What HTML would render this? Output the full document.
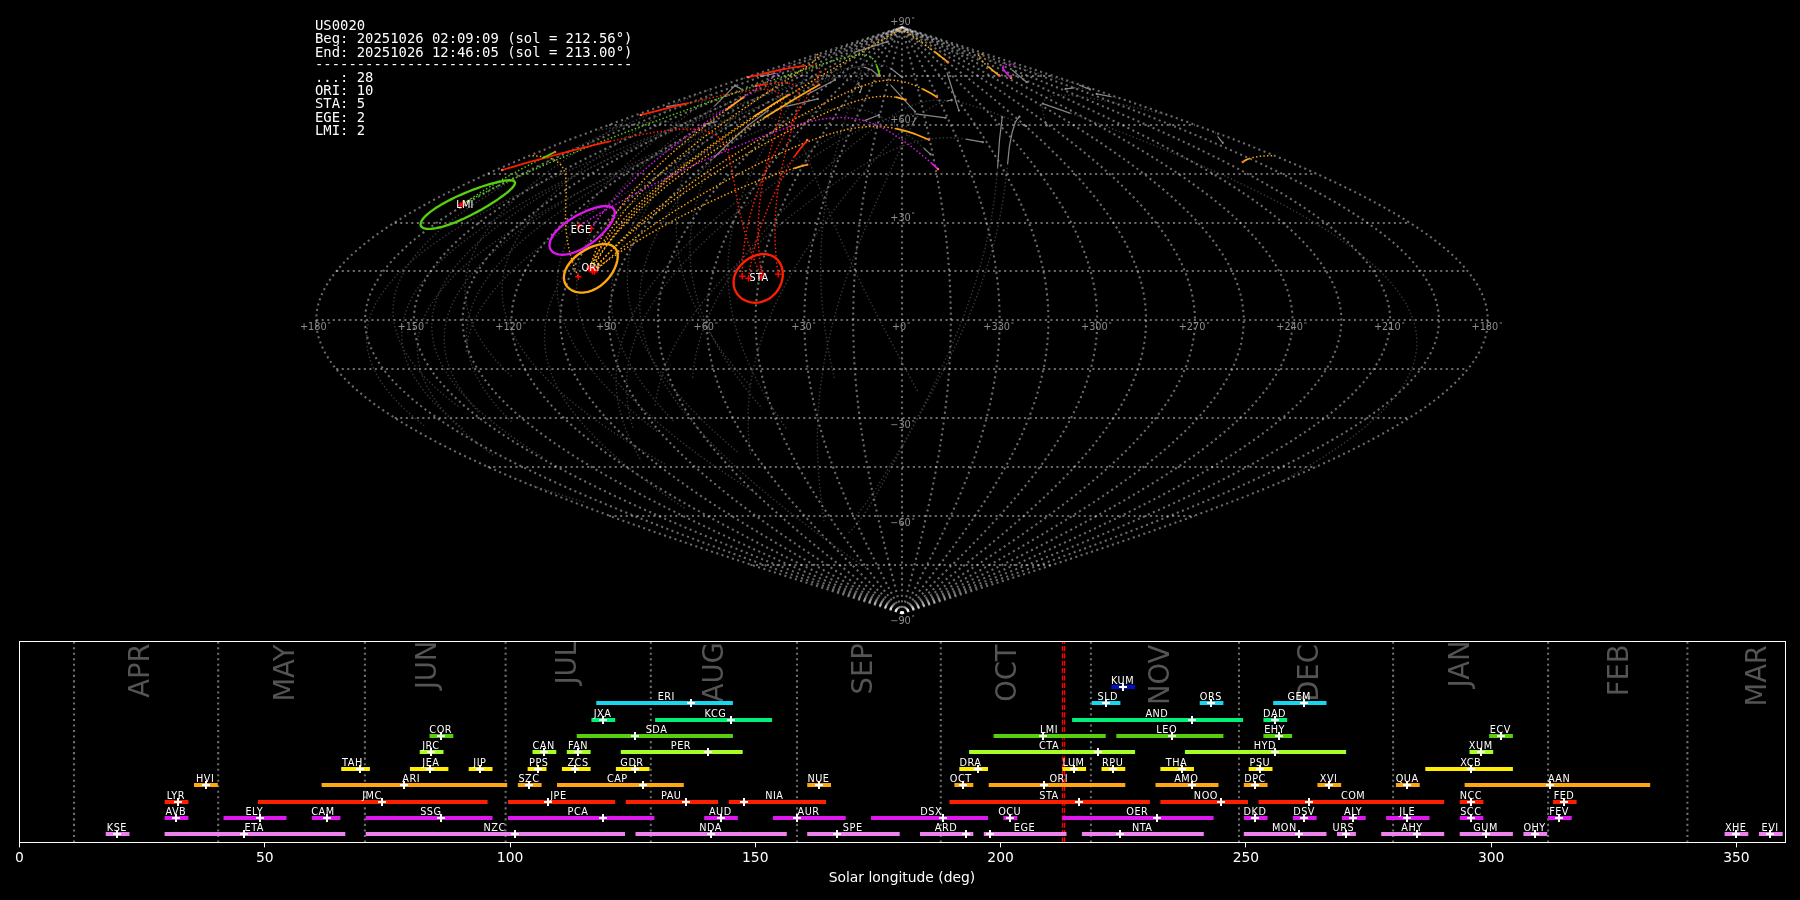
<!DOCTYPE html>
<html lang="en"><head><meta charset="utf-8"><title>US0020 meteor radiants</title>
<style>html,body{margin:0;padding:0;background:#000;overflow:hidden}svg{display:block;will-change:transform;opacity:0.999}</style>
</head><body>
<svg width="1800" height="900" viewBox="0 0 1800 900">
<g fill="none" stroke="#fff" stroke-opacity="0.42" stroke-width="2.08" stroke-dasharray="2.08 3.44">
<path d="M750.4 565 L1053.6 565"/>
<path d="M609.1 516 L1194.9 516"/>
<path d="M487.8 467 L1316.2 467"/>
<path d="M394.7 418 L1409.3 418"/>
<path d="M336.2 369 L1467.8 369"/>
<path d="M316.2 320 L1487.8 320"/>
<path d="M336.2 271 L1467.8 271"/>
<path d="M394.7 223 L1409.3 223"/>
<path d="M487.8 174 L1316.2 174"/>
<path d="M609.1 125 L1194.9 125"/>
<path d="M750.4 76 L1053.6 76"/>
<path d="M902 613.3 L912.2 610 L922.4 606.8 L932.7 603.5 L942.9 600.3 L953.1 597 L963.2 593.8 L973.4 590.5 L983.5 587.2 L993.6 584 L1003.7 580.7 L1013.8 577.5 L1023.8 574.2 L1033.8 571 L1043.7 567.7 L1053.6 564.5 L1063.5 561.2 L1073.3 557.9 L1083 554.7 L1092.7 551.4 L1102.4 548.2 L1111.9 544.9 L1121.4 541.7 L1130.9 538.4 L1140.3 535.1 L1149.6 531.9 L1158.8 528.6 L1167.9 525.4 L1177 522.1 L1186 518.9 L1194.9 515.6 L1203.7 512.3 L1212.4 509.1 L1221 505.8 L1229.6 502.6 L1238 499.3 L1246.3 496.1 L1254.5 492.8 L1262.6 489.5 L1270.7 486.3 L1278.5 483 L1286.3 479.8 L1294 476.5 L1301.5 473.3 L1308.9 470 L1316.2 466.8 L1323.4 463.5 L1330.4 460.2 L1337.3 457 L1344.1 453.7 L1350.7 450.5 L1357.2 447.2 L1363.6 444 L1369.8 440.7 L1375.9 437.4 L1381.9 434.2 L1387.6 430.9 L1393.3 427.7 L1398.8 424.4 L1404.1 421.2 L1409.3 417.9 L1414.3 414.6 L1419.2 411.4 L1423.9 408.1 L1428.5 404.9 L1432.9 401.6 L1437.1 398.4 L1441.2 395.1 L1445.1 391.8 L1448.9 388.6 L1452.5 385.3 L1455.9 382.1 L1459.1 378.8 L1462.2 375.6 L1465.1 372.3 L1467.8 369.1 L1470.4 365.8 L1472.8 362.5 L1475 359.3 L1477 356 L1478.9 352.8 L1480.6 349.5 L1482.1 346.3 L1483.4 343 L1484.6 339.7 L1485.6 336.5 L1486.4 333.2 L1487 330 L1487.4 326.7 L1487.7 323.5 L1487.8 320.2 L1487.7 316.9 L1487.4 313.7 L1487 310.4 L1486.4 307.2 L1485.6 303.9 L1484.6 300.7 L1483.4 297.4 L1482.1 294.1 L1480.6 290.9 L1478.9 287.6 L1477 284.4 L1475 281.1 L1472.8 277.9 L1470.4 274.6 L1467.8 271.3 L1465.1 268.1 L1462.2 264.8 L1459.1 261.6 L1455.9 258.3 L1452.5 255.1 L1448.9 251.8 L1445.1 248.6 L1441.2 245.3 L1437.1 242 L1432.9 238.8 L1428.5 235.5 L1423.9 232.3 L1419.2 229 L1414.3 225.8 L1409.3 222.5 L1404.1 219.2 L1398.8 216 L1393.3 212.7 L1387.6 209.5 L1381.9 206.2 L1375.9 203 L1369.8 199.7 L1363.6 196.4 L1357.2 193.2 L1350.7 189.9 L1344.1 186.7 L1337.3 183.4 L1330.4 180.2 L1323.4 176.9 L1316.2 173.6 L1308.9 170.4 L1301.5 167.1 L1294 163.9 L1286.3 160.6 L1278.5 157.4 L1270.7 154.1 L1262.6 150.9 L1254.5 147.6 L1246.3 144.3 L1238 141.1 L1229.6 137.8 L1221 134.6 L1212.4 131.3 L1203.7 128.1 L1194.9 124.8 L1186 121.5 L1177 118.3 L1167.9 115 L1158.8 111.8 L1149.6 108.5 L1140.3 105.3 L1130.9 102 L1121.4 98.7 L1111.9 95.5 L1102.4 92.2 L1092.7 89 L1083 85.7 L1073.3 82.5 L1063.5 79.2 L1053.6 75.9 L1043.7 72.7 L1033.8 69.4 L1023.8 66.2 L1013.8 62.9 L1003.7 59.7 L993.6 56.4 L983.5 53.2 L973.4 49.9 L963.2 46.6 L953.1 43.4 L942.9 40.1 L932.7 36.9 L922.4 33.6 L912.2 30.4 L902 27.1"/>
<path d="M902 613.3 L911.4 610 L920.7 606.8 L930.1 603.5 L939.5 600.3 L948.8 597 L958.1 593.8 L967.4 590.5 L976.7 587.2 L986 584 L995.2 580.7 L1004.5 577.5 L1013.6 574.2 L1022.8 571 L1031.9 567.7 L1041 564.5 L1050 561.2 L1059 557.9 L1067.9 554.7 L1076.8 551.4 L1085.7 548.2 L1094.4 544.9 L1103.2 541.7 L1111.8 538.4 L1120.4 535.1 L1128.9 531.9 L1137.4 528.6 L1145.8 525.4 L1154.1 522.1 L1162.3 518.9 L1170.5 515.6 L1178.6 512.3 L1186.6 509.1 L1194.5 505.8 L1202.3 502.6 L1210 499.3 L1217.6 496.1 L1225.2 492.8 L1232.6 489.5 L1239.9 486.3 L1247.2 483 L1254.3 479.8 L1261.3 476.5 L1268.2 473.3 L1275 470 L1281.7 466.8 L1288.3 463.5 L1294.7 460.2 L1301.1 457 L1307.3 453.7 L1313.3 450.5 L1319.3 447.2 L1325.1 444 L1330.8 440.7 L1336.4 437.4 L1341.9 434.2 L1347.2 430.9 L1352.3 427.7 L1357.4 424.4 L1362.3 421.2 L1367 417.9 L1371.6 414.6 L1376.1 411.4 L1380.4 408.1 L1384.6 404.9 L1388.7 401.6 L1392.6 398.4 L1396.3 395.1 L1399.9 391.8 L1403.3 388.6 L1406.6 385.3 L1409.7 382.1 L1412.7 378.8 L1415.5 375.6 L1418.2 372.3 L1420.7 369.1 L1423 365.8 L1425.2 362.5 L1427.2 359.3 L1429.1 356 L1430.8 352.8 L1432.4 349.5 L1433.8 346.3 L1435 343 L1436 339.7 L1436.9 336.5 L1437.7 333.2 L1438.2 330 L1438.6 326.7 L1438.9 323.5 L1439 320.2 L1438.9 316.9 L1438.6 313.7 L1438.2 310.4 L1437.7 307.2 L1436.9 303.9 L1436 300.7 L1435 297.4 L1433.8 294.1 L1432.4 290.9 L1430.8 287.6 L1429.1 284.4 L1427.2 281.1 L1425.2 277.9 L1423 274.6 L1420.7 271.3 L1418.2 268.1 L1415.5 264.8 L1412.7 261.6 L1409.7 258.3 L1406.6 255.1 L1403.3 251.8 L1399.9 248.6 L1396.3 245.3 L1392.6 242 L1388.7 238.8 L1384.6 235.5 L1380.4 232.3 L1376.1 229 L1371.6 225.8 L1367 222.5 L1362.3 219.2 L1357.4 216 L1352.3 212.7 L1347.2 209.5 L1341.9 206.2 L1336.4 203 L1330.8 199.7 L1325.1 196.4 L1319.3 193.2 L1313.3 189.9 L1307.3 186.7 L1301.1 183.4 L1294.7 180.2 L1288.3 176.9 L1281.7 173.6 L1275 170.4 L1268.2 167.1 L1261.3 163.9 L1254.3 160.6 L1247.2 157.4 L1239.9 154.1 L1232.6 150.9 L1225.2 147.6 L1217.6 144.3 L1210 141.1 L1202.3 137.8 L1194.5 134.6 L1186.6 131.3 L1178.6 128.1 L1170.5 124.8 L1162.3 121.5 L1154.1 118.3 L1145.8 115 L1137.4 111.8 L1128.9 108.5 L1120.4 105.3 L1111.8 102 L1103.2 98.7 L1094.4 95.5 L1085.7 92.2 L1076.8 89 L1067.9 85.7 L1059 82.5 L1050 79.2 L1041 75.9 L1031.9 72.7 L1022.8 69.4 L1013.6 66.2 L1004.5 62.9 L995.2 59.7 L986 56.4 L976.7 53.2 L967.4 49.9 L958.1 46.6 L948.8 43.4 L939.5 40.1 L930.1 36.9 L920.7 33.6 L911.4 30.4 L902 27.1"/>
<path d="M902 613.3 L910.5 610 L919 606.8 L927.5 603.5 L936.1 600.3 L944.5 597 L953 593.8 L961.5 590.5 L969.9 587.2 L978.4 584 L986.8 580.7 L995.1 577.5 L1003.5 574.2 L1011.8 571 L1020.1 567.7 L1028.3 564.5 L1036.6 561.2 L1044.7 557.9 L1052.8 554.7 L1060.9 551.4 L1069 548.2 L1076.9 544.9 L1084.9 541.7 L1092.7 538.4 L1100.6 535.1 L1108.3 531.9 L1116 528.6 L1123.6 525.4 L1131.2 522.1 L1138.7 518.9 L1146.1 515.6 L1153.4 512.3 L1160.7 509.1 L1167.9 505.8 L1175 502.6 L1182 499.3 L1188.9 496.1 L1195.8 492.8 L1202.5 489.5 L1209.2 486.3 L1215.8 483 L1222.3 479.8 L1228.6 476.5 L1234.9 473.3 L1241.1 470 L1247.2 466.8 L1253.2 463.5 L1259 460.2 L1264.8 457 L1270.4 453.7 L1276 450.5 L1281.4 447.2 L1286.7 444 L1291.9 440.7 L1296.9 437.4 L1301.9 434.2 L1306.7 430.9 L1311.4 427.7 L1316 424.4 L1320.4 421.2 L1324.8 417.9 L1329 414.6 L1333 411.4 L1337 408.1 L1340.8 404.9 L1344.4 401.6 L1348 398.4 L1351.4 395.1 L1354.6 391.8 L1357.7 388.6 L1360.7 385.3 L1363.6 382.1 L1366.3 378.8 L1368.8 375.6 L1371.2 372.3 L1373.5 369.1 L1375.7 365.8 L1377.6 362.5 L1379.5 359.3 L1381.2 356 L1382.7 352.8 L1384.1 349.5 L1385.4 346.3 L1386.5 343 L1387.5 339.7 L1388.3 336.5 L1389 333.2 L1389.5 330 L1389.9 326.7 L1390.1 323.5 L1390.2 320.2 L1390.1 316.9 L1389.9 313.7 L1389.5 310.4 L1389 307.2 L1388.3 303.9 L1387.5 300.7 L1386.5 297.4 L1385.4 294.1 L1384.1 290.9 L1382.7 287.6 L1381.2 284.4 L1379.5 281.1 L1377.6 277.9 L1375.7 274.6 L1373.5 271.3 L1371.2 268.1 L1368.8 264.8 L1366.3 261.6 L1363.6 258.3 L1360.7 255.1 L1357.7 251.8 L1354.6 248.6 L1351.4 245.3 L1348 242 L1344.4 238.8 L1340.8 235.5 L1337 232.3 L1333 229 L1329 225.8 L1324.8 222.5 L1320.4 219.2 L1316 216 L1311.4 212.7 L1306.7 209.5 L1301.9 206.2 L1296.9 203 L1291.9 199.7 L1286.7 196.4 L1281.4 193.2 L1276 189.9 L1270.4 186.7 L1264.8 183.4 L1259 180.2 L1253.2 176.9 L1247.2 173.6 L1241.1 170.4 L1234.9 167.1 L1228.6 163.9 L1222.3 160.6 L1215.8 157.4 L1209.2 154.1 L1202.5 150.9 L1195.8 147.6 L1188.9 144.3 L1182 141.1 L1175 137.8 L1167.9 134.6 L1160.7 131.3 L1153.4 128.1 L1146.1 124.8 L1138.7 121.5 L1131.2 118.3 L1123.6 115 L1116 111.8 L1108.3 108.5 L1100.6 105.3 L1092.7 102 L1084.9 98.7 L1076.9 95.5 L1069 92.2 L1060.9 89 L1052.8 85.7 L1044.7 82.5 L1036.6 79.2 L1028.3 75.9 L1020.1 72.7 L1011.8 69.4 L1003.5 66.2 L995.1 62.9 L986.8 59.7 L978.4 56.4 L969.9 53.2 L961.5 49.9 L953 46.6 L944.5 43.4 L936.1 40.1 L927.5 36.9 L919 33.6 L910.5 30.4 L902 27.1"/>
<path d="M902 613.3 L909.7 610 L917.3 606.8 L925 603.5 L932.6 600.3 L940.3 597 L947.9 593.8 L955.5 590.5 L963.1 587.2 L970.7 584 L978.3 580.7 L985.8 577.5 L993.3 574.2 L1000.8 571 L1008.3 567.7 L1015.7 564.5 L1023.1 561.2 L1030.5 557.9 L1037.8 554.7 L1045 551.4 L1052.3 548.2 L1059.4 544.9 L1066.6 541.7 L1073.7 538.4 L1080.7 535.1 L1087.7 531.9 L1094.6 528.6 L1101.5 525.4 L1108.3 522.1 L1115 518.9 L1121.7 515.6 L1128.3 512.3 L1134.8 509.1 L1141.3 505.8 L1147.7 502.6 L1154 499.3 L1160.2 496.1 L1166.4 492.8 L1172.5 489.5 L1178.5 486.3 L1184.4 483 L1190.2 479.8 L1196 476.5 L1201.6 473.3 L1207.2 470 L1212.7 466.8 L1218 463.5 L1223.3 460.2 L1228.5 457 L1233.6 453.7 L1238.6 450.5 L1243.4 447.2 L1248.2 444 L1252.9 440.7 L1257.4 437.4 L1261.9 434.2 L1266.2 430.9 L1270.5 427.7 L1274.6 424.4 L1278.6 421.2 L1282.5 417.9 L1286.3 414.6 L1289.9 411.4 L1293.5 408.1 L1296.9 404.9 L1300.2 401.6 L1303.4 398.4 L1306.4 395.1 L1309.4 391.8 L1312.2 388.6 L1314.8 385.3 L1317.4 382.1 L1319.8 378.8 L1322.1 375.6 L1324.3 372.3 L1326.4 369.1 L1328.3 365.8 L1330.1 362.5 L1331.7 359.3 L1333.3 356 L1334.7 352.8 L1335.9 349.5 L1337.1 346.3 L1338.1 343 L1338.9 339.7 L1339.7 336.5 L1340.3 333.2 L1340.7 330 L1341.1 326.7 L1341.3 323.5 L1341.3 320.2 L1341.3 316.9 L1341.1 313.7 L1340.7 310.4 L1340.3 307.2 L1339.7 303.9 L1338.9 300.7 L1338.1 297.4 L1337.1 294.1 L1335.9 290.9 L1334.7 287.6 L1333.3 284.4 L1331.7 281.1 L1330.1 277.9 L1328.3 274.6 L1326.4 271.3 L1324.3 268.1 L1322.1 264.8 L1319.8 261.6 L1317.4 258.3 L1314.8 255.1 L1312.2 251.8 L1309.4 248.6 L1306.4 245.3 L1303.4 242 L1300.2 238.8 L1296.9 235.5 L1293.5 232.3 L1289.9 229 L1286.3 225.8 L1282.5 222.5 L1278.6 219.2 L1274.6 216 L1270.5 212.7 L1266.2 209.5 L1261.9 206.2 L1257.4 203 L1252.9 199.7 L1248.2 196.4 L1243.4 193.2 L1238.6 189.9 L1233.6 186.7 L1228.5 183.4 L1223.3 180.2 L1218 176.9 L1212.7 173.6 L1207.2 170.4 L1201.6 167.1 L1196 163.9 L1190.2 160.6 L1184.4 157.4 L1178.5 154.1 L1172.5 150.9 L1166.4 147.6 L1160.2 144.3 L1154 141.1 L1147.7 137.8 L1141.3 134.6 L1134.8 131.3 L1128.3 128.1 L1121.7 124.8 L1115 121.5 L1108.3 118.3 L1101.5 115 L1094.6 111.8 L1087.7 108.5 L1080.7 105.3 L1073.7 102 L1066.6 98.7 L1059.4 95.5 L1052.3 92.2 L1045 89 L1037.8 85.7 L1030.5 82.5 L1023.1 79.2 L1015.7 75.9 L1008.3 72.7 L1000.8 69.4 L993.3 66.2 L985.8 62.9 L978.3 59.7 L970.7 56.4 L963.1 53.2 L955.5 49.9 L947.9 46.6 L940.3 43.4 L932.6 40.1 L925 36.9 L917.3 33.6 L909.7 30.4 L902 27.1"/>
<path d="M902 613.3 L908.8 610 L915.6 606.8 L922.4 603.5 L929.2 600.3 L936 597 L942.8 593.8 L949.6 590.5 L956.4 587.2 L963.1 584 L969.8 580.7 L976.5 577.5 L983.2 574.2 L989.8 571 L996.5 567.7 L1003.1 564.5 L1009.6 561.2 L1016.2 557.9 L1022.7 554.7 L1029.1 551.4 L1035.6 548.2 L1042 544.9 L1048.3 541.7 L1054.6 538.4 L1060.8 535.1 L1067 531.9 L1073.2 528.6 L1079.3 525.4 L1085.3 522.1 L1091.3 518.9 L1097.3 515.6 L1103.1 512.3 L1108.9 509.1 L1114.7 505.8 L1120.4 502.6 L1126 499.3 L1131.5 496.1 L1137 492.8 L1142.4 489.5 L1147.8 486.3 L1153 483 L1158.2 479.8 L1163.3 476.5 L1168.3 473.3 L1173.3 470 L1178.1 466.8 L1182.9 463.5 L1187.6 460.2 L1192.2 457 L1196.7 453.7 L1201.2 450.5 L1205.5 447.2 L1209.7 444 L1213.9 440.7 L1217.9 437.4 L1221.9 434.2 L1225.8 430.9 L1229.5 427.7 L1233.2 424.4 L1236.7 421.2 L1240.2 417.9 L1243.6 414.6 L1246.8 411.4 L1250 408.1 L1253 404.9 L1255.9 401.6 L1258.8 398.4 L1261.5 395.1 L1264.1 391.8 L1266.6 388.6 L1269 385.3 L1271.3 382.1 L1273.4 378.8 L1275.5 375.6 L1277.4 372.3 L1279.2 369.1 L1280.9 365.8 L1282.5 362.5 L1284 359.3 L1285.4 356 L1286.6 352.8 L1287.7 349.5 L1288.7 346.3 L1289.6 343 L1290.4 339.7 L1291 336.5 L1291.6 333.2 L1292 330 L1292.3 326.7 L1292.5 323.5 L1292.5 320.2 L1292.5 316.9 L1292.3 313.7 L1292 310.4 L1291.6 307.2 L1291 303.9 L1290.4 300.7 L1289.6 297.4 L1288.7 294.1 L1287.7 290.9 L1286.6 287.6 L1285.4 284.4 L1284 281.1 L1282.5 277.9 L1280.9 274.6 L1279.2 271.3 L1277.4 268.1 L1275.5 264.8 L1273.4 261.6 L1271.3 258.3 L1269 255.1 L1266.6 251.8 L1264.1 248.6 L1261.5 245.3 L1258.8 242 L1255.9 238.8 L1253 235.5 L1250 232.3 L1246.8 229 L1243.6 225.8 L1240.2 222.5 L1236.7 219.2 L1233.2 216 L1229.5 212.7 L1225.8 209.5 L1221.9 206.2 L1217.9 203 L1213.9 199.7 L1209.7 196.4 L1205.5 193.2 L1201.2 189.9 L1196.7 186.7 L1192.2 183.4 L1187.6 180.2 L1182.9 176.9 L1178.1 173.6 L1173.3 170.4 L1168.3 167.1 L1163.3 163.9 L1158.2 160.6 L1153 157.4 L1147.8 154.1 L1142.4 150.9 L1137 147.6 L1131.5 144.3 L1126 141.1 L1120.4 137.8 L1114.7 134.6 L1108.9 131.3 L1103.1 128.1 L1097.3 124.8 L1091.3 121.5 L1085.3 118.3 L1079.3 115 L1073.2 111.8 L1067 108.5 L1060.8 105.3 L1054.6 102 L1048.3 98.7 L1042 95.5 L1035.6 92.2 L1029.1 89 L1022.7 85.7 L1016.2 82.5 L1009.6 79.2 L1003.1 75.9 L996.5 72.7 L989.8 69.4 L983.2 66.2 L976.5 62.9 L969.8 59.7 L963.1 56.4 L956.4 53.2 L949.6 49.9 L942.8 46.6 L936 43.4 L929.2 40.1 L922.4 36.9 L915.6 33.6 L908.8 30.4 L902 27.1"/>
<path d="M902 613.3 L908 610 L913.9 606.8 L919.9 603.5 L925.8 600.3 L931.8 597 L937.7 593.8 L943.6 590.5 L949.6 587.2 L955.5 584 L961.3 580.7 L967.2 577.5 L973 574.2 L978.9 571 L984.7 567.7 L990.4 564.5 L996.2 561.2 L1001.9 557.9 L1007.6 554.7 L1013.3 551.4 L1018.9 548.2 L1024.5 544.9 L1030 541.7 L1035.5 538.4 L1041 535.1 L1046.4 531.9 L1051.8 528.6 L1057.1 525.4 L1062.4 522.1 L1067.7 518.9 L1072.9 515.6 L1078 512.3 L1083.1 509.1 L1088.1 505.8 L1093.1 502.6 L1098 499.3 L1102.9 496.1 L1107.6 492.8 L1112.4 489.5 L1117 486.3 L1121.6 483 L1126.2 479.8 L1130.6 476.5 L1135 473.3 L1139.4 470 L1143.6 466.8 L1147.8 463.5 L1151.9 460.2 L1155.9 457 L1159.9 453.7 L1163.8 450.5 L1167.6 447.2 L1171.3 444 L1174.9 440.7 L1178.5 437.4 L1181.9 434.2 L1185.3 430.9 L1188.6 427.7 L1191.8 424.4 L1194.9 421.2 L1197.9 417.9 L1200.9 414.6 L1203.7 411.4 L1206.5 408.1 L1209.1 404.9 L1211.7 401.6 L1214.2 398.4 L1216.5 395.1 L1218.8 391.8 L1221 388.6 L1223.1 385.3 L1225.1 382.1 L1227 378.8 L1228.8 375.6 L1230.5 372.3 L1232.1 369.1 L1233.6 365.8 L1235 362.5 L1236.2 359.3 L1237.4 356 L1238.5 352.8 L1239.5 349.5 L1240.4 346.3 L1241.2 343 L1241.8 339.7 L1242.4 336.5 L1242.9 333.2 L1243.2 330 L1243.5 326.7 L1243.7 323.5 L1243.7 320.2 L1243.7 316.9 L1243.5 313.7 L1243.2 310.4 L1242.9 307.2 L1242.4 303.9 L1241.8 300.7 L1241.2 297.4 L1240.4 294.1 L1239.5 290.9 L1238.5 287.6 L1237.4 284.4 L1236.2 281.1 L1235 277.9 L1233.6 274.6 L1232.1 271.3 L1230.5 268.1 L1228.8 264.8 L1227 261.6 L1225.1 258.3 L1223.1 255.1 L1221 251.8 L1218.8 248.6 L1216.5 245.3 L1214.2 242 L1211.7 238.8 L1209.1 235.5 L1206.5 232.3 L1203.7 229 L1200.9 225.8 L1197.9 222.5 L1194.9 219.2 L1191.8 216 L1188.6 212.7 L1185.3 209.5 L1181.9 206.2 L1178.5 203 L1174.9 199.7 L1171.3 196.4 L1167.6 193.2 L1163.8 189.9 L1159.9 186.7 L1155.9 183.4 L1151.9 180.2 L1147.8 176.9 L1143.6 173.6 L1139.4 170.4 L1135 167.1 L1130.6 163.9 L1126.2 160.6 L1121.6 157.4 L1117 154.1 L1112.4 150.9 L1107.6 147.6 L1102.9 144.3 L1098 141.1 L1093.1 137.8 L1088.1 134.6 L1083.1 131.3 L1078 128.1 L1072.9 124.8 L1067.7 121.5 L1062.4 118.3 L1057.1 115 L1051.8 111.8 L1046.4 108.5 L1041 105.3 L1035.5 102 L1030 98.7 L1024.5 95.5 L1018.9 92.2 L1013.3 89 L1007.6 85.7 L1001.9 82.5 L996.2 79.2 L990.4 75.9 L984.7 72.7 L978.9 69.4 L973 66.2 L967.2 62.9 L961.3 59.7 L955.5 56.4 L949.6 53.2 L943.6 49.9 L937.7 46.6 L931.8 43.4 L925.8 40.1 L919.9 36.9 L913.9 33.6 L908 30.4 L902 27.1"/>
<path d="M902 613.3 L907.1 610 L912.2 606.8 L917.3 603.5 L922.4 600.3 L927.5 597 L932.6 593.8 L937.7 590.5 L942.8 587.2 L947.8 584 L952.9 580.7 L957.9 577.5 L962.9 574.2 L967.9 571 L972.9 567.7 L977.8 564.5 L982.7 561.2 L987.6 557.9 L992.5 554.7 L997.4 551.4 L1002.2 548.2 L1007 544.9 L1011.7 541.7 L1016.4 538.4 L1021.1 535.1 L1025.8 531.9 L1030.4 528.6 L1035 525.4 L1039.5 522.1 L1044 518.9 L1048.4 515.6 L1052.9 512.3 L1057.2 509.1 L1061.5 505.8 L1065.8 502.6 L1070 499.3 L1074.2 496.1 L1078.3 492.8 L1082.3 489.5 L1086.3 486.3 L1090.3 483 L1094.2 479.8 L1098 476.5 L1101.8 473.3 L1105.5 470 L1109.1 466.8 L1112.7 463.5 L1116.2 460.2 L1119.7 457 L1123.1 453.7 L1126.4 450.5 L1129.6 447.2 L1132.8 444 L1135.9 440.7 L1139 437.4 L1141.9 434.2 L1144.8 430.9 L1147.6 427.7 L1150.4 424.4 L1153.1 421.2 L1155.7 417.9 L1158.2 414.6 L1160.6 411.4 L1163 408.1 L1165.3 404.9 L1167.5 401.6 L1169.6 398.4 L1171.6 395.1 L1173.6 391.8 L1175.4 388.6 L1177.2 385.3 L1178.9 382.1 L1180.6 378.8 L1182.1 375.6 L1183.5 372.3 L1184.9 369.1 L1186.2 365.8 L1187.4 362.5 L1188.5 359.3 L1189.5 356 L1190.4 352.8 L1191.3 349.5 L1192 346.3 L1192.7 343 L1193.3 339.7 L1193.8 336.5 L1194.2 333.2 L1194.5 330 L1194.7 326.7 L1194.9 323.5 L1194.9 320.2 L1194.9 316.9 L1194.7 313.7 L1194.5 310.4 L1194.2 307.2 L1193.8 303.9 L1193.3 300.7 L1192.7 297.4 L1192 294.1 L1191.3 290.9 L1190.4 287.6 L1189.5 284.4 L1188.5 281.1 L1187.4 277.9 L1186.2 274.6 L1184.9 271.3 L1183.5 268.1 L1182.1 264.8 L1180.6 261.6 L1178.9 258.3 L1177.2 255.1 L1175.4 251.8 L1173.6 248.6 L1171.6 245.3 L1169.6 242 L1167.5 238.8 L1165.3 235.5 L1163 232.3 L1160.6 229 L1158.2 225.8 L1155.7 222.5 L1153.1 219.2 L1150.4 216 L1147.6 212.7 L1144.8 209.5 L1141.9 206.2 L1139 203 L1135.9 199.7 L1132.8 196.4 L1129.6 193.2 L1126.4 189.9 L1123.1 186.7 L1119.7 183.4 L1116.2 180.2 L1112.7 176.9 L1109.1 173.6 L1105.5 170.4 L1101.8 167.1 L1098 163.9 L1094.2 160.6 L1090.3 157.4 L1086.3 154.1 L1082.3 150.9 L1078.3 147.6 L1074.2 144.3 L1070 141.1 L1065.8 137.8 L1061.5 134.6 L1057.2 131.3 L1052.9 128.1 L1048.4 124.8 L1044 121.5 L1039.5 118.3 L1035 115 L1030.4 111.8 L1025.8 108.5 L1021.1 105.3 L1016.4 102 L1011.7 98.7 L1007 95.5 L1002.2 92.2 L997.4 89 L992.5 85.7 L987.6 82.5 L982.7 79.2 L977.8 75.9 L972.9 72.7 L967.9 69.4 L962.9 66.2 L957.9 62.9 L952.9 59.7 L947.8 56.4 L942.8 53.2 L937.7 49.9 L932.6 46.6 L927.5 43.4 L922.4 40.1 L917.3 36.9 L912.2 33.6 L907.1 30.4 L902 27.1"/>
<path d="M902 613.3 L906.3 610 L910.5 606.8 L914.8 603.5 L919 600.3 L923.3 597 L927.5 593.8 L931.7 590.5 L936 587.2 L940.2 584 L944.4 580.7 L948.6 577.5 L952.7 574.2 L956.9 571 L961 567.7 L965.2 564.5 L969.3 561.2 L973.4 557.9 L977.4 554.7 L981.5 551.4 L985.5 548.2 L989.5 544.9 L993.4 541.7 L997.4 538.4 L1001.3 535.1 L1005.2 531.9 L1009 528.6 L1012.8 525.4 L1016.6 522.1 L1020.3 518.9 L1024 515.6 L1027.7 512.3 L1031.3 509.1 L1034.9 505.8 L1038.5 502.6 L1042 499.3 L1045.5 496.1 L1048.9 492.8 L1052.3 489.5 L1055.6 486.3 L1058.9 483 L1062.1 479.8 L1065.3 476.5 L1068.5 473.3 L1071.6 470 L1074.6 466.8 L1077.6 463.5 L1080.5 460.2 L1083.4 457 L1086.2 453.7 L1089 450.5 L1091.7 447.2 L1094.3 444 L1096.9 440.7 L1099.5 437.4 L1101.9 434.2 L1104.4 430.9 L1106.7 427.7 L1109 424.4 L1111.2 421.2 L1113.4 417.9 L1115.5 414.6 L1117.5 411.4 L1119.5 408.1 L1121.4 404.9 L1123.2 401.6 L1125 398.4 L1126.7 395.1 L1128.3 391.8 L1129.9 388.6 L1131.4 385.3 L1132.8 382.1 L1134.1 378.8 L1135.4 375.6 L1136.6 372.3 L1137.8 369.1 L1138.8 365.8 L1139.8 362.5 L1140.7 359.3 L1141.6 356 L1142.4 352.8 L1143.1 349.5 L1143.7 346.3 L1144.3 343 L1144.7 339.7 L1145.2 336.5 L1145.5 333.2 L1145.7 330 L1145.9 326.7 L1146 323.5 L1146.1 320.2 L1146 316.9 L1145.9 313.7 L1145.7 310.4 L1145.5 307.2 L1145.2 303.9 L1144.7 300.7 L1144.3 297.4 L1143.7 294.1 L1143.1 290.9 L1142.4 287.6 L1141.6 284.4 L1140.7 281.1 L1139.8 277.9 L1138.8 274.6 L1137.8 271.3 L1136.6 268.1 L1135.4 264.8 L1134.1 261.6 L1132.8 258.3 L1131.4 255.1 L1129.9 251.8 L1128.3 248.6 L1126.7 245.3 L1125 242 L1123.2 238.8 L1121.4 235.5 L1119.5 232.3 L1117.5 229 L1115.5 225.8 L1113.4 222.5 L1111.2 219.2 L1109 216 L1106.7 212.7 L1104.4 209.5 L1101.9 206.2 L1099.5 203 L1096.9 199.7 L1094.3 196.4 L1091.7 193.2 L1089 189.9 L1086.2 186.7 L1083.4 183.4 L1080.5 180.2 L1077.6 176.9 L1074.6 173.6 L1071.6 170.4 L1068.5 167.1 L1065.3 163.9 L1062.1 160.6 L1058.9 157.4 L1055.6 154.1 L1052.3 150.9 L1048.9 147.6 L1045.5 144.3 L1042 141.1 L1038.5 137.8 L1034.9 134.6 L1031.3 131.3 L1027.7 128.1 L1024 124.8 L1020.3 121.5 L1016.6 118.3 L1012.8 115 L1009 111.8 L1005.2 108.5 L1001.3 105.3 L997.4 102 L993.4 98.7 L989.5 95.5 L985.5 92.2 L981.5 89 L977.4 85.7 L973.4 82.5 L969.3 79.2 L965.2 75.9 L961 72.7 L956.9 69.4 L952.7 66.2 L948.6 62.9 L944.4 59.7 L940.2 56.4 L936 53.2 L931.7 49.9 L927.5 46.6 L923.3 43.4 L919 40.1 L914.8 36.9 L910.5 33.6 L906.3 30.4 L902 27.1"/>
<path d="M902 613.3 L905.4 610 L908.8 606.8 L912.2 603.5 L915.6 600.3 L919 597 L922.4 593.8 L925.8 590.5 L929.2 587.2 L932.5 584 L935.9 580.7 L939.3 577.5 L942.6 574.2 L945.9 571 L949.2 567.7 L952.5 564.5 L955.8 561.2 L959.1 557.9 L962.3 554.7 L965.6 551.4 L968.8 548.2 L972 544.9 L975.1 541.7 L978.3 538.4 L981.4 535.1 L984.5 531.9 L987.6 528.6 L990.6 525.4 L993.7 522.1 L996.7 518.9 L999.6 515.6 L1002.6 512.3 L1005.5 509.1 L1008.3 505.8 L1011.2 502.6 L1014 499.3 L1016.8 496.1 L1019.5 492.8 L1022.2 489.5 L1024.9 486.3 L1027.5 483 L1030.1 479.8 L1032.7 476.5 L1035.2 473.3 L1037.6 470 L1040.1 466.8 L1042.5 463.5 L1044.8 460.2 L1047.1 457 L1049.4 453.7 L1051.6 450.5 L1053.7 447.2 L1055.9 444 L1057.9 440.7 L1060 437.4 L1062 434.2 L1063.9 430.9 L1065.8 427.7 L1067.6 424.4 L1069.4 421.2 L1071.1 417.9 L1072.8 414.6 L1074.4 411.4 L1076 408.1 L1077.5 404.9 L1079 401.6 L1080.4 398.4 L1081.7 395.1 L1083 391.8 L1084.3 388.6 L1085.5 385.3 L1086.6 382.1 L1087.7 378.8 L1088.7 375.6 L1089.7 372.3 L1090.6 369.1 L1091.5 365.8 L1092.3 362.5 L1093 359.3 L1093.7 356 L1094.3 352.8 L1094.9 349.5 L1095.4 346.3 L1095.8 343 L1096.2 339.7 L1096.5 336.5 L1096.8 333.2 L1097 330 L1097.1 326.7 L1097.2 323.5 L1097.3 320.2 L1097.2 316.9 L1097.1 313.7 L1097 310.4 L1096.8 307.2 L1096.5 303.9 L1096.2 300.7 L1095.8 297.4 L1095.4 294.1 L1094.9 290.9 L1094.3 287.6 L1093.7 284.4 L1093 281.1 L1092.3 277.9 L1091.5 274.6 L1090.6 271.3 L1089.7 268.1 L1088.7 264.8 L1087.7 261.6 L1086.6 258.3 L1085.5 255.1 L1084.3 251.8 L1083 248.6 L1081.7 245.3 L1080.4 242 L1079 238.8 L1077.5 235.5 L1076 232.3 L1074.4 229 L1072.8 225.8 L1071.1 222.5 L1069.4 219.2 L1067.6 216 L1065.8 212.7 L1063.9 209.5 L1062 206.2 L1060 203 L1057.9 199.7 L1055.9 196.4 L1053.7 193.2 L1051.6 189.9 L1049.4 186.7 L1047.1 183.4 L1044.8 180.2 L1042.5 176.9 L1040.1 173.6 L1037.6 170.4 L1035.2 167.1 L1032.7 163.9 L1030.1 160.6 L1027.5 157.4 L1024.9 154.1 L1022.2 150.9 L1019.5 147.6 L1016.8 144.3 L1014 141.1 L1011.2 137.8 L1008.3 134.6 L1005.5 131.3 L1002.6 128.1 L999.6 124.8 L996.7 121.5 L993.7 118.3 L990.6 115 L987.6 111.8 L984.5 108.5 L981.4 105.3 L978.3 102 L975.1 98.7 L972 95.5 L968.8 92.2 L965.6 89 L962.3 85.7 L959.1 82.5 L955.8 79.2 L952.5 75.9 L949.2 72.7 L945.9 69.4 L942.6 66.2 L939.3 62.9 L935.9 59.7 L932.5 56.4 L929.2 53.2 L925.8 49.9 L922.4 46.6 L919 43.4 L915.6 40.1 L912.2 36.9 L908.8 33.6 L905.4 30.4 L902 27.1"/>
<path d="M902 613.3 L904.6 610 L907.1 606.8 L909.7 603.5 L912.2 600.3 L914.8 597 L917.3 593.8 L919.8 590.5 L922.4 587.2 L924.9 584 L927.4 580.7 L929.9 577.5 L932.4 574.2 L934.9 571 L937.4 567.7 L939.9 564.5 L942.4 561.2 L944.8 557.9 L947.3 554.7 L949.7 551.4 L952.1 548.2 L954.5 544.9 L956.9 541.7 L959.2 538.4 L961.6 535.1 L963.9 531.9 L966.2 528.6 L968.5 525.4 L970.8 522.1 L973 518.9 L975.2 515.6 L977.4 512.3 L979.6 509.1 L981.8 505.8 L983.9 502.6 L986 499.3 L988.1 496.1 L990.1 492.8 L992.2 489.5 L994.2 486.3 L996.1 483 L998.1 479.8 L1000 476.5 L1001.9 473.3 L1003.7 470 L1005.6 466.8 L1007.3 463.5 L1009.1 460.2 L1010.8 457 L1012.5 453.7 L1014.2 450.5 L1015.8 447.2 L1017.4 444 L1019 440.7 L1020.5 437.4 L1022 434.2 L1023.4 430.9 L1024.8 427.7 L1026.2 424.4 L1027.5 421.2 L1028.8 417.9 L1030.1 414.6 L1031.3 411.4 L1032.5 408.1 L1033.6 404.9 L1034.7 401.6 L1035.8 398.4 L1036.8 395.1 L1037.8 391.8 L1038.7 388.6 L1039.6 385.3 L1040.5 382.1 L1041.3 378.8 L1042 375.6 L1042.8 372.3 L1043.5 369.1 L1044.1 365.8 L1044.7 362.5 L1045.2 359.3 L1045.8 356 L1046.2 352.8 L1046.6 349.5 L1047 346.3 L1047.4 343 L1047.6 339.7 L1047.9 336.5 L1048.1 333.2 L1048.2 330 L1048.4 326.7 L1048.4 323.5 L1048.4 320.2 L1048.4 316.9 L1048.4 313.7 L1048.2 310.4 L1048.1 307.2 L1047.9 303.9 L1047.6 300.7 L1047.4 297.4 L1047 294.1 L1046.6 290.9 L1046.2 287.6 L1045.8 284.4 L1045.2 281.1 L1044.7 277.9 L1044.1 274.6 L1043.5 271.3 L1042.8 268.1 L1042 264.8 L1041.3 261.6 L1040.5 258.3 L1039.6 255.1 L1038.7 251.8 L1037.8 248.6 L1036.8 245.3 L1035.8 242 L1034.7 238.8 L1033.6 235.5 L1032.5 232.3 L1031.3 229 L1030.1 225.8 L1028.8 222.5 L1027.5 219.2 L1026.2 216 L1024.8 212.7 L1023.4 209.5 L1022 206.2 L1020.5 203 L1019 199.7 L1017.4 196.4 L1015.8 193.2 L1014.2 189.9 L1012.5 186.7 L1010.8 183.4 L1009.1 180.2 L1007.3 176.9 L1005.6 173.6 L1003.7 170.4 L1001.9 167.1 L1000 163.9 L998.1 160.6 L996.1 157.4 L994.2 154.1 L992.2 150.9 L990.1 147.6 L988.1 144.3 L986 141.1 L983.9 137.8 L981.8 134.6 L979.6 131.3 L977.4 128.1 L975.2 124.8 L973 121.5 L970.8 118.3 L968.5 115 L966.2 111.8 L963.9 108.5 L961.6 105.3 L959.2 102 L956.9 98.7 L954.5 95.5 L952.1 92.2 L949.7 89 L947.3 85.7 L944.8 82.5 L942.4 79.2 L939.9 75.9 L937.4 72.7 L934.9 69.4 L932.4 66.2 L929.9 62.9 L927.4 59.7 L924.9 56.4 L922.4 53.2 L919.8 49.9 L917.3 46.6 L914.8 43.4 L912.2 40.1 L909.7 36.9 L907.1 33.6 L904.6 30.4 L902 27.1"/>
<path d="M902 613.3 L903.7 610 L905.4 606.8 L907.1 603.5 L908.8 600.3 L910.5 597 L912.2 593.8 L913.9 590.5 L915.6 587.2 L917.3 584 L919 580.7 L920.6 577.5 L922.3 574.2 L924 571 L925.6 567.7 L927.3 564.5 L928.9 561.2 L930.5 557.9 L932.2 554.7 L933.8 551.4 L935.4 548.2 L937 544.9 L938.6 541.7 L940.1 538.4 L941.7 535.1 L943.3 531.9 L944.8 528.6 L946.3 525.4 L947.8 522.1 L949.3 518.9 L950.8 515.6 L952.3 512.3 L953.7 509.1 L955.2 505.8 L956.6 502.6 L958 499.3 L959.4 496.1 L960.8 492.8 L962.1 489.5 L963.4 486.3 L964.8 483 L966.1 479.8 L967.3 476.5 L968.6 473.3 L969.8 470 L971 466.8 L972.2 463.5 L973.4 460.2 L974.6 457 L975.7 453.7 L976.8 450.5 L977.9 447.2 L978.9 444 L980 440.7 L981 437.4 L982 434.2 L982.9 430.9 L983.9 427.7 L984.8 424.4 L985.7 421.2 L986.6 417.9 L987.4 414.6 L988.2 411.4 L989 408.1 L989.8 404.9 L990.5 401.6 L991.2 398.4 L991.9 395.1 L992.5 391.8 L993.1 388.6 L993.7 385.3 L994.3 382.1 L994.9 378.8 L995.4 375.6 L995.8 372.3 L996.3 369.1 L996.7 365.8 L997.1 362.5 L997.5 359.3 L997.8 356 L998.1 352.8 L998.4 349.5 L998.7 346.3 L998.9 343 L999.1 339.7 L999.3 336.5 L999.4 333.2 L999.5 330 L999.6 326.7 L999.6 323.5 L999.6 320.2 L999.6 316.9 L999.6 313.7 L999.5 310.4 L999.4 307.2 L999.3 303.9 L999.1 300.7 L998.9 297.4 L998.7 294.1 L998.4 290.9 L998.1 287.6 L997.8 284.4 L997.5 281.1 L997.1 277.9 L996.7 274.6 L996.3 271.3 L995.8 268.1 L995.4 264.8 L994.9 261.6 L994.3 258.3 L993.7 255.1 L993.1 251.8 L992.5 248.6 L991.9 245.3 L991.2 242 L990.5 238.8 L989.8 235.5 L989 232.3 L988.2 229 L987.4 225.8 L986.6 222.5 L985.7 219.2 L984.8 216 L983.9 212.7 L982.9 209.5 L982 206.2 L981 203 L980 199.7 L978.9 196.4 L977.9 193.2 L976.8 189.9 L975.7 186.7 L974.6 183.4 L973.4 180.2 L972.2 176.9 L971 173.6 L969.8 170.4 L968.6 167.1 L967.3 163.9 L966.1 160.6 L964.8 157.4 L963.4 154.1 L962.1 150.9 L960.8 147.6 L959.4 144.3 L958 141.1 L956.6 137.8 L955.2 134.6 L953.7 131.3 L952.3 128.1 L950.8 124.8 L949.3 121.5 L947.8 118.3 L946.3 115 L944.8 111.8 L943.3 108.5 L941.7 105.3 L940.1 102 L938.6 98.7 L937 95.5 L935.4 92.2 L933.8 89 L932.2 85.7 L930.5 82.5 L928.9 79.2 L927.3 75.9 L925.6 72.7 L924 69.4 L922.3 66.2 L920.6 62.9 L919 59.7 L917.3 56.4 L915.6 53.2 L913.9 49.9 L912.2 46.6 L910.5 43.4 L908.8 40.1 L907.1 36.9 L905.4 33.6 L903.7 30.4 L902 27.1"/>
<path d="M902 613.3 L902.9 610 L903.7 606.8 L904.6 603.5 L905.4 600.3 L906.3 597 L907.1 593.8 L907.9 590.5 L908.8 587.2 L909.6 584 L910.5 580.7 L911.3 577.5 L912.1 574.2 L913 571 L913.8 567.7 L914.6 564.5 L915.5 561.2 L916.3 557.9 L917.1 554.7 L917.9 551.4 L918.7 548.2 L919.5 544.9 L920.3 541.7 L921.1 538.4 L921.9 535.1 L922.6 531.9 L923.4 528.6 L924.2 525.4 L924.9 522.1 L925.7 518.9 L926.4 515.6 L927.1 512.3 L927.9 509.1 L928.6 505.8 L929.3 502.6 L930 499.3 L930.7 496.1 L931.4 492.8 L932.1 489.5 L932.7 486.3 L933.4 483 L934 479.8 L934.7 476.5 L935.3 473.3 L935.9 470 L936.5 466.8 L937.1 463.5 L937.7 460.2 L938.3 457 L938.8 453.7 L939.4 450.5 L939.9 447.2 L940.5 444 L941 440.7 L941.5 437.4 L942 434.2 L942.5 430.9 L942.9 427.7 L943.4 424.4 L943.8 421.2 L944.3 417.9 L944.7 414.6 L945.1 411.4 L945.5 408.1 L945.9 404.9 L946.2 401.6 L946.6 398.4 L946.9 395.1 L947.3 391.8 L947.6 388.6 L947.9 385.3 L948.2 382.1 L948.4 378.8 L948.7 375.6 L948.9 372.3 L949.2 369.1 L949.4 365.8 L949.6 362.5 L949.7 359.3 L949.9 356 L950.1 352.8 L950.2 349.5 L950.3 346.3 L950.5 343 L950.5 339.7 L950.6 336.5 L950.7 333.2 L950.7 330 L950.8 326.7 L950.8 323.5 L950.8 320.2 L950.8 316.9 L950.8 313.7 L950.7 310.4 L950.7 307.2 L950.6 303.9 L950.5 300.7 L950.5 297.4 L950.3 294.1 L950.2 290.9 L950.1 287.6 L949.9 284.4 L949.7 281.1 L949.6 277.9 L949.4 274.6 L949.2 271.3 L948.9 268.1 L948.7 264.8 L948.4 261.6 L948.2 258.3 L947.9 255.1 L947.6 251.8 L947.3 248.6 L946.9 245.3 L946.6 242 L946.2 238.8 L945.9 235.5 L945.5 232.3 L945.1 229 L944.7 225.8 L944.3 222.5 L943.8 219.2 L943.4 216 L942.9 212.7 L942.5 209.5 L942 206.2 L941.5 203 L941 199.7 L940.5 196.4 L939.9 193.2 L939.4 189.9 L938.8 186.7 L938.3 183.4 L937.7 180.2 L937.1 176.9 L936.5 173.6 L935.9 170.4 L935.3 167.1 L934.7 163.9 L934 160.6 L933.4 157.4 L932.7 154.1 L932.1 150.9 L931.4 147.6 L930.7 144.3 L930 141.1 L929.3 137.8 L928.6 134.6 L927.9 131.3 L927.1 128.1 L926.4 124.8 L925.7 121.5 L924.9 118.3 L924.2 115 L923.4 111.8 L922.6 108.5 L921.9 105.3 L921.1 102 L920.3 98.7 L919.5 95.5 L918.7 92.2 L917.9 89 L917.1 85.7 L916.3 82.5 L915.5 79.2 L914.6 75.9 L913.8 72.7 L913 69.4 L912.1 66.2 L911.3 62.9 L910.5 59.7 L909.6 56.4 L908.8 53.2 L907.9 49.9 L907.1 46.6 L906.3 43.4 L905.4 40.1 L904.6 36.9 L903.7 33.6 L902.9 30.4 L902 27.1"/>
<path d="M902 613.3 L902 610 L902 606.8 L902 603.5 L902 600.3 L902 597 L902 593.8 L902 590.5 L902 587.2 L902 584 L902 580.7 L902 577.5 L902 574.2 L902 571 L902 567.7 L902 564.5 L902 561.2 L902 557.9 L902 554.7 L902 551.4 L902 548.2 L902 544.9 L902 541.7 L902 538.4 L902 535.1 L902 531.9 L902 528.6 L902 525.4 L902 522.1 L902 518.9 L902 515.6 L902 512.3 L902 509.1 L902 505.8 L902 502.6 L902 499.3 L902 496.1 L902 492.8 L902 489.5 L902 486.3 L902 483 L902 479.8 L902 476.5 L902 473.3 L902 470 L902 466.8 L902 463.5 L902 460.2 L902 457 L902 453.7 L902 450.5 L902 447.2 L902 444 L902 440.7 L902 437.4 L902 434.2 L902 430.9 L902 427.7 L902 424.4 L902 421.2 L902 417.9 L902 414.6 L902 411.4 L902 408.1 L902 404.9 L902 401.6 L902 398.4 L902 395.1 L902 391.8 L902 388.6 L902 385.3 L902 382.1 L902 378.8 L902 375.6 L902 372.3 L902 369.1 L902 365.8 L902 362.5 L902 359.3 L902 356 L902 352.8 L902 349.5 L902 346.3 L902 343 L902 339.7 L902 336.5 L902 333.2 L902 330 L902 326.7 L902 323.5 L902 320.2 L902 316.9 L902 313.7 L902 310.4 L902 307.2 L902 303.9 L902 300.7 L902 297.4 L902 294.1 L902 290.9 L902 287.6 L902 284.4 L902 281.1 L902 277.9 L902 274.6 L902 271.3 L902 268.1 L902 264.8 L902 261.6 L902 258.3 L902 255.1 L902 251.8 L902 248.6 L902 245.3 L902 242 L902 238.8 L902 235.5 L902 232.3 L902 229 L902 225.8 L902 222.5 L902 219.2 L902 216 L902 212.7 L902 209.5 L902 206.2 L902 203 L902 199.7 L902 196.4 L902 193.2 L902 189.9 L902 186.7 L902 183.4 L902 180.2 L902 176.9 L902 173.6 L902 170.4 L902 167.1 L902 163.9 L902 160.6 L902 157.4 L902 154.1 L902 150.9 L902 147.6 L902 144.3 L902 141.1 L902 137.8 L902 134.6 L902 131.3 L902 128.1 L902 124.8 L902 121.5 L902 118.3 L902 115 L902 111.8 L902 108.5 L902 105.3 L902 102 L902 98.7 L902 95.5 L902 92.2 L902 89 L902 85.7 L902 82.5 L902 79.2 L902 75.9 L902 72.7 L902 69.4 L902 66.2 L902 62.9 L902 59.7 L902 56.4 L902 53.2 L902 49.9 L902 46.6 L902 43.4 L902 40.1 L902 36.9 L902 33.6 L902 30.4 L902 27.1"/>
<path d="M902 613.3 L901.1 610 L900.3 606.8 L899.4 603.5 L898.6 600.3 L897.7 597 L896.9 593.8 L896.1 590.5 L895.2 587.2 L894.4 584 L893.5 580.7 L892.7 577.5 L891.9 574.2 L891 571 L890.2 567.7 L889.4 564.5 L888.5 561.2 L887.7 557.9 L886.9 554.7 L886.1 551.4 L885.3 548.2 L884.5 544.9 L883.7 541.7 L882.9 538.4 L882.1 535.1 L881.4 531.9 L880.6 528.6 L879.8 525.4 L879.1 522.1 L878.3 518.9 L877.6 515.6 L876.9 512.3 L876.1 509.1 L875.4 505.8 L874.7 502.6 L874 499.3 L873.3 496.1 L872.6 492.8 L871.9 489.5 L871.3 486.3 L870.6 483 L870 479.8 L869.3 476.5 L868.7 473.3 L868.1 470 L867.5 466.8 L866.9 463.5 L866.3 460.2 L865.7 457 L865.2 453.7 L864.6 450.5 L864.1 447.2 L863.5 444 L863 440.7 L862.5 437.4 L862 434.2 L861.5 430.9 L861.1 427.7 L860.6 424.4 L860.2 421.2 L859.7 417.9 L859.3 414.6 L858.9 411.4 L858.5 408.1 L858.1 404.9 L857.8 401.6 L857.4 398.4 L857.1 395.1 L856.7 391.8 L856.4 388.6 L856.1 385.3 L855.8 382.1 L855.6 378.8 L855.3 375.6 L855.1 372.3 L854.8 369.1 L854.6 365.8 L854.4 362.5 L854.3 359.3 L854.1 356 L853.9 352.8 L853.8 349.5 L853.7 346.3 L853.5 343 L853.5 339.7 L853.4 336.5 L853.3 333.2 L853.3 330 L853.2 326.7 L853.2 323.5 L853.2 320.2 L853.2 316.9 L853.2 313.7 L853.3 310.4 L853.3 307.2 L853.4 303.9 L853.5 300.7 L853.5 297.4 L853.7 294.1 L853.8 290.9 L853.9 287.6 L854.1 284.4 L854.3 281.1 L854.4 277.9 L854.6 274.6 L854.8 271.3 L855.1 268.1 L855.3 264.8 L855.6 261.6 L855.8 258.3 L856.1 255.1 L856.4 251.8 L856.7 248.6 L857.1 245.3 L857.4 242 L857.8 238.8 L858.1 235.5 L858.5 232.3 L858.9 229 L859.3 225.8 L859.7 222.5 L860.2 219.2 L860.6 216 L861.1 212.7 L861.5 209.5 L862 206.2 L862.5 203 L863 199.7 L863.5 196.4 L864.1 193.2 L864.6 189.9 L865.2 186.7 L865.7 183.4 L866.3 180.2 L866.9 176.9 L867.5 173.6 L868.1 170.4 L868.7 167.1 L869.3 163.9 L870 160.6 L870.6 157.4 L871.3 154.1 L871.9 150.9 L872.6 147.6 L873.3 144.3 L874 141.1 L874.7 137.8 L875.4 134.6 L876.1 131.3 L876.9 128.1 L877.6 124.8 L878.3 121.5 L879.1 118.3 L879.8 115 L880.6 111.8 L881.4 108.5 L882.1 105.3 L882.9 102 L883.7 98.7 L884.5 95.5 L885.3 92.2 L886.1 89 L886.9 85.7 L887.7 82.5 L888.5 79.2 L889.4 75.9 L890.2 72.7 L891 69.4 L891.9 66.2 L892.7 62.9 L893.5 59.7 L894.4 56.4 L895.2 53.2 L896.1 49.9 L896.9 46.6 L897.7 43.4 L898.6 40.1 L899.4 36.9 L900.3 33.6 L901.1 30.4 L902 27.1"/>
<path d="M902 613.3 L900.3 610 L898.6 606.8 L896.9 603.5 L895.2 600.3 L893.5 597 L891.8 593.8 L890.1 590.5 L888.4 587.2 L886.7 584 L885 580.7 L883.4 577.5 L881.7 574.2 L880 571 L878.4 567.7 L876.7 564.5 L875.1 561.2 L873.5 557.9 L871.8 554.7 L870.2 551.4 L868.6 548.2 L867 544.9 L865.4 541.7 L863.9 538.4 L862.3 535.1 L860.7 531.9 L859.2 528.6 L857.7 525.4 L856.2 522.1 L854.7 518.9 L853.2 515.6 L851.7 512.3 L850.3 509.1 L848.8 505.8 L847.4 502.6 L846 499.3 L844.6 496.1 L843.2 492.8 L841.9 489.5 L840.6 486.3 L839.2 483 L837.9 479.8 L836.7 476.5 L835.4 473.3 L834.2 470 L833 466.8 L831.8 463.5 L830.6 460.2 L829.4 457 L828.3 453.7 L827.2 450.5 L826.1 447.2 L825.1 444 L824 440.7 L823 437.4 L822 434.2 L821.1 430.9 L820.1 427.7 L819.2 424.4 L818.3 421.2 L817.4 417.9 L816.6 414.6 L815.8 411.4 L815 408.1 L814.2 404.9 L813.5 401.6 L812.8 398.4 L812.1 395.1 L811.5 391.8 L810.9 388.6 L810.3 385.3 L809.7 382.1 L809.1 378.8 L808.6 375.6 L808.2 372.3 L807.7 369.1 L807.3 365.8 L806.9 362.5 L806.5 359.3 L806.2 356 L805.9 352.8 L805.6 349.5 L805.3 346.3 L805.1 343 L804.9 339.7 L804.7 336.5 L804.6 333.2 L804.5 330 L804.4 326.7 L804.4 323.5 L804.4 320.2 L804.4 316.9 L804.4 313.7 L804.5 310.4 L804.6 307.2 L804.7 303.9 L804.9 300.7 L805.1 297.4 L805.3 294.1 L805.6 290.9 L805.9 287.6 L806.2 284.4 L806.5 281.1 L806.9 277.9 L807.3 274.6 L807.7 271.3 L808.2 268.1 L808.6 264.8 L809.1 261.6 L809.7 258.3 L810.3 255.1 L810.9 251.8 L811.5 248.6 L812.1 245.3 L812.8 242 L813.5 238.8 L814.2 235.5 L815 232.3 L815.8 229 L816.6 225.8 L817.4 222.5 L818.3 219.2 L819.2 216 L820.1 212.7 L821.1 209.5 L822 206.2 L823 203 L824 199.7 L825.1 196.4 L826.1 193.2 L827.2 189.9 L828.3 186.7 L829.4 183.4 L830.6 180.2 L831.8 176.9 L833 173.6 L834.2 170.4 L835.4 167.1 L836.7 163.9 L837.9 160.6 L839.2 157.4 L840.6 154.1 L841.9 150.9 L843.2 147.6 L844.6 144.3 L846 141.1 L847.4 137.8 L848.8 134.6 L850.3 131.3 L851.7 128.1 L853.2 124.8 L854.7 121.5 L856.2 118.3 L857.7 115 L859.2 111.8 L860.7 108.5 L862.3 105.3 L863.9 102 L865.4 98.7 L867 95.5 L868.6 92.2 L870.2 89 L871.8 85.7 L873.5 82.5 L875.1 79.2 L876.7 75.9 L878.4 72.7 L880 69.4 L881.7 66.2 L883.4 62.9 L885 59.7 L886.7 56.4 L888.4 53.2 L890.1 49.9 L891.8 46.6 L893.5 43.4 L895.2 40.1 L896.9 36.9 L898.6 33.6 L900.3 30.4 L902 27.1"/>
<path d="M902 613.3 L899.4 610 L896.9 606.8 L894.3 603.5 L891.8 600.3 L889.2 597 L886.7 593.8 L884.2 590.5 L881.6 587.2 L879.1 584 L876.6 580.7 L874.1 577.5 L871.6 574.2 L869.1 571 L866.6 567.7 L864.1 564.5 L861.6 561.2 L859.2 557.9 L856.7 554.7 L854.3 551.4 L851.9 548.2 L849.5 544.9 L847.1 541.7 L844.8 538.4 L842.4 535.1 L840.1 531.9 L837.8 528.6 L835.5 525.4 L833.2 522.1 L831 518.9 L828.8 515.6 L826.6 512.3 L824.4 509.1 L822.2 505.8 L820.1 502.6 L818 499.3 L815.9 496.1 L813.9 492.8 L811.8 489.5 L809.8 486.3 L807.9 483 L805.9 479.8 L804 476.5 L802.1 473.3 L800.3 470 L798.4 466.8 L796.7 463.5 L794.9 460.2 L793.2 457 L791.5 453.7 L789.8 450.5 L788.2 447.2 L786.6 444 L785 440.7 L783.5 437.4 L782 434.2 L780.6 430.9 L779.2 427.7 L777.8 424.4 L776.5 421.2 L775.2 417.9 L773.9 414.6 L772.7 411.4 L771.5 408.1 L770.4 404.9 L769.3 401.6 L768.2 398.4 L767.2 395.1 L766.2 391.8 L765.3 388.6 L764.4 385.3 L763.5 382.1 L762.7 378.8 L762 375.6 L761.2 372.3 L760.5 369.1 L759.9 365.8 L759.3 362.5 L758.8 359.3 L758.2 356 L757.8 352.8 L757.4 349.5 L757 346.3 L756.6 343 L756.4 339.7 L756.1 336.5 L755.9 333.2 L755.8 330 L755.6 326.7 L755.6 323.5 L755.6 320.2 L755.6 316.9 L755.6 313.7 L755.8 310.4 L755.9 307.2 L756.1 303.9 L756.4 300.7 L756.6 297.4 L757 294.1 L757.4 290.9 L757.8 287.6 L758.2 284.4 L758.8 281.1 L759.3 277.9 L759.9 274.6 L760.5 271.3 L761.2 268.1 L762 264.8 L762.7 261.6 L763.5 258.3 L764.4 255.1 L765.3 251.8 L766.2 248.6 L767.2 245.3 L768.2 242 L769.3 238.8 L770.4 235.5 L771.5 232.3 L772.7 229 L773.9 225.8 L775.2 222.5 L776.5 219.2 L777.8 216 L779.2 212.7 L780.6 209.5 L782 206.2 L783.5 203 L785 199.7 L786.6 196.4 L788.2 193.2 L789.8 189.9 L791.5 186.7 L793.2 183.4 L794.9 180.2 L796.7 176.9 L798.4 173.6 L800.3 170.4 L802.1 167.1 L804 163.9 L805.9 160.6 L807.9 157.4 L809.8 154.1 L811.8 150.9 L813.9 147.6 L815.9 144.3 L818 141.1 L820.1 137.8 L822.2 134.6 L824.4 131.3 L826.6 128.1 L828.8 124.8 L831 121.5 L833.2 118.3 L835.5 115 L837.8 111.8 L840.1 108.5 L842.4 105.3 L844.8 102 L847.1 98.7 L849.5 95.5 L851.9 92.2 L854.3 89 L856.7 85.7 L859.2 82.5 L861.6 79.2 L864.1 75.9 L866.6 72.7 L869.1 69.4 L871.6 66.2 L874.1 62.9 L876.6 59.7 L879.1 56.4 L881.6 53.2 L884.2 49.9 L886.7 46.6 L889.2 43.4 L891.8 40.1 L894.3 36.9 L896.9 33.6 L899.4 30.4 L902 27.1"/>
<path d="M902 613.3 L898.6 610 L895.2 606.8 L891.8 603.5 L888.4 600.3 L885 597 L881.6 593.8 L878.2 590.5 L874.8 587.2 L871.5 584 L868.1 580.7 L864.7 577.5 L861.4 574.2 L858.1 571 L854.8 567.7 L851.5 564.5 L848.2 561.2 L844.9 557.9 L841.7 554.7 L838.4 551.4 L835.2 548.2 L832 544.9 L828.9 541.7 L825.7 538.4 L822.6 535.1 L819.5 531.9 L816.4 528.6 L813.4 525.4 L810.3 522.1 L807.3 518.9 L804.4 515.6 L801.4 512.3 L798.5 509.1 L795.7 505.8 L792.8 502.6 L790 499.3 L787.2 496.1 L784.5 492.8 L781.8 489.5 L779.1 486.3 L776.5 483 L773.9 479.8 L771.3 476.5 L768.8 473.3 L766.4 470 L763.9 466.8 L761.5 463.5 L759.2 460.2 L756.9 457 L754.6 453.7 L752.4 450.5 L750.3 447.2 L748.1 444 L746.1 440.7 L744 437.4 L742 434.2 L740.1 430.9 L738.2 427.7 L736.4 424.4 L734.6 421.2 L732.9 417.9 L731.2 414.6 L729.6 411.4 L728 408.1 L726.5 404.9 L725 401.6 L723.6 398.4 L722.3 395.1 L721 391.8 L719.7 388.6 L718.5 385.3 L717.4 382.1 L716.3 378.8 L715.3 375.6 L714.3 372.3 L713.4 369.1 L712.5 365.8 L711.7 362.5 L711 359.3 L710.3 356 L709.7 352.8 L709.1 349.5 L708.6 346.3 L708.2 343 L707.8 339.7 L707.5 336.5 L707.2 333.2 L707 330 L706.9 326.7 L706.8 323.5 L706.7 320.2 L706.8 316.9 L706.9 313.7 L707 310.4 L707.2 307.2 L707.5 303.9 L707.8 300.7 L708.2 297.4 L708.6 294.1 L709.1 290.9 L709.7 287.6 L710.3 284.4 L711 281.1 L711.7 277.9 L712.5 274.6 L713.4 271.3 L714.3 268.1 L715.3 264.8 L716.3 261.6 L717.4 258.3 L718.5 255.1 L719.7 251.8 L721 248.6 L722.3 245.3 L723.6 242 L725 238.8 L726.5 235.5 L728 232.3 L729.6 229 L731.2 225.8 L732.9 222.5 L734.6 219.2 L736.4 216 L738.2 212.7 L740.1 209.5 L742 206.2 L744 203 L746.1 199.7 L748.1 196.4 L750.3 193.2 L752.4 189.9 L754.6 186.7 L756.9 183.4 L759.2 180.2 L761.5 176.9 L763.9 173.6 L766.4 170.4 L768.8 167.1 L771.3 163.9 L773.9 160.6 L776.5 157.4 L779.1 154.1 L781.8 150.9 L784.5 147.6 L787.2 144.3 L790 141.1 L792.8 137.8 L795.7 134.6 L798.5 131.3 L801.4 128.1 L804.4 124.8 L807.3 121.5 L810.3 118.3 L813.4 115 L816.4 111.8 L819.5 108.5 L822.6 105.3 L825.7 102 L828.9 98.7 L832 95.5 L835.2 92.2 L838.4 89 L841.7 85.7 L844.9 82.5 L848.2 79.2 L851.5 75.9 L854.8 72.7 L858.1 69.4 L861.4 66.2 L864.7 62.9 L868.1 59.7 L871.5 56.4 L874.8 53.2 L878.2 49.9 L881.6 46.6 L885 43.4 L888.4 40.1 L891.8 36.9 L895.2 33.6 L898.6 30.4 L902 27.1"/>
<path d="M902 613.3 L897.7 610 L893.5 606.8 L889.2 603.5 L885 600.3 L880.7 597 L876.5 593.8 L872.3 590.5 L868 587.2 L863.8 584 L859.6 580.7 L855.4 577.5 L851.3 574.2 L847.1 571 L843 567.7 L838.8 564.5 L834.7 561.2 L830.6 557.9 L826.6 554.7 L822.5 551.4 L818.5 548.2 L814.5 544.9 L810.6 541.7 L806.6 538.4 L802.7 535.1 L798.8 531.9 L795 528.6 L791.2 525.4 L787.4 522.1 L783.7 518.9 L780 515.6 L776.3 512.3 L772.7 509.1 L769.1 505.8 L765.5 502.6 L762 499.3 L758.5 496.1 L755.1 492.8 L751.7 489.5 L748.4 486.3 L745.1 483 L741.9 479.8 L738.7 476.5 L735.5 473.3 L732.4 470 L729.4 466.8 L726.4 463.5 L723.5 460.2 L720.6 457 L717.8 453.7 L715 450.5 L712.3 447.2 L709.7 444 L707.1 440.7 L704.5 437.4 L702.1 434.2 L699.6 430.9 L697.3 427.7 L695 424.4 L692.8 421.2 L690.6 417.9 L688.5 414.6 L686.5 411.4 L684.5 408.1 L682.6 404.9 L680.8 401.6 L679 398.4 L677.3 395.1 L675.7 391.8 L674.1 388.6 L672.6 385.3 L671.2 382.1 L669.9 378.8 L668.6 375.6 L667.4 372.3 L666.2 369.1 L665.2 365.8 L664.2 362.5 L663.3 359.3 L662.4 356 L661.6 352.8 L660.9 349.5 L660.3 346.3 L659.7 343 L659.3 339.7 L658.8 336.5 L658.5 333.2 L658.3 330 L658.1 326.7 L658 323.5 L657.9 320.2 L658 316.9 L658.1 313.7 L658.3 310.4 L658.5 307.2 L658.8 303.9 L659.3 300.7 L659.7 297.4 L660.3 294.1 L660.9 290.9 L661.6 287.6 L662.4 284.4 L663.3 281.1 L664.2 277.9 L665.2 274.6 L666.2 271.3 L667.4 268.1 L668.6 264.8 L669.9 261.6 L671.2 258.3 L672.6 255.1 L674.1 251.8 L675.7 248.6 L677.3 245.3 L679 242 L680.8 238.8 L682.6 235.5 L684.5 232.3 L686.5 229 L688.5 225.8 L690.6 222.5 L692.8 219.2 L695 216 L697.3 212.7 L699.6 209.5 L702.1 206.2 L704.5 203 L707.1 199.7 L709.7 196.4 L712.3 193.2 L715 189.9 L717.8 186.7 L720.6 183.4 L723.5 180.2 L726.4 176.9 L729.4 173.6 L732.4 170.4 L735.5 167.1 L738.7 163.9 L741.9 160.6 L745.1 157.4 L748.4 154.1 L751.7 150.9 L755.1 147.6 L758.5 144.3 L762 141.1 L765.5 137.8 L769.1 134.6 L772.7 131.3 L776.3 128.1 L780 124.8 L783.7 121.5 L787.4 118.3 L791.2 115 L795 111.8 L798.8 108.5 L802.7 105.3 L806.6 102 L810.6 98.7 L814.5 95.5 L818.5 92.2 L822.5 89 L826.6 85.7 L830.6 82.5 L834.7 79.2 L838.8 75.9 L843 72.7 L847.1 69.4 L851.3 66.2 L855.4 62.9 L859.6 59.7 L863.8 56.4 L868 53.2 L872.3 49.9 L876.5 46.6 L880.7 43.4 L885 40.1 L889.2 36.9 L893.5 33.6 L897.7 30.4 L902 27.1"/>
<path d="M902 613.3 L896.9 610 L891.8 606.8 L886.7 603.5 L881.6 600.3 L876.5 597 L871.4 593.8 L866.3 590.5 L861.2 587.2 L856.2 584 L851.1 580.7 L846.1 577.5 L841.1 574.2 L836.1 571 L831.1 567.7 L826.2 564.5 L821.3 561.2 L816.4 557.9 L811.5 554.7 L806.6 551.4 L801.8 548.2 L797 544.9 L792.3 541.7 L787.6 538.4 L782.9 535.1 L778.2 531.9 L773.6 528.6 L769 525.4 L764.5 522.1 L760 518.9 L755.6 515.6 L751.1 512.3 L746.8 509.1 L742.5 505.8 L738.2 502.6 L734 499.3 L729.8 496.1 L725.7 492.8 L721.7 489.5 L717.7 486.3 L713.7 483 L709.8 479.8 L706 476.5 L702.2 473.3 L698.5 470 L694.9 466.8 L691.3 463.5 L687.8 460.2 L684.3 457 L680.9 453.7 L677.6 450.5 L674.4 447.2 L671.2 444 L668.1 440.7 L665 437.4 L662.1 434.2 L659.2 430.9 L656.4 427.7 L653.6 424.4 L650.9 421.2 L648.3 417.9 L645.8 414.6 L643.4 411.4 L641 408.1 L638.7 404.9 L636.5 401.6 L634.4 398.4 L632.4 395.1 L630.4 391.8 L628.6 388.6 L626.8 385.3 L625.1 382.1 L623.4 378.8 L621.9 375.6 L620.5 372.3 L619.1 369.1 L617.8 365.8 L616.6 362.5 L615.5 359.3 L614.5 356 L613.6 352.8 L612.7 349.5 L612 346.3 L611.3 343 L610.7 339.7 L610.2 336.5 L609.8 333.2 L609.5 330 L609.3 326.7 L609.1 323.5 L609.1 320.2 L609.1 316.9 L609.3 313.7 L609.5 310.4 L609.8 307.2 L610.2 303.9 L610.7 300.7 L611.3 297.4 L612 294.1 L612.7 290.9 L613.6 287.6 L614.5 284.4 L615.5 281.1 L616.6 277.9 L617.8 274.6 L619.1 271.3 L620.5 268.1 L621.9 264.8 L623.4 261.6 L625.1 258.3 L626.8 255.1 L628.6 251.8 L630.4 248.6 L632.4 245.3 L634.4 242 L636.5 238.8 L638.7 235.5 L641 232.3 L643.4 229 L645.8 225.8 L648.3 222.5 L650.9 219.2 L653.6 216 L656.4 212.7 L659.2 209.5 L662.1 206.2 L665 203 L668.1 199.7 L671.2 196.4 L674.4 193.2 L677.6 189.9 L680.9 186.7 L684.3 183.4 L687.8 180.2 L691.3 176.9 L694.9 173.6 L698.5 170.4 L702.2 167.1 L706 163.9 L709.8 160.6 L713.7 157.4 L717.7 154.1 L721.7 150.9 L725.7 147.6 L729.8 144.3 L734 141.1 L738.2 137.8 L742.5 134.6 L746.8 131.3 L751.1 128.1 L755.6 124.8 L760 121.5 L764.5 118.3 L769 115 L773.6 111.8 L778.2 108.5 L782.9 105.3 L787.6 102 L792.3 98.7 L797 95.5 L801.8 92.2 L806.6 89 L811.5 85.7 L816.4 82.5 L821.3 79.2 L826.2 75.9 L831.1 72.7 L836.1 69.4 L841.1 66.2 L846.1 62.9 L851.1 59.7 L856.2 56.4 L861.2 53.2 L866.3 49.9 L871.4 46.6 L876.5 43.4 L881.6 40.1 L886.7 36.9 L891.8 33.6 L896.9 30.4 L902 27.1"/>
<path d="M902 613.3 L896 610 L890.1 606.8 L884.1 603.5 L878.2 600.3 L872.2 597 L866.3 593.8 L860.4 590.5 L854.4 587.2 L848.5 584 L842.7 580.7 L836.8 577.5 L831 574.2 L825.1 571 L819.3 567.7 L813.6 564.5 L807.8 561.2 L802.1 557.9 L796.4 554.7 L790.7 551.4 L785.1 548.2 L779.5 544.9 L774 541.7 L768.5 538.4 L763 535.1 L757.6 531.9 L752.2 528.6 L746.9 525.4 L741.6 522.1 L736.3 518.9 L731.1 515.6 L726 512.3 L720.9 509.1 L715.9 505.8 L710.9 502.6 L706 499.3 L701.1 496.1 L696.4 492.8 L691.6 489.5 L687 486.3 L682.4 483 L677.8 479.8 L673.4 476.5 L669 473.3 L664.6 470 L660.4 466.8 L656.2 463.5 L652.1 460.2 L648.1 457 L644.1 453.7 L640.2 450.5 L636.4 447.2 L632.7 444 L629.1 440.7 L625.5 437.4 L622.1 434.2 L618.7 430.9 L615.4 427.7 L612.2 424.4 L609.1 421.2 L606.1 417.9 L603.1 414.6 L600.3 411.4 L597.5 408.1 L594.9 404.9 L592.3 401.6 L589.8 398.4 L587.5 395.1 L585.2 391.8 L583 388.6 L580.9 385.3 L578.9 382.1 L577 378.8 L575.2 375.6 L573.5 372.3 L571.9 369.1 L570.4 365.8 L569 362.5 L567.8 359.3 L566.6 356 L565.5 352.8 L564.5 349.5 L563.6 346.3 L562.8 343 L562.2 339.7 L561.6 336.5 L561.1 333.2 L560.8 330 L560.5 326.7 L560.3 323.5 L560.3 320.2 L560.3 316.9 L560.5 313.7 L560.8 310.4 L561.1 307.2 L561.6 303.9 L562.2 300.7 L562.8 297.4 L563.6 294.1 L564.5 290.9 L565.5 287.6 L566.6 284.4 L567.8 281.1 L569 277.9 L570.4 274.6 L571.9 271.3 L573.5 268.1 L575.2 264.8 L577 261.6 L578.9 258.3 L580.9 255.1 L583 251.8 L585.2 248.6 L587.5 245.3 L589.8 242 L592.3 238.8 L594.9 235.5 L597.5 232.3 L600.3 229 L603.1 225.8 L606.1 222.5 L609.1 219.2 L612.2 216 L615.4 212.7 L618.7 209.5 L622.1 206.2 L625.5 203 L629.1 199.7 L632.7 196.4 L636.4 193.2 L640.2 189.9 L644.1 186.7 L648.1 183.4 L652.1 180.2 L656.2 176.9 L660.4 173.6 L664.6 170.4 L669 167.1 L673.4 163.9 L677.8 160.6 L682.4 157.4 L687 154.1 L691.6 150.9 L696.4 147.6 L701.1 144.3 L706 141.1 L710.9 137.8 L715.9 134.6 L720.9 131.3 L726 128.1 L731.1 124.8 L736.3 121.5 L741.6 118.3 L746.9 115 L752.2 111.8 L757.6 108.5 L763 105.3 L768.5 102 L774 98.7 L779.5 95.5 L785.1 92.2 L790.7 89 L796.4 85.7 L802.1 82.5 L807.8 79.2 L813.6 75.9 L819.3 72.7 L825.1 69.4 L831 66.2 L836.8 62.9 L842.7 59.7 L848.5 56.4 L854.4 53.2 L860.4 49.9 L866.3 46.6 L872.2 43.4 L878.2 40.1 L884.1 36.9 L890.1 33.6 L896 30.4 L902 27.1"/>
<path d="M902 613.3 L895.2 610 L888.4 606.8 L881.6 603.5 L874.8 600.3 L868 597 L861.2 593.8 L854.4 590.5 L847.6 587.2 L840.9 584 L834.2 580.7 L827.5 577.5 L820.8 574.2 L814.2 571 L807.5 567.7 L800.9 564.5 L794.4 561.2 L787.8 557.9 L781.3 554.7 L774.9 551.4 L768.4 548.2 L762 544.9 L755.7 541.7 L749.4 538.4 L743.2 535.1 L737 531.9 L730.8 528.6 L724.7 525.4 L718.7 522.1 L712.7 518.9 L706.7 515.6 L700.9 512.3 L695.1 509.1 L689.3 505.8 L683.6 502.6 L678 499.3 L672.5 496.1 L667 492.8 L661.6 489.5 L656.2 486.3 L651 483 L645.8 479.8 L640.7 476.5 L635.7 473.3 L630.7 470 L625.9 466.8 L621.1 463.5 L616.4 460.2 L611.8 457 L607.3 453.7 L602.8 450.5 L598.5 447.2 L594.3 444 L590.1 440.7 L586.1 437.4 L582.1 434.2 L578.2 430.9 L574.5 427.7 L570.8 424.4 L567.3 421.2 L563.8 417.9 L560.4 414.6 L557.2 411.4 L554 408.1 L551 404.9 L548.1 401.6 L545.2 398.4 L542.5 395.1 L539.9 391.8 L537.4 388.6 L535 385.3 L532.7 382.1 L530.6 378.8 L528.5 375.6 L526.6 372.3 L524.8 369.1 L523.1 365.8 L521.5 362.5 L520 359.3 L518.6 356 L517.4 352.8 L516.3 349.5 L515.3 346.3 L514.4 343 L513.6 339.7 L513 336.5 L512.4 333.2 L512 330 L511.7 326.7 L511.5 323.5 L511.5 320.2 L511.5 316.9 L511.7 313.7 L512 310.4 L512.4 307.2 L513 303.9 L513.6 300.7 L514.4 297.4 L515.3 294.1 L516.3 290.9 L517.4 287.6 L518.6 284.4 L520 281.1 L521.5 277.9 L523.1 274.6 L524.8 271.3 L526.6 268.1 L528.5 264.8 L530.6 261.6 L532.7 258.3 L535 255.1 L537.4 251.8 L539.9 248.6 L542.5 245.3 L545.2 242 L548.1 238.8 L551 235.5 L554 232.3 L557.2 229 L560.4 225.8 L563.8 222.5 L567.3 219.2 L570.8 216 L574.5 212.7 L578.2 209.5 L582.1 206.2 L586.1 203 L590.1 199.7 L594.3 196.4 L598.5 193.2 L602.8 189.9 L607.3 186.7 L611.8 183.4 L616.4 180.2 L621.1 176.9 L625.9 173.6 L630.7 170.4 L635.7 167.1 L640.7 163.9 L645.8 160.6 L651 157.4 L656.2 154.1 L661.6 150.9 L667 147.6 L672.5 144.3 L678 141.1 L683.6 137.8 L689.3 134.6 L695.1 131.3 L700.9 128.1 L706.7 124.8 L712.7 121.5 L718.7 118.3 L724.7 115 L730.8 111.8 L737 108.5 L743.2 105.3 L749.4 102 L755.7 98.7 L762 95.5 L768.4 92.2 L774.9 89 L781.3 85.7 L787.8 82.5 L794.4 79.2 L800.9 75.9 L807.5 72.7 L814.2 69.4 L820.8 66.2 L827.5 62.9 L834.2 59.7 L840.9 56.4 L847.6 53.2 L854.4 49.9 L861.2 46.6 L868 43.4 L874.8 40.1 L881.6 36.9 L888.4 33.6 L895.2 30.4 L902 27.1"/>
<path d="M902 613.3 L894.3 610 L886.7 606.8 L879 603.5 L871.4 600.3 L863.7 597 L856.1 593.8 L848.5 590.5 L840.9 587.2 L833.3 584 L825.7 580.7 L818.2 577.5 L810.7 574.2 L803.2 571 L795.7 567.7 L788.3 564.5 L780.9 561.2 L773.5 557.9 L766.2 554.7 L759 551.4 L751.7 548.2 L744.6 544.9 L737.4 541.7 L730.3 538.4 L723.3 535.1 L716.3 531.9 L709.4 528.6 L702.5 525.4 L695.7 522.1 L689 518.9 L682.3 515.6 L675.7 512.3 L669.2 509.1 L662.7 505.8 L656.3 502.6 L650 499.3 L643.8 496.1 L637.6 492.8 L631.5 489.5 L625.5 486.3 L619.6 483 L613.8 479.8 L608 476.5 L602.4 473.3 L596.8 470 L591.3 466.8 L586 463.5 L580.7 460.2 L575.5 457 L570.4 453.7 L565.4 450.5 L560.6 447.2 L555.8 444 L551.1 440.7 L546.6 437.4 L542.1 434.2 L537.8 430.9 L533.5 427.7 L529.4 424.4 L525.4 421.2 L521.5 417.9 L517.7 414.6 L514.1 411.4 L510.5 408.1 L507.1 404.9 L503.8 401.6 L500.6 398.4 L497.6 395.1 L494.6 391.8 L491.8 388.6 L489.2 385.3 L486.6 382.1 L484.2 378.8 L481.9 375.6 L479.7 372.3 L477.6 369.1 L475.7 365.8 L473.9 362.5 L472.3 359.3 L470.7 356 L469.3 352.8 L468.1 349.5 L466.9 346.3 L465.9 343 L465.1 339.7 L464.3 336.5 L463.7 333.2 L463.3 330 L462.9 326.7 L462.7 323.5 L462.7 320.2 L462.7 316.9 L462.9 313.7 L463.3 310.4 L463.7 307.2 L464.3 303.9 L465.1 300.7 L465.9 297.4 L466.9 294.1 L468.1 290.9 L469.3 287.6 L470.7 284.4 L472.3 281.1 L473.9 277.9 L475.7 274.6 L477.6 271.3 L479.7 268.1 L481.9 264.8 L484.2 261.6 L486.6 258.3 L489.2 255.1 L491.8 251.8 L494.6 248.6 L497.6 245.3 L500.6 242 L503.8 238.8 L507.1 235.5 L510.5 232.3 L514.1 229 L517.7 225.8 L521.5 222.5 L525.4 219.2 L529.4 216 L533.5 212.7 L537.8 209.5 L542.1 206.2 L546.6 203 L551.1 199.7 L555.8 196.4 L560.6 193.2 L565.4 189.9 L570.4 186.7 L575.5 183.4 L580.7 180.2 L586 176.9 L591.3 173.6 L596.8 170.4 L602.4 167.1 L608 163.9 L613.8 160.6 L619.6 157.4 L625.5 154.1 L631.5 150.9 L637.6 147.6 L643.8 144.3 L650 141.1 L656.3 137.8 L662.7 134.6 L669.2 131.3 L675.7 128.1 L682.3 124.8 L689 121.5 L695.7 118.3 L702.5 115 L709.4 111.8 L716.3 108.5 L723.3 105.3 L730.3 102 L737.4 98.7 L744.6 95.5 L751.7 92.2 L759 89 L766.2 85.7 L773.5 82.5 L780.9 79.2 L788.3 75.9 L795.7 72.7 L803.2 69.4 L810.7 66.2 L818.2 62.9 L825.7 59.7 L833.3 56.4 L840.9 53.2 L848.5 49.9 L856.1 46.6 L863.7 43.4 L871.4 40.1 L879 36.9 L886.7 33.6 L894.3 30.4 L902 27.1"/>
<path d="M902 613.3 L893.5 610 L885 606.8 L876.5 603.5 L867.9 600.3 L859.5 597 L851 593.8 L842.5 590.5 L834.1 587.2 L825.6 584 L817.2 580.7 L808.9 577.5 L800.5 574.2 L792.2 571 L783.9 567.7 L775.7 564.5 L767.4 561.2 L759.3 557.9 L751.2 554.7 L743.1 551.4 L735 548.2 L727.1 544.9 L719.1 541.7 L711.3 538.4 L703.4 535.1 L695.7 531.9 L688 528.6 L680.4 525.4 L672.8 522.1 L665.3 518.9 L657.9 515.6 L650.6 512.3 L643.3 509.1 L636.1 505.8 L629 502.6 L622 499.3 L615.1 496.1 L608.2 492.8 L601.5 489.5 L594.8 486.3 L588.2 483 L581.7 479.8 L575.4 476.5 L569.1 473.3 L562.9 470 L556.8 466.8 L550.8 463.5 L545 460.2 L539.2 457 L533.6 453.7 L528 450.5 L522.6 447.2 L517.3 444 L512.1 440.7 L507.1 437.4 L502.1 434.2 L497.3 430.9 L492.6 427.7 L488 424.4 L483.6 421.2 L479.2 417.9 L475 414.6 L471 411.4 L467 408.1 L463.2 404.9 L459.6 401.6 L456 398.4 L452.6 395.1 L449.4 391.8 L446.3 388.6 L443.3 385.3 L440.4 382.1 L437.7 378.8 L435.2 375.6 L432.8 372.3 L430.5 369.1 L428.3 365.8 L426.4 362.5 L424.5 359.3 L422.8 356 L421.3 352.8 L419.9 349.5 L418.6 346.3 L417.5 343 L416.5 339.7 L415.7 336.5 L415 333.2 L414.5 330 L414.1 326.7 L413.9 323.5 L413.8 320.2 L413.9 316.9 L414.1 313.7 L414.5 310.4 L415 307.2 L415.7 303.9 L416.5 300.7 L417.5 297.4 L418.6 294.1 L419.9 290.9 L421.3 287.6 L422.8 284.4 L424.5 281.1 L426.4 277.9 L428.3 274.6 L430.5 271.3 L432.8 268.1 L435.2 264.8 L437.7 261.6 L440.4 258.3 L443.3 255.1 L446.3 251.8 L449.4 248.6 L452.6 245.3 L456 242 L459.6 238.8 L463.2 235.5 L467 232.3 L471 229 L475 225.8 L479.2 222.5 L483.6 219.2 L488 216 L492.6 212.7 L497.3 209.5 L502.1 206.2 L507.1 203 L512.1 199.7 L517.3 196.4 L522.6 193.2 L528 189.9 L533.6 186.7 L539.2 183.4 L545 180.2 L550.8 176.9 L556.8 173.6 L562.9 170.4 L569.1 167.1 L575.4 163.9 L581.7 160.6 L588.2 157.4 L594.8 154.1 L601.5 150.9 L608.2 147.6 L615.1 144.3 L622 141.1 L629 137.8 L636.1 134.6 L643.3 131.3 L650.6 128.1 L657.9 124.8 L665.3 121.5 L672.8 118.3 L680.4 115 L688 111.8 L695.7 108.5 L703.4 105.3 L711.3 102 L719.1 98.7 L727.1 95.5 L735 92.2 L743.1 89 L751.2 85.7 L759.3 82.5 L767.4 79.2 L775.7 75.9 L783.9 72.7 L792.2 69.4 L800.5 66.2 L808.9 62.9 L817.2 59.7 L825.6 56.4 L834.1 53.2 L842.5 49.9 L851 46.6 L859.5 43.4 L867.9 40.1 L876.5 36.9 L885 33.6 L893.5 30.4 L902 27.1"/>
<path d="M902 613.3 L892.6 610 L883.3 606.8 L873.9 603.5 L864.5 600.3 L855.2 597 L845.9 593.8 L836.6 590.5 L827.3 587.2 L818 584 L808.8 580.7 L799.5 577.5 L790.4 574.2 L781.2 571 L772.1 567.7 L763 564.5 L754 561.2 L745 557.9 L736.1 554.7 L727.2 551.4 L718.3 548.2 L709.6 544.9 L700.8 541.7 L692.2 538.4 L683.6 535.1 L675.1 531.9 L666.6 528.6 L658.2 525.4 L649.9 522.1 L641.7 518.9 L633.5 515.6 L625.4 512.3 L617.4 509.1 L609.5 505.8 L601.7 502.6 L594 499.3 L586.4 496.1 L578.8 492.8 L571.4 489.5 L564.1 486.3 L556.8 483 L549.7 479.8 L542.7 476.5 L535.8 473.3 L529 470 L522.3 466.8 L515.7 463.5 L509.3 460.2 L502.9 457 L496.7 453.7 L490.7 450.5 L484.7 447.2 L478.9 444 L473.2 440.7 L467.6 437.4 L462.1 434.2 L456.8 430.9 L451.7 427.7 L446.6 424.4 L441.7 421.2 L437 417.9 L432.4 414.6 L427.9 411.4 L423.6 408.1 L419.4 404.9 L415.3 401.6 L411.4 398.4 L407.7 395.1 L404.1 391.8 L400.7 388.6 L397.4 385.3 L394.3 382.1 L391.3 378.8 L388.5 375.6 L385.8 372.3 L383.3 369.1 L381 365.8 L378.8 362.5 L376.8 359.3 L374.9 356 L373.2 352.8 L371.6 349.5 L370.2 346.3 L369 343 L368 339.7 L367.1 336.5 L366.3 333.2 L365.8 330 L365.4 326.7 L365.1 323.5 L365 320.2 L365.1 316.9 L365.4 313.7 L365.8 310.4 L366.3 307.2 L367.1 303.9 L368 300.7 L369 297.4 L370.2 294.1 L371.6 290.9 L373.2 287.6 L374.9 284.4 L376.8 281.1 L378.8 277.9 L381 274.6 L383.3 271.3 L385.8 268.1 L388.5 264.8 L391.3 261.6 L394.3 258.3 L397.4 255.1 L400.7 251.8 L404.1 248.6 L407.7 245.3 L411.4 242 L415.3 238.8 L419.4 235.5 L423.6 232.3 L427.9 229 L432.4 225.8 L437 222.5 L441.7 219.2 L446.6 216 L451.7 212.7 L456.8 209.5 L462.1 206.2 L467.6 203 L473.2 199.7 L478.9 196.4 L484.7 193.2 L490.7 189.9 L496.7 186.7 L502.9 183.4 L509.3 180.2 L515.7 176.9 L522.3 173.6 L529 170.4 L535.8 167.1 L542.7 163.9 L549.7 160.6 L556.8 157.4 L564.1 154.1 L571.4 150.9 L578.8 147.6 L586.4 144.3 L594 141.1 L601.7 137.8 L609.5 134.6 L617.4 131.3 L625.4 128.1 L633.5 124.8 L641.7 121.5 L649.9 118.3 L658.2 115 L666.6 111.8 L675.1 108.5 L683.6 105.3 L692.2 102 L700.8 98.7 L709.6 95.5 L718.3 92.2 L727.2 89 L736.1 85.7 L745 82.5 L754 79.2 L763 75.9 L772.1 72.7 L781.2 69.4 L790.4 66.2 L799.5 62.9 L808.8 59.7 L818 56.4 L827.3 53.2 L836.6 49.9 L845.9 46.6 L855.2 43.4 L864.5 40.1 L873.9 36.9 L883.3 33.6 L892.6 30.4 L902 27.1"/>
<path d="M902 613.3 L891.8 610 L881.6 606.8 L871.3 603.5 L861.1 600.3 L850.9 597 L840.8 593.8 L830.6 590.5 L820.5 587.2 L810.4 584 L800.3 580.7 L790.2 577.5 L780.2 574.2 L770.2 571 L760.3 567.7 L750.4 564.5 L740.5 561.2 L730.7 557.9 L721 554.7 L711.3 551.4 L701.6 548.2 L692.1 544.9 L682.6 541.7 L673.1 538.4 L663.7 535.1 L654.4 531.9 L645.2 528.6 L636.1 525.4 L627 522.1 L618 518.9 L609.1 515.6 L600.3 512.3 L591.6 509.1 L583 505.8 L574.4 502.6 L566 499.3 L557.7 496.1 L549.5 492.8 L541.4 489.5 L533.3 486.3 L525.5 483 L517.7 479.8 L510 476.5 L502.5 473.3 L495.1 470 L487.8 466.8 L480.6 463.5 L473.6 460.2 L466.7 457 L459.9 453.7 L453.3 450.5 L446.8 447.2 L440.4 444 L434.2 440.7 L428.1 437.4 L422.1 434.2 L416.4 430.9 L410.7 427.7 L405.2 424.4 L399.9 421.2 L394.7 417.9 L389.7 414.6 L384.8 411.4 L380.1 408.1 L375.5 404.9 L371.1 401.6 L366.9 398.4 L362.8 395.1 L358.9 391.8 L355.1 388.6 L351.5 385.3 L348.1 382.1 L344.9 378.8 L341.8 375.6 L338.9 372.3 L336.2 369.1 L333.6 365.8 L331.2 362.5 L329 359.3 L327 356 L325.1 352.8 L323.4 349.5 L321.9 346.3 L320.6 343 L319.4 339.7 L318.4 336.5 L317.6 333.2 L317 330 L316.6 326.7 L316.3 323.5 L316.2 320.2 L316.3 316.9 L316.6 313.7 L317 310.4 L317.6 307.2 L318.4 303.9 L319.4 300.7 L320.6 297.4 L321.9 294.1 L323.4 290.9 L325.1 287.6 L327 284.4 L329 281.1 L331.2 277.9 L333.6 274.6 L336.2 271.3 L338.9 268.1 L341.8 264.8 L344.9 261.6 L348.1 258.3 L351.5 255.1 L355.1 251.8 L358.9 248.6 L362.8 245.3 L366.9 242 L371.1 238.8 L375.5 235.5 L380.1 232.3 L384.8 229 L389.7 225.8 L394.7 222.5 L399.9 219.2 L405.2 216 L410.7 212.7 L416.4 209.5 L422.1 206.2 L428.1 203 L434.2 199.7 L440.4 196.4 L446.8 193.2 L453.3 189.9 L459.9 186.7 L466.7 183.4 L473.6 180.2 L480.6 176.9 L487.8 173.6 L495.1 170.4 L502.5 167.1 L510 163.9 L517.7 160.6 L525.5 157.4 L533.3 154.1 L541.4 150.9 L549.5 147.6 L557.7 144.3 L566 141.1 L574.4 137.8 L583 134.6 L591.6 131.3 L600.3 128.1 L609.1 124.8 L618 121.5 L627 118.3 L636.1 115 L645.2 111.8 L654.4 108.5 L663.7 105.3 L673.1 102 L682.6 98.7 L692.1 95.5 L701.6 92.2 L711.3 89 L721 85.7 L730.7 82.5 L740.5 79.2 L750.4 75.9 L760.3 72.7 L770.2 69.4 L780.2 66.2 L790.2 62.9 L800.3 59.7 L810.4 56.4 L820.5 53.2 L830.6 49.9 L840.8 46.6 L850.9 43.4 L861.1 40.1 L871.3 36.9 L881.6 33.6 L891.8 30.4 L902 27.1"/>
</g>
<g fill="#8e8e8e" font-size="9.72" font-family="DejaVu Sans, Liberation Sans, sans-serif">
<text x="1487" y="330" text-anchor="middle">+180<tspan dy="-3.2" dx="0.8" font-size="6.8">°</tspan></text>
<text x="1389.4" y="330" text-anchor="middle">+210<tspan dy="-3.2" dx="0.8" font-size="6.8">°</tspan></text>
<text x="1291.7" y="330" text-anchor="middle">+240<tspan dy="-3.2" dx="0.8" font-size="6.8">°</tspan></text>
<text x="1194.1" y="330" text-anchor="middle">+270<tspan dy="-3.2" dx="0.8" font-size="6.8">°</tspan></text>
<text x="1096.5" y="330" text-anchor="middle">+300<tspan dy="-3.2" dx="0.8" font-size="6.8">°</tspan></text>
<text x="998.8" y="330" text-anchor="middle">+330<tspan dy="-3.2" dx="0.8" font-size="6.8">°</tspan></text>
<text x="901.2" y="330" text-anchor="middle">+0<tspan dy="-3.2" dx="0.8" font-size="6.8">°</tspan></text>
<text x="803.6" y="330" text-anchor="middle">+30<tspan dy="-3.2" dx="0.8" font-size="6.8">°</tspan></text>
<text x="705.9" y="330" text-anchor="middle">+60<tspan dy="-3.2" dx="0.8" font-size="6.8">°</tspan></text>
<text x="608.3" y="330" text-anchor="middle">+90<tspan dy="-3.2" dx="0.8" font-size="6.8">°</tspan></text>
<text x="510.7" y="330" text-anchor="middle">+120<tspan dy="-3.2" dx="0.8" font-size="6.8">°</tspan></text>
<text x="413" y="330" text-anchor="middle">+150<tspan dy="-3.2" dx="0.8" font-size="6.8">°</tspan></text>
<text x="315.4" y="330" text-anchor="middle">+180<tspan dy="-3.2" dx="0.8" font-size="6.8">°</tspan></text>
<text x="902.6" y="25.1" text-anchor="middle">+90<tspan dy="-3.2" dx="0.8" font-size="6.8">°</tspan></text>
<text x="902.6" y="122.8" text-anchor="middle">+60<tspan dy="-3.2" dx="0.8" font-size="6.8">°</tspan></text>
<text x="902.6" y="220.5" text-anchor="middle">+30<tspan dy="-3.2" dx="0.8" font-size="6.8">°</tspan></text>
<text x="902.6" y="428.1" text-anchor="middle">−30<tspan dy="-3.2" dx="0.8" font-size="6.8">°</tspan></text>
<text x="902.6" y="525.8" text-anchor="middle">−60<tspan dy="-3.2" dx="0.8" font-size="6.8">°</tspan></text>
<text x="902.6" y="623.5" text-anchor="middle">−90<tspan dy="-3.2" dx="0.8" font-size="6.8">°</tspan></text>
</g>
<g fill="#fff" font-size="13.89" font-family="DejaVu Sans Mono, Liberation Mono, monospace">
<text x="315" y="29.8">US0020</text>
<text x="315" y="43.4">Beg: 20251026 02:09:09 (sol = 212.56°)</text>
<text x="315" y="57">End: 20251026 12:46:05 (sol = 213.00°)</text>
<text x="315" y="69.1">--------------------------------------</text>
<text x="315" y="82.2">...: 28</text>
<text x="315" y="95.3">ORI: 10</text>
<text x="315" y="108.4">STA: 5</text>
<text x="315" y="121.5">EGE: 2</text>
<text x="315" y="134.6">LMI: 2</text>
</g>
<path d="M686.7 103.3 L694.4 102.2 L701.3 101.4 L707.4 100.9 L712.8 100.7 L717.5 100.8 L721.4 101.2 L724.6 101.9 L727.2 102.8 L729.2 104.1 L730.6 105.7 L731.5 107.4 L732 109.5 L732.1 111.7 L731.8 114.2 L731.2 116.8 L730.4 119.6 L729.3 122.6 L728.1 125.7 L726.6 128.9 L725.1 132.2 L723.5 135.7 L721.8 139.2 L720 142.8 L718.2 146.5 L716.4 150.3 L714.6 154.1 L712.8 158 L711 162 L709.2 166 L707.5 170 L705.8 174.1 L704.2 178.2 L702.6 182.4 L701.2 186.6 L699.7 190.8 L698.4 195 L697.2 199.3 L696 203.6 L694.9 207.9 L694 212.2 L693.1 216.6 L692.3 220.9 L691.7 225.3 L691.1 229.7 L690.7 234.1 L690.3 238.5 L690.1 242.9 L690 247.4 L690 251.8 L690.1 256.3 L690.4 260.7 L690.7 265.2 L691.2 269.7 L691.8 274.1 L692.5 278.6 L693.4 283.1 L694.3 287.6 L695.4 292.1 L696.6 296.6 L697.9 301.1 L699.4 305.6 L700.9 310.1 L702.6 314.6 L704.4 319.1 L706.3 323.6 L708.3 328.1 L710.4 332.6 L712.7 337.2 L715 341.7 L717.5 346.2 L720 350.7 L722.7 355.1 L725.5 359.6 L728.4 364.1 L731.4 368.6 L734.4 373.1 L737.6 377.6 L740.9 382 L744.2 386.5 L747.6 390.9 L751.2 395.4 L754.8 399.8 L758.5 404.2 L762.2 408.6 M714.4 106.1 L709.9 109.6 L705.3 113.3 L700.5 117.1 L695.6 120.9 L690.6 124.9 L685.6 128.9 L680.6 132.9 L675.5 137.1 L670.5 141.3 L665.5 145.5 L660.6 149.8 L655.7 154.1 L650.9 158.4 L646.2 162.8 L641.6 167.2 L637.1 171.6 L632.8 176 L628.5 180.5 L624.4 185 L620.4 189.5 L616.6 194 L612.9 198.5 L609.4 203 L606 207.6 L602.8 212.1 L599.8 216.7 L596.9 221.3 L594.3 225.9 L591.8 230.5 L589.4 235.1 L587.3 239.7 L585.4 244.3 L583.6 248.9 L582 253.5 L580.7 258.2 L579.5 262.8 L578.5 267.4 L577.7 272.1 L577.1 276.7 L576.8 281.4 L576.6 286 L576.6 290.6 L576.8 295.3 L577.2 299.9 L577.9 304.6 L578.7 309.3 L579.7 313.9 L580.9 318.6 L582.4 323.2 L584 327.9 L585.8 332.5 L587.8 337.2 L590 341.8 L592.5 346.5 L595.1 351.1 L597.8 355.8 L600.8 360.4 L604 365.1 L607.3 369.7 L610.9 374.4 L614.6 379 L618.5 383.6 L622.5 388.2 L626.7 392.9 L631.1 397.5 L635.7 402.1 L640.4 406.7 L645.3 411.3 L650.3 415.9 L655.4 420.5 L660.7 425.1 L666.2 429.6 L671.7 434.2 L677.4 438.7 L683.3 443.3 L689.2 447.8 L695.3 452.3 L701.4 456.8 L707.7 461.2 L714 465.7 L720.5 470.1 L727 474.6 L733.6 478.9 L740.2 483.3 L746.9 487.6 L753.7 491.9 M741.1 88.9 L741.3 90.7 L740.7 92.7 L739.5 95.1 L737.8 97.7 L735.7 100.5 L733.1 103.5 L730.3 106.7 L727.1 110 L723.8 113.5 L720.3 117.1 L716.7 120.8 L713 124.6 L709.2 128.4 L705.3 132.4 L701.5 136.4 L697.6 140.5 L693.8 144.6 L690 148.8 L686.2 153 L682.5 157.3 L678.9 161.5 L675.3 165.9 L671.8 170.2 L668.4 174.6 L665.2 179 L662 183.4 L658.9 187.8 L656 192.3 L653.1 196.8 L650.4 201.3 L647.9 205.8 L645.4 210.3 L643.2 214.8 L641 219.3 L639 223.9 L637.2 228.4 L635.5 233 L633.9 237.6 L632.5 242.2 L631.3 246.7 L630.2 251.3 L629.3 255.9 L628.6 260.5 L628 265.1 L627.6 269.7 L627.3 274.4 L627.3 279 L627.4 283.6 L627.6 288.2 L628 292.8 L628.6 297.5 L629.4 302.1 L630.3 306.7 L631.4 311.4 L632.6 316 L634.1 320.6 L635.7 325.2 L637.4 329.9 L639.3 334.5 L641.4 339.1 L643.6 343.8 L646 348.4 L648.6 353 L651.3 357.6 L654.2 362.2 L657.2 366.9 L660.3 371.5 L663.6 376.1 L667.1 380.7 L670.7 385.3 L674.4 389.9 L678.3 394.5 L682.3 399 L686.4 403.6 L690.6 408.2 L695 412.8 L699.5 417.3 L704.1 421.9 L708.8 426.4 L713.6 430.9 L718.6 435.4 L723.6 439.9 L728.7 444.4 L733.9 448.9 L739.2 453.3 M775.6 73.3 L783.3 72.2 L789.8 71.5 L794.9 71.4 L798.8 71.8 L801.6 72.8 L803.3 74.2 L804.1 76 L804.2 78.2 L803.6 80.8 L802.6 83.7 L801.1 86.8 L799.3 90.2 L797.3 93.7 L795 97.4 L792.6 101.2 L790.1 105.1 L787.6 109.1 L784.9 113.2 L782.3 117.4 L779.6 121.6 L776.9 125.9 L774.2 130.3 L771.6 134.7 L769 139.1 L766.4 143.5 L763.9 148 L761.4 152.5 L759 157 L756.7 161.6 L754.4 166.2 L752.2 170.7 L750.1 175.3 L748.1 180 L746.1 184.6 L744.3 189.2 L742.5 193.9 L740.8 198.5 L739.2 203.2 L737.8 207.9 L736.4 212.5 L735.1 217.2 L733.9 221.9 L732.8 226.6 L731.8 231.3 L731 236 L730.2 240.7 L729.6 245.4 L729 250.2 L728.6 254.9 L728.2 259.6 L728 264.3 L727.9 269.1 L727.9 273.8 L728 278.5 L728.3 283.3 L728.6 288 L729.1 292.7 L729.6 297.5 L730.3 302.2 L731.1 307 L732 311.7 L733 316.4 L734.1 321.2 L735.3 325.9 L736.7 330.7 L738.1 335.4 L739.6 340.2 L741.3 344.9 L743 349.6 L744.9 354.4 L746.9 359.1 L748.9 363.8 L751.1 368.6 L753.3 373.3 L755.7 378 L758.1 382.8 L760.6 387.5 L763.2 392.2 L766 396.9 L768.7 401.6 L771.6 406.3 L774.6 411 L777.6 415.7 L780.7 420.4 L783.9 425.1 L787.2 429.8 M713.9 157.8 L709.3 162.5 L704.9 167.2 L700.6 172 L696.4 176.7 L692.3 181.5 L688.4 186.2 L684.6 191 L680.9 195.7 L677.4 200.5 L674 205.2 L670.8 210 L667.7 214.8 L664.7 219.5 L662 224.3 L659.3 229.1 L656.9 233.8 L654.6 238.6 L652.4 243.4 L650.4 248.2 L648.6 252.9 L647 257.7 L645.5 262.5 L644.1 267.3 L643 272 L642 276.8 L641.2 281.6 L640.6 286.4 L640.1 291.2 L639.8 296 L639.7 300.7 L639.7 305.5 L639.9 310.3 L640.3 315.1 L640.9 319.9 L641.6 324.7 L642.5 329.4 L643.6 334.2 L644.9 339 L646.3 343.8 L647.9 348.6 L649.6 353.3 L651.5 358.1 L653.6 362.9 L655.8 367.7 L658.3 372.5 L660.8 377.3 L663.5 382 L666.4 386.8 L669.4 391.6 L672.6 396.4 L676 401.1 L679.4 405.9 L683.1 410.7 L686.8 415.4 L690.7 420.2 L694.8 425 L699 429.7 L703.3 434.5 L707.7 439.3 L712.3 444 L717 448.8 L721.7 453.5 L726.7 458.3 L731.7 463 L736.8 467.8 L742 472.5 L747.4 477.2 L752.8 481.9 L758.3 486.7 L763.9 491.4 L769.6 496.1 L775.3 500.8 L781.1 505.4 L787 510.1 L793 514.8 L799 519.4 L805 524 L811.1 528.6 L817.2 533.2 L823.3 537.7 L829.4 542.2 L835.6 546.7 L841.7 551.1 L847.8 555.5 L853.9 559.7 L859.9 563.9 L865.8 568 M716.7 121.7 L723.8 120.3 L730.5 119.1 L736.8 118.2 L742.8 117.4 L748.4 117 L753.6 116.7 L758.5 116.7 L763 116.9 L767.1 117.4 L771 118.1 L774.5 119 L777.8 120.1 L780.8 121.5 L783.5 123 L786.1 124.8 L788.5 126.7 L790.7 128.9 L792.7 131.1 L794.7 133.6 L796.5 136.1 L798.2 138.9 L799.9 141.7 L801.5 144.6 L803 147.7 L804.5 150.8 L806 154.1 L807.4 157.4 L808.9 160.8 L810.3 164.2 L811.7 167.8 L813.1 171.4 L814.6 175 L816 178.7 L817.4 182.5 L818.9 186.3 L820.4 190.1 L821.9 194 L823.4 197.9 L825 201.8 L826.6 205.8 L828.2 209.8 L829.8 213.8 L831.4 217.9 L833.1 221.9 L834.9 226 L836.6 230.1 L838.4 234.3 L840.2 238.4 L842 242.6 L843.9 246.7 L845.7 250.9 L847.7 255.1 L849.6 259.3 L851.6 263.6 L853.5 267.8 L855.6 272 L857.6 276.3 L859.7 280.5 L861.7 284.8 L863.8 289 L866 293.3 L868.1 297.6 L870.3 301.9 L872.4 306.1 L874.6 310.4 L876.8 314.7 L879 319 L881.3 323.3 L883.5 327.5 L885.8 331.8 L888 336.1 L890.3 340.4 L892.6 344.6 L894.8 348.9 L897.1 353.2 L899.4 357.4 L901.7 361.7 L904 366 L906.3 370.2 L908.5 374.4 L910.8 378.7 L913.1 382.9 L915.4 387.1 L917.6 391.3 M785.6 106.7 L778.1 109 L770.3 111.5 L762.3 114.3 L754 117.1 L745.6 120.2 L737 123.3 L728.3 126.6 L719.4 130 L710.4 133.6 L701.4 137.2 L692.2 140.8 L683.1 144.6 L673.9 148.4 L664.8 152.3 L655.6 156.3 L646.5 160.3 L637.4 164.3 L628.4 168.4 L619.4 172.5 L610.6 176.7 L601.8 180.9 L593.2 185.1 L584.6 189.4 L576.2 193.7 L568 198 L559.8 202.3 L551.9 206.6 L544.1 211 L536.5 215.4 L529.1 219.8 L521.8 224.2 L514.8 228.6 L507.9 233 L501.3 237.4 L494.9 241.9 L488.7 246.4 L482.7 250.8 L477 255.3 L471.5 259.8 L466.3 264.3 L461.3 268.8 L456.5 273.3 L452.1 277.8 L447.8 282.3 L443.9 286.8 L440.2 291.3 L436.8 295.8 L433.6 300.4 L430.7 304.9 L428.1 309.4 L425.8 313.9 L423.8 318.5 L422 323 L420.5 327.5 L419.3 332 L418.4 336.6 L417.8 341.1 L417.4 345.6 L417.4 350.1 L417.6 354.6 L418.1 359.1 L418.9 363.7 L419.9 368.2 L421.3 372.7 L422.9 377.2 L424.8 381.6 L427 386.1 L429.4 390.6 L432.1 395.1 L435 399.5 L438.2 404 L441.7 408.4 L445.4 412.8 L449.3 417.3 L453.5 421.7 L457.9 426 L462.5 430.4 L467.3 434.8 L472.4 439.1 L477.6 443.4 L483.1 447.7 L488.7 452 L494.4 456.2 M807.2 94.4 L799.1 98.7 L791.1 103 L783 107.4 L774.9 111.9 L766.8 116.4 L758.8 120.9 L750.8 125.4 L742.8 130 L735 134.6 L727.2 139.2 L719.5 143.8 L711.9 148.5 L704.4 153.1 L697 157.8 L689.7 162.5 L682.5 167.2 L675.5 171.8 L668.6 176.5 L661.8 181.3 L655.2 186 L648.7 190.7 L642.4 195.4 L636.3 200.1 L630.3 204.9 L624.5 209.6 L618.8 214.3 L613.4 219.1 L608.1 223.8 L603 228.6 L598.1 233.3 L593.4 238.1 L588.9 242.8 L584.6 247.6 L580.5 252.3 L576.6 257.1 L573 261.9 L569.5 266.6 L566.3 271.4 L563.2 276.1 L560.4 280.9 L557.8 285.7 L555.5 290.4 L553.4 295.2 L551.4 300 L549.8 304.7 L548.3 309.5 L547.1 314.3 L546.1 319 L545.4 323.8 L544.8 328.6 L544.6 333.3 L544.5 338.1 L544.7 342.9 L545.1 347.6 L545.7 352.4 L546.6 357.2 L547.7 361.9 L549.1 366.7 L550.6 371.5 L552.4 376.2 L554.5 381 L556.7 385.8 L559.2 390.5 L561.9 395.3 L564.8 400 L567.9 404.8 L571.3 409.5 L574.8 414.3 L578.6 419 L582.6 423.8 L586.8 428.5 L591.1 433.2 L595.7 438 L600.5 442.7 L605.4 447.4 L610.6 452.1 L615.9 456.9 L621.4 461.6 L627 466.3 L632.9 471 L638.8 475.7 L645 480.3 L651.3 485 L657.7 489.7 L664.2 494.3 L670.9 498.9 L677.7 503.6 L684.6 508.2 M854.4 52.2 L843.9 56.3 L833.1 60.5 L822 64.9 L810.8 69.4 L799.5 74 L788.2 78.6 L776.8 83.2 L765.5 87.9 L754.2 92.6 L743 97.3 L731.8 102 L720.7 106.8 L709.7 111.5 L698.8 116.3 L688.1 121 L677.4 125.8 L666.9 130.6 L656.6 135.4 L646.3 140.1 L636.3 144.9 L626.4 149.7 L616.7 154.5 L607.2 159.3 L597.9 164.1 L588.8 168.9 L579.8 173.7 L571.1 178.5 L562.6 183.3 L554.4 188.1 L546.3 192.9 L538.5 197.7 L531 202.5 L523.6 207.3 L516.6 212.1 L509.7 217 L503.2 221.8 L496.9 226.6 L490.9 231.4 L485.1 236.2 L479.6 241 L474.4 245.8 L469.5 250.6 L464.9 255.5 L460.6 260.3 L456.5 265.1 L452.8 269.9 L449.3 274.7 L446.2 279.5 L443.4 284.3 L440.8 289.2 L438.6 294 L436.7 298.8 L435.1 303.6 L433.8 308.4 L432.8 313.2 L432.1 318.1 L431.8 322.9 L431.7 327.7 L432 332.5 L432.6 337.3 L433.4 342.1 L434.6 346.9 L436.2 351.8 L438 356.6 L440.1 361.4 L442.6 366.2 L445.3 371 L448.4 375.8 L451.7 380.6 L455.4 385.5 L459.3 390.3 L463.6 395.1 L468.1 399.9 L472.9 404.7 L478 409.5 L483.4 414.3 L489.1 419.1 L495 424 L501.2 428.8 L507.7 433.6 L514.4 438.4 L521.4 443.2 L528.7 448 L536.2 452.8 L543.9 457.6 M863.9 67.2 L859.4 66.8 L854.3 67 L848.6 67.8 L842.1 69.1 L834.9 70.9 L827.1 73.2 L818.7 75.8 L809.8 78.7 L800.4 82 L790.7 85.4 L780.6 89.1 L770.3 92.8 L759.9 96.8 L749.2 100.8 L738.5 104.9 L727.7 109.1 L716.8 113.4 L706 117.7 L695.1 122.1 L684.3 126.5 L673.5 131 L662.8 135.5 L652.2 140 L641.6 144.5 L631.2 149.1 L620.9 153.7 L610.7 158.3 L600.7 162.9 L590.9 167.5 L581.2 172.2 L571.7 176.8 L562.4 181.5 L553.2 186.2 L544.3 190.9 L535.6 195.6 L527.2 200.3 L518.9 205 L510.9 209.7 L503.1 214.4 L495.6 219.2 L488.3 223.9 L481.3 228.6 L474.6 233.4 L468.1 238.1 L461.9 242.9 L456 247.6 L450.4 252.4 L445 257.1 L440 261.9 L435.3 266.6 L430.8 271.4 L426.7 276.2 L422.9 280.9 L419.4 285.7 L416.2 290.5 L413.3 295.2 L410.7 300 L408.5 304.8 L406.6 309.5 L405 314.3 L403.7 319.1 L402.8 323.8 L402.1 328.6 L401.8 333.4 L401.9 338.1 L402.2 342.9 L402.9 347.7 L403.9 352.5 L405.3 357.2 L406.9 362 L408.9 366.7 L411.2 371.5 L413.9 376.3 L416.8 381 L420 385.8 L423.6 390.5 L427.5 395.3 L431.6 400 L436.1 404.8 L440.9 409.5 L446 414.3 L451.3 419 L456.9 423.7 L462.9 428.5 M857.8 83.9 L855 81.8 L852 80.1 L848.5 78.8 L844.7 77.9 L840.3 77.4 L835.4 77.4 L830 77.9 L823.8 78.8 L817.1 80.2 L809.8 81.9 L801.9 84 L793.5 86.4 L784.5 89.1 L775.2 92.1 L765.5 95.2 L755.5 98.6 L745.2 102.1 L734.7 105.7 L724 109.5 L713.2 113.3 L702.3 117.3 L691.3 121.3 L680.3 125.4 L669.2 129.6 L658.2 133.8 L647.2 138.1 L636.2 142.4 L625.3 146.8 L614.5 151.2 L603.8 155.6 L593.2 160.1 L582.8 164.5 L572.4 169 L562.3 173.5 L552.3 178.1 L542.5 182.6 L532.8 187.2 L523.4 191.8 L514.2 196.4 L505.2 201 L496.4 205.6 L487.8 210.2 L479.5 214.8 L471.4 219.5 L463.6 224.1 L456.1 228.8 L448.8 233.4 L441.8 238.1 L435.1 242.8 L428.7 247.4 L422.5 252.1 L416.7 256.8 L411.2 261.5 L406 266.2 L401 270.9 L396.4 275.6 L392.2 280.3 L388.2 285 L384.6 289.7 L381.3 294.4 L378.3 299.1 L375.6 303.8 L373.3 308.5 L371.3 313.2 L369.7 317.9 L368.4 322.6 L367.5 327.3 L366.8 332 L366.6 336.7 L366.6 341.4 L367 346.1 L367.8 350.8 L368.9 355.5 L370.3 360.2 L372 364.9 L374.1 369.6 L376.5 374.3 L379.3 379 L382.4 383.7 L385.8 388.4 L389.5 393.1 L393.5 397.7 L397.9 402.4 L402.6 407.1 L407.5 411.7 L412.8 416.4 L418.3 421 L424.2 425.7 M890.6 68.3 L886.8 66.4 L882.8 64.9 L878.5 64.1 L873.9 63.8 L868.7 64.2 L863.1 65.2 L856.8 66.8 L850 68.8 L842.7 71.3 L834.9 74.1 L826.8 77.3 L818.3 80.7 L809.5 84.3 L800.5 88 L791.3 91.9 L782 95.9 L772.5 100.1 L763 104.2 L753.5 108.5 L743.9 112.8 L734.3 117.2 L724.8 121.6 L715.3 126 L705.8 130.5 L696.5 135 L687.1 139.6 L677.9 144.1 L668.8 148.7 L659.8 153.3 L650.9 157.9 L642.2 162.5 L633.5 167.1 L625.1 171.8 L616.8 176.4 L608.6 181.1 L600.7 185.7 L592.9 190.4 L585.3 195.1 L577.8 199.8 L570.6 204.5 L563.6 209.2 L556.8 213.9 L550.2 218.6 L543.8 223.3 L537.7 228 L531.8 232.7 L526.1 237.4 L520.6 242.2 L515.4 246.9 L510.5 251.6 L505.8 256.4 L501.3 261.1 L497.1 265.8 L493.2 270.6 L489.5 275.3 L486.1 280 L482.9 284.8 L480.1 289.5 L477.5 294.3 L475.1 299 L473.1 303.8 L471.3 308.5 L469.8 313.2 L468.6 318 L467.7 322.7 L467 327.5 L466.6 332.2 L466.5 337 L466.7 341.7 L467.2 346.5 L468 351.2 L469 355.9 L470.3 360.7 L471.9 365.4 L473.7 370.2 L475.9 374.9 L478.3 379.6 L481 384.4 L483.9 389.1 L487.2 393.8 L490.6 398.6 L494.4 403.3 L498.4 408 L502.7 412.7 L507.2 417.4 L511.9 422.1 M891.1 85.3 L887.8 82.5 L884.4 79.9 L880.9 77.7 L877.3 75.9 L873.4 74.4 L869.3 73.5 L864.9 73 L860.1 73 L854.8 73.4 L849 74.4 L842.8 75.9 L836 77.7 L828.8 79.9 L821.2 82.5 L813.2 85.3 L804.8 88.3 L796.2 91.6 L787.3 95.1 L778.2 98.7 L769 102.4 L759.6 106.3 L750.1 110.2 L740.5 114.3 L730.9 118.4 L721.3 122.6 L711.6 126.8 L702 131.1 L692.4 135.4 L682.8 139.7 L673.4 144.1 L664 148.5 L654.6 153 L645.4 157.4 L636.3 161.9 L627.4 166.4 L618.5 171 L609.8 175.5 L601.3 180.1 L592.9 184.6 L584.6 189.2 L576.6 193.8 L568.7 198.4 L561.1 203 L553.6 207.6 L546.3 212.2 L539.3 216.9 L532.4 221.5 L525.8 226.2 L519.4 230.8 L513.3 235.5 L507.3 240.1 L501.7 244.8 L496.2 249.4 L491 254.1 L486.1 258.8 L481.4 263.5 L477 268.1 L472.9 272.8 L469 277.5 L465.4 282.2 L462.1 286.9 L459 291.6 L456.3 296.3 L453.8 300.9 L451.6 305.6 L449.7 310.3 L448 315 L446.7 319.7 L445.6 324.4 L444.8 329.1 L444.4 333.8 L444.2 338.5 L444.3 343.2 L444.6 347.9 L445.3 352.5 L446.3 357.2 L447.5 361.9 L449.1 366.6 L450.9 371.3 L453 376 L455.4 380.6 L458 385.3 L460.9 390 L464.1 394.6 L467.6 399.3 L471.4 404 L475.4 408.6 L479.6 413.3 M915.6 113.9 L910.8 114.1 L906 114.6 L901.2 115.3 L896.5 116.2 L891.7 117.4 L886.9 118.8 L882 120.4 L877.1 122.2 L872.2 124.2 L867.2 126.4 L862.2 128.7 L857.2 131.2 L852.1 133.8 L846.9 136.6 L841.7 139.5 L836.5 142.5 L831.2 145.6 L825.9 148.9 L820.6 152.2 L815.2 155.6 L809.9 159 L804.5 162.6 L799.1 166.2 L793.8 169.8 L788.4 173.5 L783.1 177.3 L777.7 181.1 L772.4 185 L767.2 188.9 L762 192.8 L756.8 196.7 L751.6 200.7 L746.5 204.8 L741.5 208.8 L736.5 212.9 L731.6 217 L726.8 221.1 L722.1 225.3 L717.4 229.4 L712.8 233.6 L708.3 237.8 L703.9 242 L699.5 246.2 L695.3 250.5 L691.2 254.7 L687.2 259 L683.3 263.2 L679.5 267.5 L675.8 271.8 L672.2 276.1 L668.8 280.4 L665.5 284.7 L662.3 289 L659.2 293.3 L656.3 297.6 L653.5 302 L650.8 306.3 L648.2 310.6 L645.8 314.9 L643.6 319.3 L641.4 323.6 L639.4 327.9 L637.6 332.2 L635.9 336.5 L634.3 340.9 L632.9 345.2 L631.6 349.5 L630.5 353.8 L629.5 358.1 L628.6 362.4 L627.9 366.7 L627.4 371 L626.9 375.3 L626.7 379.5 L626.5 383.8 L626.5 388.1 L626.7 392.3 L626.9 396.5 L627.3 400.7 L627.8 404.9 L628.5 409.1 L629.3 413.3 L630.2 417.5 L631.2 421.6 L632.3 425.7 L633.6 429.8 M912.2 125 L910.1 129.2 L908 133.4 L906 137.7 L903.9 142 L901.8 146.3 L899.7 150.7 L897.6 155.1 L895.5 159.6 L893.5 164 L891.4 168.5 L889.3 173 L887.3 177.5 L885.2 182 L883.2 186.6 L881.1 191.1 L879.1 195.7 L877.1 200.2 L875.1 204.8 L873.1 209.4 L871.1 214 L869.2 218.6 L867.3 223.2 L865.4 227.9 L863.5 232.5 L861.6 237.1 L859.8 241.7 L857.9 246.4 L856.2 251 L854.4 255.7 L852.7 260.3 L851 265 L849.3 269.6 L847.7 274.3 L846.1 279 L844.5 283.6 L843 288.3 L841.5 293 L840 297.6 L838.6 302.3 L837.2 307 L835.9 311.6 L834.6 316.3 L833.4 321 L832.1 325.7 L831 330.3 L829.9 335 L828.8 339.7 L827.7 344.3 L826.8 349 L825.8 353.7 L824.9 358.3 L824.1 363 L823.3 367.7 L822.6 372.3 L821.9 377 L821.2 381.6 L820.6 386.3 L820.1 390.9 L819.6 395.6 L819.1 400.2 L818.7 404.8 L818.4 409.5 L818.1 414.1 L817.9 418.7 L817.7 423.3 L817.5 427.9 L817.4 432.5 L817.4 437.1 L817.4 441.7 L817.4 446.3 L817.5 450.8 L817.6 455.4 L817.8 459.9 L818.1 464.4 L818.3 468.9 L818.6 473.4 L819 477.9 L819.4 482.3 L819.8 486.8 L820.3 491.2 L820.7 495.5 L821.2 499.9 L821.8 504.2 L822.3 508.4 L822.9 512.6 L823.4 516.8 L824 520.9 M864.4 120.6 L859.2 122.9 L854 125.4 L848.7 128 L843.4 130.8 L838 133.7 L832.6 136.8 L827.1 139.9 L821.6 143.2 L816 146.6 L810.4 150 L804.8 153.5 L799.2 157.1 L793.6 160.8 L788 164.5 L782.4 168.3 L776.8 172.1 L771.2 176 L765.7 179.9 L760.2 183.8 L754.7 187.8 L749.3 191.9 L743.9 195.9 L738.6 200 L733.3 204.1 L728.1 208.3 L723 212.4 L718 216.6 L713 220.8 L708.1 225.1 L703.3 229.3 L698.7 233.6 L694.1 237.8 L689.6 242.1 L685.2 246.4 L680.9 250.7 L676.7 255 L672.7 259.4 L668.8 263.7 L665 268.1 L661.3 272.4 L657.8 276.8 L654.3 281.1 L651.1 285.5 L647.9 289.9 L644.9 294.3 L642 298.6 L639.3 303 L636.7 307.4 L634.3 311.8 L632 316.2 L629.9 320.6 L627.9 325 L626.1 329.4 L624.4 333.7 L622.9 338.1 L621.5 342.5 L620.3 346.9 L619.2 351.3 L618.3 355.6 L617.6 360 L617 364.4 L616.5 368.7 L616.2 373.1 L616.1 377.4 L616.1 381.8 L616.3 386.1 L616.6 390.4 L617 394.7 L617.6 399 L618.4 403.3 L619.2 407.6 L620.3 411.8 L621.4 416.1 L622.7 420.3 L624.1 424.5 L625.6 428.7 L627.2 432.8 L629 437 L630.9 441.1 L632.8 445.2 L634.9 449.2 L637 453.3 L639.2 457.2 L641.5 461.2 M947.2 73.3 L946.1 69.4 L945.2 65.6 L944.5 62.2 L944.3 59 L944.7 56.4 L945.9 54.3 L948.4 53 L952.3 52.5 L958.1 53 L965.6 54.3 L974.9 56.3 L985.7 59 L997.6 62.1 L1010.5 65.6 L1024.1 69.3 L1038.1 73.3 L1052.6 77.3 L1067.3 81.5 L1082.3 85.8 M708.5 90.2 L697.4 94.7 L686.4 99.1 L675.3 103.7 L664.3 108.2 L653.4 112.8 L642.5 117.4 L631.7 122.1 L621.1 126.7 L610.6 131.4 L600.3 136 L590.1 140.7 L580.1 145.4 L570.2 150.1 L560.6 154.9 L551.2 159.6 L541.9 164.3 L532.9 169 L524.1 173.8 L515.6 178.5 L507.3 183.3 L499.3 188 L491.5 192.8 L483.9 197.5 L476.6 202.3 L469.7 207.1 L462.9 211.8 L456.5 216.6 L450.4 221.4 L444.5 226.1 L438.9 230.9 L433.7 235.7 L428.7 240.5 L424.1 245.2 L419.8 250 L415.8 254.8 L412.1 259.6 L408.7 264.4 L405.6 269.2 L402.9 273.9 L400.5 278.7 L398.4 283.5 L396.7 288.3 L395.3 293.1 L394.2 297.9 L393.5 302.6 L393.1 307.4 L393 312.2 L393.3 317 L393.9 321.8 L394.8 326.6 L396.1 331.4 L397.7 336.2 L399.6 340.9 L401.9 345.7 L404.5 350.5 L407.4 355.3 L410.6 360.1 L414.2 364.9 L418.1 369.7 L422.3 374.4 L426.8 379.2 L431.6 384 L436.8 388.8 L442.2 393.6 L448 398.3 L454 403.1 L460.4 407.9 M947.2 100.9 L943.1 102 L939.2 103.5 L935.4 105.2 L931.6 107.1 L928 109.2 L924.4 111.6 L920.9 114.1 L917.4 116.9 L913.9 119.8 L910.4 122.8 L906.9 126 L903.5 129.2 L900 132.6 L896.5 136.1 L893.1 139.7 L889.6 143.4 L886.1 147.1 L882.6 150.9 L879.2 154.8 L875.7 158.7 L872.2 162.7 L868.8 166.7 L865.3 170.7 L861.9 174.8 L858.4 178.9 L855 183.1 L851.6 187.3 L848.2 191.5 L844.9 195.7 L841.6 200 L838.2 204.3 L835 208.6 L831.7 212.9 L828.5 217.3 L825.3 221.6 L822.2 226 L819.1 230.4 L816 234.7 L813 239.2 L810.1 243.6 L807.1 248 L804.3 252.4 L801.5 256.9 L798.7 261.3 L796 265.8 L793.4 270.2 L790.8 274.7 L788.3 279.1 L785.9 283.6 L783.5 288.1 L781.2 292.6 L778.9 297 L776.7 301.5 L774.6 306 L772.6 310.5 L770.7 315 L768.8 319.5 L767 324 L765.3 328.5 L763.6 332.9 L762.1 337.4 L760.6 341.9 L759.2 346.4 L757.9 350.9 L756.6 355.4 L755.5 359.8 L754.4 364.3 L753.4 368.8 L752.5 373.2 L751.7 377.7 L751 382.1 L750.3 386.6 L749.8 391 L749.3 395.4 L748.9 399.8 L748.6 404.2 L748.3 408.6 L748.2 413 L748.1 417.4 L748.1 421.8 L748.2 426.1 L748.3 430.4 L748.5 434.7 L748.8 439 L749.2 443.3 L749.6 447.5 L750.1 451.8 L750.7 456 M966.1 139.1 L961 138.5 L956 138.1 L951 137.8 L946.1 137.7 L941.3 137.9 L936.6 138.2 L931.9 138.7 L927.2 139.4 L922.6 140.2 L918 141.3 L913.5 142.5 L908.9 143.9 L904.3 145.4 L899.8 147.1 L895.2 148.9 L890.7 150.9 L886.1 153 L881.5 155.2 L877 157.5 L872.3 160 L867.7 162.6 L863.1 165.3 L858.5 168 L853.8 170.9 L849.1 173.8 L844.5 176.8 L839.8 179.9 L835.1 183.1 L830.4 186.3 L825.7 189.6 L821 192.9 L816.3 196.3 L811.7 199.8 L807 203.3 L802.4 206.8 L797.8 210.4 L793.2 214 L788.6 217.6 L784.1 221.3 L779.6 225 L775.2 228.8 L770.8 232.5 L766.4 236.3 L762.1 240.2 L757.8 244 L753.6 247.9 L749.4 251.7 L745.3 255.6 L741.3 259.5 L737.3 263.5 L733.4 267.4 L729.6 271.4 L725.9 275.3 L722.2 279.3 L718.6 283.3 L715.1 287.3 L711.7 291.3 L708.3 295.3 L705.1 299.3 L701.9 303.3 L698.9 307.3 L695.9 311.4 L693 315.4 L690.2 319.4 L687.6 323.4 L685 327.5 L682.5 331.5 L680.1 335.5 L677.8 339.5 L675.7 343.5 L673.6 347.5 L671.6 351.5 L669.8 355.5 L668 359.5 L666.4 363.5 L664.8 367.5 L663.4 371.4 L662 375.4 L660.8 379.3 L659.7 383.2 L658.6 387.1 L657.7 391 L656.8 394.9 L656.1 398.7 L655.4 402.6 L654.9 406.4 M923.9 148.3 L920 144.8 L916.1 141.5 L912.2 138.2 L908.3 135 L904.4 132 L900.5 129 L896.6 126.2 L892.7 123.6 L888.8 121.1 L884.9 118.8 L880.9 116.7 L876.9 114.7 L872.9 113 L868.7 111.6 L864.5 110.3 L860.2 109.3 L855.8 108.6 L851.2 108.1 L846.4 107.9 L841.5 108 L836.4 108.4 L831.1 109 L825.6 109.9 L819.9 111 L813.9 112.4 L807.7 114 L801.3 115.9 L794.7 117.9 L788 120.2 L781 122.6 L773.8 125.2 L766.5 127.9 L759.1 130.8 L751.6 133.8 L743.9 136.9 L736.1 140.2 L728.3 143.5 L720.4 146.9 L712.5 150.4 L704.5 154 L696.5 157.7 L688.5 161.4 L680.5 165.2 L672.6 169 L664.6 172.9 L656.8 176.8 L648.9 180.8 L641.2 184.8 L633.5 188.8 L625.9 192.9 L618.4 197 L611 201.2 L603.7 205.3 L596.6 209.5 L589.6 213.7 L582.7 217.9 L575.9 222.2 L569.3 226.4 L562.9 230.7 L556.7 235 L550.6 239.3 L544.6 243.6 L538.9 248 L533.4 252.3 L528 256.6 L522.8 261 L517.9 265.4 L513.1 269.7 L508.6 274.1 L504.3 278.5 L500.2 282.9 L496.3 287.3 L492.6 291.7 L489.2 296.1 L486 300.5 L483 304.9 L480.2 309.3 L477.7 313.8 L475.5 318.2 L473.4 322.6 L471.6 327 L470.1 331.4 L468.8 335.8 L467.7 340.2 L466.9 344.6 L466.3 349 L466 353.4 M997.6 167.8 L997.3 171.9 L996.9 176.1 L996.5 180.3 L996.1 184.5 L995.6 188.7 L995.1 193 L994.6 197.3 L994 201.6 L993.3 206 L992.7 210.3 L991.9 214.7 L991.2 219.1 L990.4 223.4 L989.5 227.9 L988.6 232.3 L987.7 236.7 L986.7 241.1 L985.6 245.6 L984.6 250 L983.4 254.5 L982.2 259 L981 263.5 L979.8 267.9 L978.5 272.4 L977.1 276.9 L975.7 281.4 L974.3 285.9 L972.8 290.4 L971.3 294.9 L969.7 299.4 L968.1 303.9 L966.4 308.4 L964.8 313 L963.1 317.5 L961.3 322 L959.5 326.5 L957.7 331 L955.8 335.5 L954 340 L952.1 344.5 L950.1 349 L948.1 353.6 L946.1 358.1 L944.1 362.5 L942.1 367 L940 371.5 L937.9 376 L935.8 380.5 L933.7 385 L931.5 389.4 L929.4 393.9 L927.2 398.3 L925 402.8 L922.8 407.2 L920.6 411.6 L918.3 416 L916.1 420.4 L913.8 424.8 L911.6 429.2 L909.3 433.5 L907.1 437.9 L904.8 442.2 L902.6 446.5 L900.3 450.8 L898 455 L895.8 459.2 L893.5 463.4 L891.3 467.6 L889 471.7 L886.8 475.8 L884.5 479.9 L882.3 483.9 L880.1 487.9 L877.8 491.8 L875.6 495.6 L873.3 499.4 L871.1 503.1 L868.9 506.8 L866.6 510.3 L864.3 513.8 L862 517.1 L859.7 520.3 L857.3 523.4 L854.9 526.3 L852.4 529.1 L849.8 531.7 L847.1 534.1 M1007.6 163.9 L1007.2 167.8 L1006.8 171.8 L1006.3 175.8 L1005.8 179.8 L1005.3 183.9 L1004.8 188 L1004.2 192.2 L1003.6 196.3 L1002.9 200.5 L1002.2 204.7 L1001.5 209 L1000.7 213.2 L999.9 217.5 L999 221.8 L998.1 226.1 L997.1 230.4 L996.1 234.7 L995 239.1 L993.9 243.4 L992.7 247.8 L991.5 252.1 L990.2 256.5 L988.9 260.9 L987.6 265.3 L986.2 269.7 L984.7 274.1 L983.2 278.5 L981.7 282.9 L980.1 287.4 L978.5 291.8 L976.8 296.2 L975.1 300.6 L973.4 305.1 L971.6 309.5 L969.7 313.9 L967.9 318.4 L966 322.8 L964 327.2 L962 331.7 L960 336.1 L958 340.5 L955.9 345 L953.8 349.4 L951.7 353.8 L949.5 358.2 L947.3 362.7 L945.1 367.1 L942.9 371.5 L940.6 375.9 L938.3 380.3 L936 384.7 L933.7 389 L931.4 393.4 L929 397.8 L926.6 402.1 L924.3 406.5 L921.9 410.8 L919.5 415.1 L917.1 419.4 L914.6 423.7 L912.2 427.9 L909.8 432.2 L907.4 436.4 L904.9 440.6 L902.5 444.8 L900.1 449 L897.6 453.1 L895.2 457.2 L892.8 461.3 L890.3 465.3 L887.9 469.3 L885.5 473.3 L883.1 477.2 L880.7 481.1 L878.3 484.9 L875.8 488.6 L873.4 492.3 L871 495.9 L868.6 499.5 L866.2 502.9 L863.7 506.3 L861.2 509.5 L858.7 512.7 L856.2 515.7 M1022.2 124.4 L1015 121.3 L1008 118.4 L1001.1 115.6 L994.3 113 L987.7 110.6 L981.3 108.4 L975.1 106.5 L969.1 104.7 L963.3 103.2 L957.7 102 L952.3 101.1 L947.1 100.5 L942.1 100.1 L937.2 100.1 L932.5 100.4 L927.8 101 L923.3 101.9 L918.9 103.1 L914.5 104.5 L910.1 106.2 L905.8 108.1 L901.5 110.3 L897.2 112.7 L892.9 115.3 L888.5 118 L884.2 120.9 L879.8 124 L875.4 127.1 L871 130.4 L866.5 133.8 L862.1 137.3 L857.6 140.9 L853.1 144.6 L848.6 148.3 L844.2 152.2 L839.7 156 L835.2 160 L830.7 163.9 L826.2 168 L821.8 172 L817.4 176.1 L813 180.3 L808.6 184.4 L804.3 188.6 L800 192.9 L795.7 197.1 L791.5 201.4 L787.4 205.7 L783.3 210 L779.2 214.3 L775.2 218.7 L771.3 223.1 L767.4 227.4 L763.6 231.8 L759.9 236.2 L756.3 240.7 L752.7 245.1 L749.2 249.5 L745.8 254 L742.5 258.4 L739.3 262.9 L736.2 267.3 L733.1 271.8 L730.2 276.3 L727.3 280.8 L724.6 285.3 L721.9 289.7 L719.4 294.2 L716.9 298.7 L714.6 303.2 L712.4 307.7 L710.3 312.2 L708.3 316.7 L706.4 321.2 L704.6 325.7 L703 330.2 L701.4 334.7 L700 339.2 L698.7 343.7 L697.5 348.2 L696.4 352.7 L695.5 357.2 L694.6 361.7 L693.9 366.2 L693.3 370.6 L692.8 375.1 L692.5 379.6 M1012.2 70 L1010.3 67.6 L1009.6 65.7 L1010.4 64.3 L1012.9 63.5 M790.9 63.4 L794.3 63.9 L795.9 65 L796 66.7 L794.7 68.8 L792.4 71.4 L789.3 74.4 L785.5 77.6 L781.2 81.1 L776.5 84.8 L771.5 88.6 L766.4 92.6 L761 96.7 L755.6 100.9 L750.1 105.1 L744.5 109.5 L738.9 113.8 L733.4 118.3 L727.8 122.7 L722.4 127.2 L716.9 131.7 L711.6 136.3 L706.3 140.9 L701.1 145.5 L696 150.1 L690.9 154.7 L686.1 159.4 L681.3 164 L676.6 168.7 L672.1 173.4 L667.7 178.1 L663.4 182.8 L659.3 187.5 L655.4 192.2 L651.6 196.9 L647.9 201.7 L644.4 206.4 L641 211.1 L637.9 215.9 L634.9 220.6 L632 225.4 L629.4 230.1 L626.9 234.9 L624.5 239.7 L622.4 244.4 L620.5 249.2 L618.7 254 L617.1 258.7 L615.7 263.5 L614.5 268.3 L613.4 273.1 L612.6 277.8 L612 282.6 L611.5 287.4 L611.2 292.2 L611.1 297 L611.3 301.7 L611.6 306.5 L612 311.3 L612.7 316.1 L613.6 320.9 L614.7 325.7 L615.9 330.4 L617.4 335.2 L619 340 L620.8 344.8 L622.8 349.6 L625 354.3 L627.3 359.1 L629.9 363.9 L632.6 368.7 L635.5 373.5 L638.5 378.2 L641.8 383 L645.2 387.8 L648.8 392.5 L652.5 397.3 L656.4 402.1 L660.5 406.8 L664.7 411.6 L669.1 416.3 L673.6 421.1 M1074.4 87.8 L1079.7 88 L1086.1 88.5 L1093.5 89.4 M710.3 90.7 L710.4 92.3 L709.7 94.1 L708.2 96.3 L706 98.7 L703.3 101.3 L700.2 104.2 L696.6 107.2 L692.7 110.4 L688.5 113.7 L684.1 117.1 L679.5 120.7 L674.8 124.4 L670 128.1 L665.1 132 L660.2 135.9 L655.3 139.9 L650.3 143.9 L645.4 148 L640.5 152.1 L635.7 156.3 L631 160.5 L626.3 164.7 L621.7 169 L617.2 173.3 L612.9 177.6 L608.6 182 L604.5 186.4 L600.5 190.8 L596.7 195.2 L593 199.6 L589.5 204.1 L586.1 208.5 L582.9 213 L579.9 217.5 L577 222 L574.4 226.5 L571.9 231 L569.6 235.5 L567.4 240 L565.5 244.6 L563.8 249.1 L562.2 253.7 L560.9 258.2 L559.8 262.8 L558.8 267.4 L558.1 271.9 L557.6 276.5 L557.3 281.1 L557.1 285.7 L557.2 290.2 L557.5 294.8 L558 299.4 L558.8 304 L559.7 308.6 L560.8 313.2 L562.1 317.8 L563.7 322.3 L565.4 326.9 L567.4 331.5 L569.5 336.1 L571.9 340.7 L574.4 345.3 L577.2 349.9 L580.1 354.5 L583.3 359 L586.6 363.6 L590.1 368.2 L593.8 372.7 L597.7 377.3 L601.7 381.9 L606 386.4 L610.4 391 L615 395.5 L619.7 400.1 L624.6 404.6 L629.7 409.1 L634.9 413.6 L640.3 418.1 L645.8 422.6 L651.5 427.1 L657.3 431.6 M736.6 80.5 L751.8 76.2 L766.9 71.9 L781.6 67.8 L795.9 63.8 L809.5 60.1 L822.3 56.7 L833.8 53.7 L843.8 51.4 L851.8 49.9 L857.7 49.4 L861.6 50 L863.7 51.5 L864.6 53.8 L864.6 56.8 L864 60.2 L863.1 63.9 L861.9 67.9 L860.6 72 L859.2 76.3 L857.7 80.7 L856.2 85.1 L854.6 89.7 L853.1 94.2 L851.6 98.8 L850 103.5 L848.5 108.1 L847 112.8 L845.5 117.5 L844.1 122.2 L842.7 127 L841.3 131.7 L840 136.5 L838.6 141.2 L837.4 146 L836.1 150.8 L834.9 155.6 L833.8 160.4 L832.7 165.2 L831.6 170 L830.6 174.8 L829.6 179.6 L828.7 184.4 L827.8 189.2 L827 194 L826.2 198.8 L825.4 203.7 L824.8 208.5 L824.1 213.3 L823.5 218.1 L823 223 L822.5 227.8 L822.1 232.6 L821.7 237.4 L821.4 242.3 L821.2 247.1 L821 252 L820.8 256.8 L820.7 261.6 L820.7 266.5 L820.7 271.3 L820.7 276.1 L820.8 281 L821 285.8 L821.2 290.7 L821.5 295.5 L821.9 300.3 L822.3 305.2 L822.7 310 L823.2 314.9 L823.7 319.7 L824.4 324.5 L825 329.4 L825.7 334.2 L826.5 339.1 L827.3 343.9 L828.1 348.7 L829 353.6 L830 358.4 L831 363.2 L832.1 368.1 L833.2 372.9 L834.3 377.8 M1070.6 113.3 L1080.4 116.8 L1090.3 120.5 L1100.3 124.2 L1110.3 128.1 L1120.5 132 L1130.6 136 L1140.8 140 L1150.9 144.1 L1161 148.2 L1171.1 152.4 L1181.1 156.6 L1191 160.9 L1200.8 165.2 L1210.6 169.5 L1220.2 173.8 L1229.6 178.2 L1238.9 182.6 L1248.1 187 L1257.1 191.4 L1265.9 195.9 L1274.6 200.3 L1283 204.8 L1291.3 209.3 L1299.3 213.8 L1307.2 218.3 L1314.8 222.8 L1322.1 227.3 L1329.3 231.9 L1336.2 236.4 L1342.8 241 L1349.2 245.5 L1355.3 250.1 L1361.2 254.7 L1366.7 259.3 L1372 263.8 L1377.1 268.4 L1381.8 273 L1386.3 277.6 L1390.4 282.2 L1394.3 286.8 L1397.9 291.4 L1401.1 296 L1404.1 300.6 L1406.8 305.2 L1409.1 309.8 L1411.2 314.4 L1412.9 319 L1414.3 323.6 L1415.4 328.2 L1416.2 332.8 L1416.7 337.4 L1416.9 342.1 L1416.8 346.7 L1416.3 351.3 L1415.5 355.9 L1414.5 360.4 L1413.1 365 L1411.4 369.6 L1409.4 374.2 L1407.1 378.8 L1404.5 383.4 L1401.6 388 L1398.4 392.5 L1394.9 397.1 L1391.2 401.6 L1387.1 406.2 L1382.8 410.7 L1378.2 415.3 L1373.3 419.8 L1368.2 424.3 L1362.8 428.8 L1357.1 433.3 L1351.2 437.8 L1345.1 442.3 L1338.8 446.7 L1332.2 451.1 L1325.5 455.6 L1318.5 460 L1311.3 464.3 L1304 468.7 L1296.5 473 L1288.9 477.3 L1281.1 481.6 M533.8 485.9 L546.4 490.1 L559.2 494.2 L571.9 498.3 L584.8 502.4 M1111.1 96.7 L1121.9 98.9 M678.9 101.4 L675.3 104.1 L671.3 107 L666.9 110 L662.1 113.2 L657.1 116.6 L651.8 120.1 L646.4 123.6 L640.8 127.3 L635.1 131.1 L629.4 134.9 L623.6 138.8 L617.8 142.8 L612 146.8 L606.2 150.9 L600.5 155 L594.9 159.1 L589.3 163.3 L583.9 167.6 L578.5 171.8 L573.3 176.1 L568.2 180.4 L563.2 184.8 L558.4 189.1 L553.7 193.5 L549.2 197.9 L544.9 202.3 L540.8 206.7 L536.8 211.2 L533.1 215.6 L529.5 220.1 L526.2 224.6 L523 229.1 L520 233.6 L517.3 238.1 L514.8 242.6 L512.5 247.1 L510.4 251.6 L508.6 256.2 L507 260.7 L505.6 265.3 L504.4 269.8 L503.5 274.4 L502.8 278.9 L502.4 283.5 L502.1 288 L502.2 292.6 L502.4 297.2 L502.9 301.7 L503.7 306.3 L504.7 310.9 L505.9 315.5 L507.3 320 L509 324.6 L511 329.2 L513.1 333.7 L515.5 338.3 L518.1 342.9 L521 347.4 L524.1 352 L527.4 356.6 L530.9 361.1 L534.7 365.7 L538.7 370.2 L542.8 374.8 L547.2 379.3 L551.8 383.9 L556.7 388.4 L561.7 392.9 L566.9 397.5 L572.3 402 L577.8 406.5 L583.6 411 L589.5 415.5 L595.6 419.9 L601.9 424.4 L608.3 428.9 L614.9 433.3 L621.7 437.7 L628.5 442.2 L635.5 446.6 L642.7 450.9 L649.9 455.3 L657.3 459.6 L664.8 464 M1045.6 122.2 L1044.6 118.9 L1043.8 115.8 L1043.2 112.8 L1042.7 110 L1042.6 107.4 L1042.7 104.9 L1043.2 102.7 L1044.1 100.8 L1045.4 99 L1047.3 97.6 L1049.7 96.5 L1052.8 95.6 L1056.6 95.1 L1061 95 L1066.2 95.1 L1072.2 95.6 L1078.9 96.4 L1086.4 97.5 L1094.6 98.9 L1103.5 100.6 L1113.1 102.6 L1123.2 104.8 L1134 107.2 L1145.2 109.8 L1156.9 112.6 L1169 115.6 M629.1 118.7 L623.9 122 L618.5 125.3 L612.8 128.8 L607.1 132.4 L601.2 136.1 L595.2 139.8 L589.2 143.6 L583.2 147.5 L577.2 151.5 L571.2 155.5 L565.3 159.5 L559.5 163.6 L553.7 167.7 L548 171.9 L542.4 176.1 L537 180.3 L531.7 184.6 L526.5 188.9 L521.6 193.2 L516.7 197.5 L512.1 201.9 L507.6 206.2 L503.4 210.6 L499.3 215 L495.4 219.4 L491.8 223.8 L488.3 228.3 L485.1 232.7 L482.1 237.2 L479.4 241.7 L476.8 246.1 L474.5 250.6 L472.5 255.1 L470.7 259.6 L469.1 264.1 L467.8 268.6 L466.8 273.1 L466 277.7 L465.4 282.2 L465.1 286.7 L465.1 291.2 L465.3 295.8 L465.8 300.3 L466.5 304.8 L467.5 309.4 L468.7 313.9 L470.2 318.5 L472 323 L474 327.5 L476.2 332.1 L478.8 336.6 L481.5 341.1 L484.5 345.7 L487.8 350.2 L491.3 354.7 L495 359.3 L499 363.8 L503.2 368.3 L507.7 372.8 L512.4 377.3 M1217.8 136.7 L1216.3 134.4 L1215.1 132.3 M598.4 130.4 L607.6 128.6 L616.3 127 L624.5 125.6 L632.3 124.4 L639.5 123.4 L646.2 122.7 L652.3 122.1 L657.9 121.8 L663 121.7 L667.6 121.8 L671.6 122.1 L675.2 122.7 L678.3 123.5 L680.9 124.5 L683.2 125.7 L685 127.1 L686.5 128.7 L687.6 130.5 L688.5 132.5 L689 134.6 L689.4 136.9 L689.5 139.3 L689.4 141.9 L689.2 144.5 L688.8 147.3 L688.3 150.3 L687.8 153.3 L687.1 156.4 L686.4 159.6 L685.6 162.8 L684.8 166.2 L684 169.6 L683.2 173.1 L682.4 176.7 L681.6 180.3 L680.9 183.9 L680.1 187.6 L679.4 191.4 L678.8 195.1 L678.2 199 L677.7 202.8 L677.3 206.7 L676.9 210.7 L676.6 214.6 L676.4 218.6 L676.2 222.6 L676.2 226.6 L676.3 230.7 L676.4 234.7 L676.6 238.8 L677 242.9 L677.4 247 L678 251.2 L678.6 255.3 L679.4 259.5 L680.2 263.7 L681.2 267.8 L682.3 272 L683.4 276.2 L684.7 280.4 L686.1 284.6 L687.6 288.9 L689.3 293.1 L691 297.3 L692.8 301.5 L694.8 305.8 L696.8 310 L699 314.2 L701.2 318.5 L703.6 322.7 L706.1 327 L708.6 331.2 L711.3 335.4 L714 339.7 L716.9 343.9 L719.9 348.1 L722.9 352.4 L726 356.6 L729.3 360.8 L732.6 365 L736 369.2 L739.5 373.4 L743 377.5 L746.6 381.7 L750.4 385.9" fill="none" stroke="#8a8a8a" stroke-opacity="0.42" stroke-width="1.39" stroke-dasharray="1.39 2.29"/>
<path d="M667.2 106.7 L686.7 103.3 M714.4 106.1 L735 85.6 M741.1 88.9 L735 85.6 M761 76 L775.6 73.3 M713.9 157.8 L730 142 L748 125.5 L767.8 110.6 M704.4 124.4 L716.7 121.7 M785.6 106.7 L817.8 98.9 M807.2 94.4 L835 80 M854.4 52.2 L887.8 41.7 M863.9 67.2 L871 69.5 L877.8 75 M857.8 83.9 L861.7 87.8 L860 92.2 M890.6 68.3 L902.2 77.2 M891.1 85.3 L915 111.7 M945.6 117.8 L915.6 113.9 M912.2 125 L915.6 118.3 M864.4 120.6 L878.9 115 M947.2 73.3 L958.9 110.6 M947.2 100.9 L951.7 100 M966.1 139.1 L982.8 142.2 M923.9 148.3 L930.6 154.4 M997.6 167.8 L999.5 140 L1002.2 117.2 M1007.6 163.9 L1009.3 147 L1012.2 132.2 L1015.3 122 L1019.4 116.7 M1022.2 124.4 L1026.1 126.1 M1012.2 70 L1026.7 82.2 M1065.6 88.9 L1074.4 87.8 M1078.9 85 L1090 89.4 M1042.8 103.6 L1070.6 113.3 M1096.7 93.9 L1111.1 96.7 M1045.6 122.2 L1046.7 125.6 M1217.8 136.7 L1222.8 142.8" fill="none" stroke="#888" stroke-width="1.25"/>
<circle cx="667.2" cy="106.7" r="1.15" fill="#8c8c8c"/>
<circle cx="735" cy="85.6" r="1.15" fill="#8c8c8c"/>
<circle cx="735" cy="85.6" r="1.15" fill="#8c8c8c"/>
<circle cx="761" cy="76" r="1.15" fill="#8c8c8c"/>
<circle cx="767.8" cy="110.6" r="1.15" fill="#8c8c8c"/>
<circle cx="704.4" cy="124.4" r="1.15" fill="#8c8c8c"/>
<circle cx="817.8" cy="98.9" r="1.15" fill="#8c8c8c"/>
<circle cx="835" cy="80" r="1.15" fill="#8c8c8c"/>
<circle cx="887.8" cy="41.7" r="1.15" fill="#8c8c8c"/>
<circle cx="877.8" cy="75" r="1.15" fill="#8c8c8c"/>
<circle cx="860" cy="92.2" r="1.15" fill="#8c8c8c"/>
<circle cx="902.2" cy="77.2" r="1.15" fill="#8c8c8c"/>
<circle cx="915" cy="111.7" r="1.15" fill="#8c8c8c"/>
<circle cx="945.6" cy="117.8" r="1.15" fill="#8c8c8c"/>
<circle cx="915.6" cy="118.3" r="1.15" fill="#8c8c8c"/>
<circle cx="878.9" cy="115" r="1.15" fill="#8c8c8c"/>
<circle cx="958.9" cy="110.6" r="1.15" fill="#8c8c8c"/>
<circle cx="951.7" cy="100" r="1.15" fill="#8c8c8c"/>
<circle cx="982.8" cy="142.2" r="1.15" fill="#8c8c8c"/>
<circle cx="930.6" cy="154.4" r="1.15" fill="#8c8c8c"/>
<circle cx="1002.2" cy="117.2" r="1.15" fill="#8c8c8c"/>
<circle cx="1019.4" cy="116.7" r="1.15" fill="#8c8c8c"/>
<circle cx="1026.1" cy="126.1" r="1.15" fill="#8c8c8c"/>
<circle cx="1026.7" cy="82.2" r="1.15" fill="#8c8c8c"/>
<circle cx="1065.6" cy="88.9" r="1.15" fill="#8c8c8c"/>
<circle cx="1090" cy="89.4" r="1.15" fill="#8c8c8c"/>
<circle cx="1042.8" cy="103.6" r="1.15" fill="#8c8c8c"/>
<circle cx="1096.7" cy="93.9" r="1.15" fill="#8c8c8c"/>
<circle cx="1046.7" cy="125.6" r="1.15" fill="#8c8c8c"/>
<circle cx="1222.8" cy="142.8" r="1.15" fill="#8c8c8c"/>
<path d="M726.3 109.7 L722.7 112.4 L719 115.2 L715.4 117.9 L711.7 120.7 L708 123.5 L704.4 126.4 L700.7 129.2 L697.1 132.1 L693.5 135 L689.9 137.9 L686.3 140.9 L682.8 143.8 L679.3 146.8 L675.8 149.7 L672.4 152.7 L669 155.7 L665.7 158.7 L662.4 161.7 L659.2 164.7 L656 167.7 L652.9 170.7 L649.8 173.7 L646.8 176.8 L643.8 179.8 L641 182.9 L638.1 185.9 L635.4 189 L632.7 192 L630.1 195.1 L627.5 198.2 L625 201.2 L622.6 204.3 L620.3 207.4 L618 210.5 L615.8 213.5 L613.7 216.6 L611.6 219.7 L609.7 222.8 L607.8 225.9 L606 229 L604.3 232.1 L602.6 235.2 L601.1 238.3 L599.6 241.4 L598.2 244.5 L596.9 247.6 L595.6 250.7 L594.5 253.8 L593.4 256.9 L592.4 260.1 L591.5 263.2 L590.7 266.3 L590 269.4 M754.2 116.3 L749.2 119.5 L744.2 122.8 L739.3 126 L734.4 129.2 L729.6 132.5 L724.8 135.7 L720.1 138.9 L715.4 142.2 L710.8 145.4 L706.3 148.6 L701.8 151.9 L697.4 155.1 L693 158.3 L688.7 161.6 L684.4 164.8 L680.3 168 L676.2 171.3 L672.1 174.5 L668.1 177.7 L664.2 181 L660.4 184.2 L656.6 187.4 L652.9 190.7 L649.3 193.9 L645.8 197.1 L642.3 200.4 L639 203.6 L635.7 206.8 L632.4 210.1 L629.3 213.3 L626.2 216.6 L623.3 219.8 L620.4 223 L617.6 226.3 L614.8 229.5 L612.2 232.7 L609.6 236 L607.2 239.2 L604.8 242.4 L602.5 245.7 L600.3 248.9 L598.2 252.1 L596.2 255.4 L594.3 258.6 L592.5 261.8 L590.7 265.1 L589.1 268.3 M764.2 117.8 L759.1 121 L754.1 124.1 L749.1 127.3 L744.2 130.5 L739.3 133.7 L734.5 136.9 L729.7 140.1 L724.9 143.2 L720.2 146.4 L715.5 149.6 L710.9 152.8 L706.4 156 L701.9 159.2 L697.4 162.4 L693 165.6 L688.7 168.8 L684.4 172 L680.3 175.2 L676.1 178.4 L672 181.6 L668 184.8 L664.1 188.1 L660.3 191.3 L656.5 194.5 L652.7 197.7 L649.1 200.9 L645.5 204.1 L642 207.3 L638.6 210.5 L635.3 213.7 L632 217 L628.8 220.2 L625.7 223.4 L622.7 226.6 L619.7 229.8 L616.9 233 L614.1 236.2 L611.4 239.5 L608.8 242.7 L606.3 245.9 L603.9 249.1 L601.5 252.3 L599.3 255.5 L597.1 258.7 L595.1 262 L593.1 265.2 L591.2 268.4 M794.2 168.3 L790.5 169.4 L786.8 170.6 L783 171.8 L779.2 173.1 L775.4 174.4 L771.6 175.8 L767.8 177.2 L763.9 178.7 L760 180.2 L756.1 181.7 L752.2 183.3 L748.2 184.9 L744.3 186.5 L740.3 188.2 L736.3 189.9 L732.3 191.7 L728.3 193.4 L724.3 195.3 L720.3 197.1 L716.3 199 L712.2 200.9 L708.2 202.8 L704.2 204.7 L700.2 206.7 L696.2 208.7 L692.2 210.7 L688.2 212.8 L684.2 214.8 L680.2 216.9 L676.2 219 L672.3 221.1 L668.4 223.3 L664.5 225.4 L660.6 227.6 L656.7 229.8 L652.9 232 L649 234.2 L645.2 236.4 L641.5 238.7 L637.7 241 L634 243.2 L630.4 245.5 L626.7 247.8 L623.1 250.1 L619.6 252.4 L616 254.8 L612.5 257.1 L609.1 259.4 L605.7 261.8 L602.3 264.2 L599 266.5 L595.7 268.9 L592.5 271.3 M935 52 L930.5 48.8 L926 45.6 L921.5 42.4 L916.9 39.2 L912.5 36 L908.1 33 L904 30.2 L900.6 29.5 L896.1 31.8 L890.8 34.9 L885.4 38 L879.9 41.2 L874.5 44.4 L869 47.6 L863.5 50.8 L858 54 L852.5 57.2 L847 60.4 L841.5 63.6 L836.1 66.9 L830.7 70.1 L825.3 73.3 L819.9 76.5 L814.5 79.7 L809.2 83 L803.9 86.2 L798.6 89.4 L793.4 92.6 L788.2 95.9 L783 99.1 L777.8 102.3 L772.7 105.5 L767.7 108.8 L762.6 112 L757.6 115.2 L752.7 118.4 L747.8 121.7 L742.9 124.9 L738.1 128.1 L733.4 131.3 L728.7 134.5 L724 137.8 L719.4 141 L714.9 144.2 L710.4 147.4 L705.9 150.7 L701.5 153.9 L697.2 157.1 L693 160.3 L688.8 163.6 L684.7 166.8 L680.6 170 L676.6 173.2 L672.7 176.5 L668.8 179.7 L665 182.9 L661.3 186.1 L657.6 189.4 L654 192.6 L650.5 195.8 L647.1 199 L643.8 202.3 L640.5 205.5 L637.3 208.7 L634.2 211.9 L631.1 215.2 L628.2 218.4 L625.3 221.6 L622.5 224.8 L619.8 228.1 L617.2 231.3 L614.6 234.5 L612.2 237.7 L609.8 241 L607.5 244.2 L605.3 247.4 L603.2 250.6 L601.2 253.9 L599.3 257.1 L597.5 260.3 L595.7 263.5 L594.1 266.8 L592.5 270 M988.3 66.7 L985.6 64.4 L983.2 62.3 L981.2 60.3 L979.7 58.6 L978.8 57 L978.5 55.8 L979.2 54.9 L980.8 54.3 L983.4 54.1 M816.8 54.3 L818.3 54.9 L818.7 55.8 L818.2 57 L816.9 58.5 L815 60.3 L812.6 62.3 L809.7 64.4 L806.5 66.7 L803 69.1 L799.3 71.6 L795.4 74.2 L791.3 76.9 L787.2 79.6 L783 82.4 L778.7 85.2 L774.3 88 L770 90.9 L765.5 93.9 L761.1 96.8 L756.7 99.8 L752.3 102.8 L747.8 105.8 L743.4 108.8 L739 111.8 L734.7 114.9 L730.3 118 L726 121 L721.7 124.1 L717.4 127.2 L713.2 130.3 L709.1 133.4 L704.9 136.5 L700.8 139.6 L696.8 142.8 L692.8 145.9 L688.9 149 L685 152.1 L681.2 155.3 L677.4 158.4 L673.7 161.6 L670 164.7 L666.5 167.9 L662.9 171 L659.5 174.2 L656.1 177.3 L652.8 180.5 L649.5 183.7 L646.3 186.8 L643.2 190 L640.2 193.2 L637.2 196.3 L634.3 199.5 L631.5 202.7 L628.8 205.8 L626.1 209 L623.5 212.2 L621 215.4 L618.6 218.6 L616.3 221.7 L614 224.9 L611.8 228.1 L609.7 231.3 L607.7 234.5 L605.8 237.6 L604 240.8 L602.2 244 L600.6 247.2 L599 250.4 L597.5 253.6 L596.1 256.7 L594.8 259.9 L593.6 263.1 L592.4 266.3 L591.4 269.5 M922.8 89.1 L919.5 87.5 L916.2 86 L913 84.7 L909.8 83.5 L906.6 82.5 L903.4 81.7 L900.2 81 L897 80.5 L893.8 80.2 L890.6 80.1 L887.3 80.2 L884 80.5 L880.6 81 L877.2 81.6 L873.6 82.5 L870 83.5 L866.3 84.7 L862.5 86 L858.6 87.4 L854.6 89 L850.6 90.7 L846.4 92.6 L842.2 94.5 L837.9 96.5 L833.6 98.6 L829.2 100.8 L824.7 103.1 L820.1 105.4 L815.6 107.8 L810.9 110.3 L806.3 112.8 L801.6 115.3 L796.9 117.9 L792.2 120.5 L787.4 123.2 L782.7 125.8 L777.9 128.6 L773.1 131.3 L768.4 134.1 L763.6 136.9 L758.9 139.7 L754.1 142.5 L749.4 145.4 L744.7 148.3 L740 151.1 L735.3 154.1 L730.6 157 L726 159.9 L721.4 162.8 L716.9 165.8 L712.4 168.8 L707.9 171.7 L703.4 174.7 L699 177.7 L694.7 180.7 L690.3 183.7 L686.1 186.7 L681.9 189.8 L677.7 192.8 L673.6 195.8 L669.5 198.9 L665.5 201.9 L661.6 205 L657.7 208 L653.9 211.1 L650.1 214.1 L646.4 217.2 L642.8 220.3 L639.3 223.4 L635.8 226.4 L632.3 229.5 L629 232.6 L625.7 235.7 L622.5 238.8 L619.4 241.9 L616.3 245 L613.4 248.1 L610.5 251.2 L607.7 254.3 L604.9 257.4 L602.3 260.5 L599.7 263.6 L597.2 266.7 L594.8 269.8 M895.6 97.2 L892.4 96.8 L889.2 96.5 L886 96.4 L882.7 96.4 L879.5 96.5 L876.1 96.8 L872.7 97.3 L869.3 97.9 L865.8 98.6 L862.2 99.4 L858.6 100.4 L854.9 101.5 L851.1 102.8 L847.3 104.1 L843.4 105.5 L839.4 107.1 L835.4 108.7 L831.3 110.4 L827.1 112.2 L822.9 114.1 L818.6 116.1 L814.3 118.1 L809.9 120.2 L805.5 122.4 L801.1 124.6 L796.6 126.8 L792.1 129.1 L787.6 131.5 L783 133.9 L778.4 136.3 L773.8 138.8 L769.2 141.3 L764.6 143.8 L760 146.4 L755.4 149 L750.7 151.6 L746.1 154.3 L741.5 156.9 L736.9 159.6 L732.3 162.4 L727.8 165.1 L723.2 167.8 L718.7 170.6 L714.2 173.4 L709.7 176.2 L705.3 179 L700.9 181.8 L696.5 184.7 L692.1 187.5 L687.8 190.4 L683.6 193.3 L679.3 196.1 L675.2 199 L671 201.9 L666.9 204.8 L662.9 207.8 L658.9 210.7 L655 213.6 L651.1 216.6 L647.3 219.5 L643.6 222.5 L639.9 225.4 L636.2 228.4 L632.7 231.4 L629.2 234.3 L625.7 237.3 L622.3 240.3 L619 243.3 L615.8 246.3 L612.6 249.3 L609.6 252.3 L606.5 255.3 L603.6 258.3 L600.7 261.3 L597.9 264.3 L595.2 267.3 L592.6 270.3 M896.1 128.7 L893 128.1 L889.8 127.6 L886.7 127.2 L883.5 126.9 L880.3 126.6 L877.1 126.5 L873.9 126.5 L870.6 126.5 L867.4 126.7 L864 126.9 L860.7 127.3 L857.3 127.7 L853.9 128.2 L850.5 128.9 L847 129.6 L843.5 130.4 L839.9 131.2 L836.3 132.2 L832.6 133.2 L828.9 134.3 L825.2 135.5 L821.4 136.8 L817.6 138.1 L813.7 139.5 L809.8 141 L805.9 142.6 L801.9 144.1 L797.9 145.8 L793.8 147.5 L789.8 149.3 L785.6 151.1 L781.5 152.9 L777.3 154.8 L773.2 156.8 L769 158.8 L764.7 160.8 L760.5 162.9 L756.2 165 L752 167.1 L747.7 169.3 L743.4 171.5 L739.1 173.8 L734.8 176 L730.6 178.3 L726.3 180.7 L722 183 L717.7 185.4 L713.5 187.8 L709.2 190.2 L705 192.6 L700.8 195.1 L696.6 197.5 L692.4 200 L688.3 202.5 L684.2 205.1 L680.1 207.6 L676 210.2 L672 212.7 L668 215.3 L664 217.9 L660.1 220.5 L656.2 223.1 L652.3 225.8 L648.5 228.4 L644.7 231 L641 233.7 L637.3 236.4 L633.7 239 L630.1 241.7 L626.6 244.4 L623.1 247.1 L619.7 249.8 L616.4 252.5 L613.1 255.3 L609.8 258 L606.6 260.7 L603.5 263.5 L600.4 266.2 L597.4 268.9 L594.5 271.7 M1248.9 158.7 L1250.8 158.1 L1252.8 157.6 L1255 157.1 L1257.3 156.7 L1259.7 156.3 L1262.3 156.1 L1265.1 155.9 L1268.1 155.7 L1271.2 155.7 L1274.4 155.7 M532.5 155.8 L535.4 155.9 L538.2 156.1 L540.8 156.4 L543.2 156.7 L545.5 157.2 L547.6 157.6 L549.6 158.2 L551.4 158.8 L553.1 159.5 L554.7 160.2 L556.1 161 L557.4 161.9 L558.6 162.8 L559.7 163.8 L560.7 164.8 L561.6 165.9 L562.4 167.1 L563.1 168.3 L563.7 169.5 L564.2 170.8 L564.7 172.2 L565 173.6 L565.4 175 L565.6 176.5 L565.8 178.1 L566 179.6 L566.1 181.2 L566.2 182.9 L566.3 184.6 L566.3 186.3 L566.3 188.1 L566.2 189.9 L566.2 191.7 L566.1 193.6 L566.1 195.5 L566 197.4 L565.9 199.3 L565.8 201.3 L565.7 203.3 L565.7 205.4 L565.6 207.4 L565.5 209.5 L565.5 211.6 L565.5 213.7 L565.5 215.9 L565.5 218 L565.5 220.2 L565.6 222.4 L565.7 224.6 L565.9 226.9 L566 229.1 L566.2 231.4 L566.5 233.7 L566.7 236 L567 238.3 L567.4 240.6 L567.8 242.9 L568.2 245.3 L568.7 247.7 L569.2 250 L569.8 252.4 L570.4 254.8 L571.1 257.2 L571.8 259.6 L572.6 262 L573.4 264.5 L574.3 266.9 L575.2 269.3 L576.2 271.8 L577.2 274.2 L578.3 276.7" fill="none" stroke="#ffa810" stroke-width="1.50" stroke-dasharray="1.45 2.23"/>
<path d="M610 141.3 L615.9 140 L621.7 138.7 L627.3 137.5 L632.8 136.3 L638.2 135.3 L643.4 134.3 L648.4 133.4 L653.3 132.5 L657.9 131.8 L662.5 131.1 L666.8 130.6 L671 130.1 L675 129.7 L678.8 129.4 L682.4 129.2 L685.9 129 L689.2 129 L692.3 129 L695.2 129.2 L698 129.4 L700.6 129.8 L703.1 130.2 L705.4 130.7 L707.6 131.3 L709.6 132 L711.5 132.7 L713.2 133.6 L714.9 134.5 L716.4 135.5 L717.8 136.6 L719.1 137.7 L720.4 139 L721.5 140.2 L722.5 141.6 L723.5 143 L724.4 144.5 L725.2 146.1 L726 147.7 L726.7 149.3 L727.3 151 L728 152.8 L728.5 154.6 L729.1 156.5 L729.6 158.4 L730.1 160.3 L730.5 162.3 L731 164.3 L731.4 166.4 L731.8 168.5 L732.2 170.6 L732.6 172.7 L732.9 174.9 L733.3 177.1 L733.7 179.4 L734.1 181.7 L734.5 184 L734.8 186.3 L735.2 188.6 L735.7 191 L736.1 193.4 L736.5 195.8 L737 198.2 L737.4 200.7 L737.9 203.1 L738.4 205.6 L738.9 208.1 L739.5 210.6 L740 213.1 L740.6 215.7 L741.2 218.2 L741.8 220.8 L742.5 223.4 L743.2 226 L743.9 228.6 L744.6 231.2 L745.3 233.8 L746.1 236.4 L746.9 239.1 L747.8 241.7 L748.6 244.4 L749.5 247 L750.5 249.7 L751.4 252.4 L752.4 255 L753.4 257.7 L754.4 260.4 L755.5 263.1 L756.6 265.8 L757.7 268.5 L758.9 271.3 L760.1 274 L761.3 276.7 M687.5 103.3 L694.9 101.5 L702.1 99.8 L709 98.3 L715.7 96.8 L722 95.4 L728.1 94.2 L733.8 93.1 L739.3 92.1 L744.3 91.3 L749.1 90.6 L753.5 90.1 L757.5 89.8 L761.2 89.6 L764.5 89.5 L767.5 89.6 L770.1 89.9 L772.5 90.3 L774.5 90.9 L776.2 91.7 L777.7 92.6 L778.9 93.6 L779.9 94.8 L780.7 96.1 L781.3 97.5 L781.7 99 L781.9 100.6 L782 102.3 L782 104.2 L781.9 106.1 L781.6 108.1 L781.3 110.1 L780.9 112.2 L780.4 114.4 L779.8 116.7 L779.3 119 L778.6 121.3 L778 123.7 L777.3 126.2 L776.5 128.7 L775.8 131.2 L775.1 133.7 L774.3 136.3 L773.5 139 L772.8 141.6 L772 144.3 L771.2 147 L770.5 149.7 L769.7 152.4 L769 155.2 L768.2 158 L767.5 160.8 L766.8 163.6 L766.2 166.4 L765.5 169.3 L764.9 172.1 L764.3 175 L763.7 177.9 L763.1 180.7 L762.6 183.6 L762.1 186.6 L761.6 189.5 L761.1 192.4 L760.7 195.3 L760.3 198.3 L760 201.2 L759.6 204.2 L759.3 207.2 L759.1 210.1 L758.8 213.1 L758.6 216.1 L758.5 219.1 L758.3 222.1 L758.3 225.1 L758.2 228.1 L758.2 231.1 L758.2 234.1 L758.2 237.1 L758.3 240.1 L758.4 243.1 L758.6 246.2 L758.8 249.2 L759 252.2 L759.3 255.3 L759.6 258.3 L760 261.3 L760.3 264.4 L760.8 267.4 L761.2 270.5 L761.7 273.5 M804.7 65.8 L808.6 65.5 L811.9 65.5 L814.6 65.7 L816.7 66.3 L818.2 67 L819.2 68.1 L819.8 69.3 L820 70.7 L819.9 72.3 L819.5 74.1 L818.8 76.1 L817.9 78.1 L816.9 80.3 L815.7 82.6 L814.4 85 L813 87.4 L811.5 89.9 L809.9 92.5 L808.3 95.2 L806.6 97.9 L804.9 100.6 L803.2 103.4 L801.5 106.2 L799.7 109 L797.9 111.9 L796.1 114.7 L794.4 117.6 L792.6 120.6 L790.8 123.5 L789.1 126.5 L787.3 129.5 L785.6 132.5 L783.9 135.5 L782.2 138.5 L780.6 141.5 L778.9 144.6 L777.3 147.6 L775.7 150.7 L774.1 153.7 L772.6 156.8 L771.1 159.9 L769.6 163 L768.2 166.1 L766.7 169.2 L765.4 172.3 L764 175.4 L762.7 178.5 L761.4 181.6 L760.2 184.8 L759 187.9 L757.8 191 L756.7 194.1 L755.6 197.3 L754.6 200.4 L753.5 203.6 L752.6 206.7 L751.7 209.8 L750.8 213 L749.9 216.1 L749.1 219.3 L748.4 222.5 L747.7 225.6 L747 228.8 L746.4 231.9 L745.8 235.1 L745.2 238.3 L744.7 241.4 L744.3 244.6 L743.9 247.8 L743.5 250.9 L743.2 254.1 L742.9 257.3 L742.7 260.4 L742.5 263.6 L742.4 266.8 L742.3 270 L742.3 273.1 L742.3 276.3 M766.7 84.2 L771.3 83.6 L775.4 83.1 L779.2 82.9 L782.6 82.8 L785.7 82.9 L788.3 83.1 L790.7 83.6 L792.6 84.2 L794.3 85 L795.7 86 L796.8 87.1 L797.7 88.3 L798.4 89.7 L798.9 91.2 L799.2 92.8 L799.3 94.6 L799.3 96.4 L799.2 98.4 L798.9 100.4 L798.6 102.5 L798.2 104.7 L797.7 106.9 L797.2 109.2 L796.6 111.6 L796 114 L795.3 116.5 L794.7 119 L793.9 121.5 L793.2 124.1 L792.5 126.7 L791.7 129.3 L790.9 132 L790.2 134.7 L789.4 137.4 L788.7 140.2 L787.9 143 L787.2 145.8 L786.4 148.6 L785.7 151.4 L785 154.2 L784.3 157.1 L783.6 160 L783 162.9 L782.3 165.8 L781.7 168.7 L781.1 171.6 L780.5 174.5 L780 177.4 L779.5 180.4 L779 183.4 L778.5 186.3 L778.1 189.3 L777.6 192.3 L777.3 195.3 L776.9 198.2 L776.6 201.2 L776.3 204.2 L776 207.3 L775.8 210.3 L775.6 213.3 L775.4 216.3 L775.2 219.3 L775.1 222.4 L775 225.4 L775 228.4 L775 231.5 L775 234.5 L775 237.6 L775.1 240.6 L775.2 243.7 L775.4 246.7 L775.6 249.8 L775.8 252.8 L776 255.9 L776.3 259 L776.6 262 L777 265.1 L777.3 268.2 L777.8 271.2 L778.2 274.3 M794.2 156.7 L792.3 159.9 L790.4 163.1 L788.6 166.3 L786.8 169.5 L785 172.7 L783.3 175.9 L781.6 179.1 L779.9 182.3 L778.3 185.5 L776.7 188.7 L775.2 191.9 L773.7 195.1 L772.2 198.3 L770.7 201.5 L769.3 204.7 L768 207.9 L766.6 211.1 L765.4 214.3 L764.1 217.5 L762.9 220.7 L761.7 223.9 L760.6 227.1 L759.5 230.3 L758.5 233.5 L757.5 236.7 L756.5 239.9 L755.6 243.1 L754.8 246.3 L753.9 249.5 L753.2 252.7 L752.4 255.9 L751.7 259.1 L751.1 262.3 L750.5 265.5 L749.9 268.7 L749.4 271.9 L748.9 275.1 L748.5 278.3" fill="none" stroke="#ff2000" stroke-width="1.50" stroke-dasharray="1.45 2.23"/>
<path d="M931.7 163.3 L929 161 L926.4 158.7 L923.7 156.5 L921 154.3 L918.4 152.1 L915.7 150 L913 148 L910.4 145.9 L907.7 143.9 L905.1 142 L902.4 140.1 L899.8 138.3 L897.1 136.5 L894.4 134.8 L891.8 133.1 L889.1 131.6 L886.4 130 L883.8 128.6 L881.1 127.2 L878.4 125.9 L875.6 124.7 L872.9 123.6 L870.1 122.6 L867.4 121.6 L864.5 120.8 L861.7 120 L858.8 119.4 L855.8 118.8 L852.9 118.4 L849.8 118 L846.7 117.8 L843.6 117.6 L840.4 117.6 L837.1 117.7 L833.7 117.8 L830.3 118.1 L826.8 118.5 L823.2 119 L819.6 119.6 L815.8 120.3 L812 121.1 L808.1 122 L804.2 122.9 L800.1 124 L796 125.2 L791.7 126.4 L787.4 127.7 L783.1 129.1 L778.7 130.6 L774.1 132.1 L769.6 133.7 L765 135.4 L760.3 137.1 L755.5 138.9 L750.7 140.8 L745.9 142.7 L741 144.7 L736.1 146.7 L731.1 148.7 L726.2 150.8 L721.1 152.9 L716.1 155.1 L711.1 157.3 L706 159.6 L700.9 161.8 L695.8 164.1 L690.7 166.5 L685.6 168.9 L680.5 171.2 L675.4 173.7 L670.3 176.1 L665.3 178.6 L660.2 181.1 L655.2 183.6 L650.2 186.1 L645.2 188.7 L640.2 191.2 L635.3 193.8 L630.4 196.4 L625.5 199 L620.7 201.7 L615.9 204.3 L611.2 207 L606.5 209.6 L601.8 212.3 L597.2 215 L592.7 217.7 L588.2 220.4 L583.8 223.2 L579.4 225.9 M1002.8 66.7 L1003.3 65.7 L1004.4 64.9 L1006.3 64.4 L1008.9 64.2 L1012.2 64.2 L1016.4 64.6 M784 65.2 L784.6 66 L784.4 67.1 L783.6 68.4 L782.3 69.9 L780.4 71.6 L778.2 73.5 L775.5 75.5 L772.6 77.6 L769.4 79.9 L766 82.2 L762.4 84.6 L758.7 87.1 L754.8 89.6 L750.9 92.3 L746.8 94.9 L742.7 97.6 L738.5 100.4 L734.3 103.2 L730.1 106 L725.8 108.9 L721.5 111.7 L717.3 114.6 L713 117.5 L708.7 120.5 L704.5 123.4 L700.3 126.4 L696.1 129.4 L691.9 132.4 L687.8 135.4 L683.7 138.4 L679.6 141.5 L675.6 144.5 L671.6 147.6 L667.7 150.6 L663.8 153.7 L660 156.8 L656.3 159.8 L652.6 162.9 L648.9 166 L645.3 169.1 L641.8 172.2 L638.4 175.3 L635 178.4 L631.7 181.5 L628.4 184.7 L625.2 187.8 L622.1 190.9 L619.1 194 L616.2 197.2 L613.3 200.3 L610.5 203.4 L607.8 206.6 L605.1 209.7 L602.6 212.9 L600.1 216 L597.7 219.1 L595.4 222.3 L593.2 225.4 L591.1 228.6" fill="none" stroke="#e018f0" stroke-width="1.50" stroke-dasharray="1.45 2.23"/>
<path d="M542.2 158.3 L536 161.4 L530 164.5 L524 167.7 L518.1 170.8 L512.3 174 L506.7 177.1 L501.1 180.2 L495.6 183.4 L490.3 186.5 L485 189.7 L479.9 192.9 L474.9 196 L470 199.2 L465.2 202.3 L460.6 205.5 M876.7 65.6 L875.8 63.4 L874.8 61.5 L873.6 59.7 L872.2 58.1 L870.6 56.8 L868.7 55.8 L866.3 55.1 L863.6 54.8 L860.3 54.8 L856.5 55.2 L852.1 56 L847.2 57.1 L841.8 58.4 L835.8 60.1 L829.5 61.9 L822.7 63.9 L815.7 66.1 L808.4 68.4 L800.8 70.9 L793 73.4 L785.1 76 L777.1 78.6 L768.9 81.4 L760.7 84.1 L752.4 87 L744 89.8 L735.6 92.7 L727.2 95.6 L718.7 98.5 L710.3 101.5 L701.8 104.5 L693.4 107.5 L684.9 110.5 L676.5 113.5 L668.2 116.5 L659.8 119.6 L651.5 122.6 L643.3 125.7 L635.1 128.8 L627 131.9 L618.9 134.9 L610.9 138 L602.9 141.1 L595 144.2 L587.2 147.3 L579.5 150.5 L571.8 153.6 L564.3 156.7 L556.8 159.8 L549.4 162.9 L542.1 166.1 L534.9 169.2 L527.8 172.3 L520.8 175.5 L513.9 178.6 L507.1 181.8 L500.4 184.9 L493.8 188 L487.4 191.2 L481 194.3 L474.8 197.5 L468.7 200.6 L462.7 203.8" fill="none" stroke="#58d010" stroke-width="1.50" stroke-dasharray="1.45 2.23"/>
<path d="M439.5 205.7 L443.1 203.6 L446.9 201.5 L451 199.4 L455.2 197.3 L459.6 195.3 L464.1 193.4 L468.6 191.5 L473.2 189.7 L477.7 188.1 L482.1 186.5 L486.5 185.1 L490.6 183.9 L494.5 182.8 L498.2 182 L501.6 181.3 L504.6 180.7 L507.3 180.4 L509.6 180.3 L511.5 180.4 L513 180.7 L514.1 181.3 L514.8 182 L515 182.8 L514.8 183.9 L514.2 185.1 L513.3 186.5 L512 188.1 L510.3 189.7 L508.4 191.5 L506.1 193.4 L503.6 195.3 L500.8 197.3 L497.9 199.4 L494.7 201.5 L491.4 203.6 L488 205.7 L484.5 207.8 L480.9 209.9 L477.2 211.9 L473.5 213.8 L469.8 215.7 L466.1 217.5 L462.5 219.2 L458.8 220.8 L455.3 222.3 L451.8 223.6 L448.4 224.8 L445.1 225.9 L442 226.8 L439 227.5 L436.2 228.1 L433.6 228.5 L431.2 228.8 L428.9 228.9 L426.9 228.8 L425.2 228.5 L423.7 228.1 L422.5 227.5 L421.6 226.8 L420.9 225.9 L420.6 224.8 L420.7 223.6 L421 222.3 L421.7 220.8 L422.7 219.2 L424.1 217.5 L425.9 215.7 L427.9 213.8 L430.3 211.9 L433.1 209.9 L436.1 207.8 L439.5 205.7Z" fill="none" stroke="#58d010" stroke-width="2.35"/>
<path d="M566 268.7 L567.1 266.6 L568.5 264.5 L570 262.5 L571.7 260.4 L573.7 258.4 L575.7 256.5 L577.9 254.7 L580.3 253 L582.7 251.4 L585.2 249.9 L587.7 248.6 L590.3 247.4 L592.8 246.4 L595.3 245.6 L597.8 244.9 L600.2 244.4 L602.5 244.1 L604.7 244 L606.7 244.1 L608.6 244.4 L610.3 244.9 L611.9 245.6 L613.3 246.4 L614.5 247.4 L615.5 248.6 L616.3 249.9 L616.9 251.4 L617.4 253 L617.6 254.7 L617.7 256.5 L617.6 258.4 L617.3 260.4 L616.9 262.5 L616.2 264.5 L615.5 266.6 L614.5 268.7 L613.5 270.9 L612.3 272.9 L610.9 275 L609.5 277 L607.9 278.9 L606.3 280.7 L604.5 282.5 L602.6 284.1 L600.7 285.7 L598.7 287 L596.7 288.3 L594.5 289.4 L592.4 290.4 L590.2 291.1 L588.1 291.8 L585.9 292.2 L583.7 292.5 L581.6 292.6 L579.5 292.5 L577.5 292.2 L575.5 291.8 L573.7 291.1 L572 290.4 L570.4 289.4 L568.9 288.3 L567.6 287 L566.5 285.7 L565.5 284.1 L564.8 282.5 L564.3 280.7 L564 278.9 L563.9 277 L564.1 275 L564.5 272.9 L565.2 270.9 L566 268.7Z" fill="none" stroke="#ffa810" stroke-width="2.35"/>
<path d="M556.3 231.2 L558.3 229.1 L560.5 227 L562.9 224.9 L565.5 222.9 L568.3 220.9 L571.2 218.9 L574.2 217.1 L577.3 215.3 L580.4 213.7 L583.6 212.2 L586.7 210.8 L589.8 209.6 L592.8 208.6 L595.7 207.7 L598.5 207 L601.1 206.5 L603.5 206.2 L605.7 206.1 L607.7 206.2 L609.5 206.5 L611 207 L612.3 207.7 L613.3 208.6 L614 209.6 L614.5 210.8 L614.7 212.2 L614.7 213.7 L614.4 215.3 L613.9 217.1 L613.2 218.9 L612.3 220.9 L611.1 222.9 L609.8 224.9 L608.3 227 L606.6 229.1 L604.8 231.2 L602.9 233.3 L600.8 235.4 L598.7 237.4 L596.4 239.4 L594.1 241.3 L591.6 243.1 L589.2 244.8 L586.7 246.4 L584.1 247.9 L581.6 249.3 L579 250.5 L576.5 251.6 L574 252.5 L571.5 253.3 L569.1 253.9 L566.7 254.3 L564.5 254.6 L562.3 254.7 L560.2 254.6 L558.3 254.3 L556.6 253.9 L554.9 253.3 L553.5 252.5 L552.3 251.6 L551.3 250.5 L550.5 249.3 L549.9 247.9 L549.6 246.4 L549.5 244.8 L549.7 243.1 L550.1 241.3 L550.8 239.4 L551.8 237.4 L553 235.4 L554.5 233.3 L556.3 231.2Z" fill="none" stroke="#e018f0" stroke-width="2.35"/>
<path d="M733.9 278.8 L734.4 276.6 L735 274.5 L735.9 272.5 L736.9 270.4 L738.2 268.5 L739.6 266.6 L741.1 264.8 L742.8 263 L744.6 261.5 L746.6 260 L748.6 258.7 L750.7 257.5 L752.8 256.5 L755 255.7 L757.2 255 L759.4 254.5 L761.5 254.2 L763.7 254.1 L765.7 254.2 L767.8 254.5 L769.7 255 L771.5 255.7 L773.3 256.5 L774.9 257.5 L776.3 258.7 L777.7 260 L778.9 261.5 L779.9 263 L780.8 264.8 L781.6 266.6 L782.1 268.5 L782.5 270.4 L782.7 272.5 L782.8 274.5 L782.7 276.6 L782.4 278.8 L781.9 280.9 L781.3 282.9 L780.5 285 L779.6 287 L778.5 288.9 L777.3 290.8 L776 292.5 L774.5 294.2 L772.9 295.7 L771.2 297.1 L769.4 298.4 L767.5 299.5 L765.6 300.4 L763.5 301.2 L761.5 301.9 L759.4 302.3 L757.3 302.6 L755.2 302.7 L753.1 302.6 L751 302.3 L749 301.9 L747 301.2 L745.1 300.4 L743.3 299.5 L741.6 298.4 L740.1 297.1 L738.7 295.7 L737.4 294.2 L736.3 292.5 L735.4 290.8 L734.6 288.9 L734.1 287 L733.7 285 L733.6 282.9 L733.6 280.9 L733.9 278.8Z" fill="none" stroke="#ff2000" stroke-width="2.35"/>
<path d="M726.3 109.7 L729.8 107.2 L733.2 104.7 L736.6 102.3 L740 99.9 L743.3 97.5 M754.2 116.3 L759 113.3 L763.8 110.2 L768.6 107.2 L773.5 104.1 L778.4 101.1 L783.3 98 L788.3 95 M764.2 117.8 L769.1 114.8 L774 111.7 L779 108.7 L783.9 105.7 L788.9 102.6 L793.9 99.6 L799 96.6 L804 93.6 L809.1 90.6 L814.1 87.7 L819.2 84.7 M794.2 168.3 L797.5 167.3 L800.7 166.4 L804 165.5 L807.2 164.7 M935 52 L938.3 54.5 L941.5 57.1 L944.8 59.6 L948 62.2 M988.3 66.7 L990.7 68.7 L993.3 70.9 L996.1 73.1 L998.9 75.3 M922.8 89.1 L925.6 90.5 L928.4 92 L931.2 93.6 L934 95.2 L936.9 96.9 M895.6 97.2 L898.1 97.7 L900.6 98.3 L903.1 99 L905.6 99.8 M896.1 128.7 L899.1 129.3 L902 130.1 L905 130.9 L908 131.7 L910.9 132.7 L913.9 133.7 L916.9 134.8 L919.9 136 L922.9 137.2 L925.9 138.5 L928.9 139.8 M1248.9 158.7 L1247.5 159.3 L1246.2 159.9 L1245 160.6 L1243.9 161.3 L1242.8 162" fill="none" stroke="#ffa810" stroke-width="1.75"/>
<path d="M610 141.3 L604 142.7 L597.8 144.2 L591.5 145.7 L585.1 147.3 L578.6 148.9 L572 150.6 L565.3 152.3 L558.5 154.1 L551.7 156 L544.8 157.8 L537.8 159.8 L530.8 161.7 L523.7 163.7 L516.5 165.8 L509.4 167.9 L502.2 170 M687.5 103.3 L680.2 105.1 L672.6 106.9 L664.9 108.8 L657 110.8 L649 112.9 L640.8 115 M804.7 65.8 L800.4 66.3 L795.6 67.1 L790.2 68 L784.3 69.1 L777.9 70.5 L771.1 71.9 L763.9 73.6 L756.2 75.3 L748.3 77.2 M766.7 84.2 L763.3 84.6 L759.7 85.2 L755.8 85.8 M794.2 156.7 L796.3 153.9 L798.4 151.1 L800.6 148.3 L802.8 145.6 L805 142.8 L807.2 140" fill="none" stroke="#ff2000" stroke-width="1.75"/>
<path d="M931.7 163.3 L933.8 165.2 L935.9 167.1 L938 169.1 M1002.8 66.7 L1003 67.9 L1003.5 69.2 L1004.5 70.7 L1005.8 72.4 L1007.3 74.1 L1009.1 76 L1011.1 78" fill="none" stroke="#e018f0" stroke-width="1.75"/>
<path d="M542.2 158.3 L546.4 156.2 L550.7 154.1 L555 152 M876.7 65.6 L877.4 67.5 L878 69.5 L878.6 71.5 L879.2 73.6 L879.7 75.8" fill="none" stroke="#58d010" stroke-width="1.75"/>
<circle cx="502.2" cy="170" r="1.3" fill="#ff7043"/>
<circle cx="640.8" cy="115" r="1.3" fill="#ff7043"/>
<circle cx="748.3" cy="77.2" r="1.3" fill="#ff7043"/>
<circle cx="755.8" cy="85.8" r="1.3" fill="#ff7043"/>
<circle cx="807.2" cy="140" r="1.3" fill="#ff7043"/>
<circle cx="743.3" cy="97.5" r="1.3" fill="#ff7043"/>
<circle cx="788.3" cy="95" r="1.3" fill="#ff7043"/>
<circle cx="819.2" cy="84.7" r="1.3" fill="#ff7043"/>
<circle cx="807.2" cy="164.7" r="1.3" fill="#ff7043"/>
<circle cx="948" cy="62.2" r="1.3" fill="#ff7043"/>
<circle cx="998.9" cy="75.3" r="1.3" fill="#ff7043"/>
<circle cx="936.9" cy="96.9" r="1.3" fill="#ff7043"/>
<circle cx="905.6" cy="99.8" r="1.3" fill="#ff7043"/>
<circle cx="928.9" cy="139.8" r="1.3" fill="#ff7043"/>
<circle cx="1242.8" cy="162" r="1.3" fill="#ff7043"/>
<circle cx="938" cy="169.1" r="1.3" fill="#ff7043"/>
<circle cx="1011.1" cy="78" r="1.3" fill="#ff7043"/>
<circle cx="555" cy="152" r="1.3" fill="#ff7043"/>
<circle cx="879.7" cy="75.8" r="1.3" fill="#ff7043"/>
<path d="M758.1 276.7h6.4M761.3 273.5v6.4M758.5 273.5h6.4M761.7 270.3v6.4M739.1 276.3h6.4M742.3 273.1v6.4M775 274.3h6.4M778.2 271.1v6.4M745.3 278.3h6.4M748.5 275.1v6.4M586.8 269.4h6.4M590 266.2v6.4M585.9 268.3h6.4M589.1 265.1v6.4M588 268.4h6.4M591.2 265.2v6.4M589.3 271.3h6.4M592.5 268.1v6.4M589.3 270h6.4M592.5 266.8v6.4M588.2 269.5h6.4M591.4 266.3v6.4M591.6 269.8h6.4M594.8 266.6v6.4M589.4 270.3h6.4M592.6 267.1v6.4M591.3 271.7h6.4M594.5 268.5v6.4M575.1 276.7h6.4M578.3 273.5v6.4M576.2 225.9h6.4M579.4 222.7v6.4M587.9 228.6h6.4M591.1 225.4v6.4M457.4 205.5h6.4M460.6 202.3v6.4M459.5 203.8h6.4M462.7 200.6v6.4" fill="none" stroke="#ff0000" stroke-width="1.4"/>
<g fill="#fff" font-size="9.72" letter-spacing="0.3" font-family="DejaVu Sans, Liberation Sans, sans-serif" text-anchor="middle">
<text x="465" y="208.1">LMI</text>
<text x="590.5" y="271.4">ORI</text>
<text x="581" y="232.9">EGE</text>
<text x="759" y="280.8">STA</text>
</g>
<g stroke="#6e6e6e" stroke-width="2.08" stroke-dasharray="2.08 3.44" fill="none">
<path d="M74 842.5 V641.5"/>
<path d="M218.2 842.5 V641.5"/>
<path d="M364.9 842.5 V641.5"/>
<path d="M505.6 842.5 V641.5"/>
<path d="M650.8 842.5 V641.5"/>
<path d="M797 842.5 V641.5"/>
<path d="M940.8 842.5 V641.5"/>
<path d="M1090.9 842.5 V641.5"/>
<path d="M1239 842.5 V641.5"/>
<path d="M1393.1 842.5 V641.5"/>
<path d="M1548.1 842.5 V641.5"/>
<path d="M1687.4 842.5 V641.5"/>
</g>
<g fill="#555" font-size="27.4" font-family="DejaVu Sans, Liberation Sans, sans-serif" text-anchor="end">
<text transform="translate(148.9 643.4) rotate(-90) scale(1 1.05)">APR</text>
<text transform="translate(294 644.6) rotate(-90) scale(1 1.05)">MAY</text>
<text transform="translate(435.9 640.7) rotate(-90) scale(1 1.05)">JUN</text>
<text transform="translate(576.1 641.2) rotate(-90) scale(1 1.05)">JUL</text>
<text transform="translate(722.8 642.3) rotate(-90) scale(1 1.05)">AUG</text>
<text transform="translate(872.2 643.3) rotate(-90) scale(1 1.05)">SEP</text>
<text transform="translate(1016.1 644.4) rotate(-90) scale(1 1.05)">OCT</text>
<text transform="translate(1169.1 644.8) rotate(-90) scale(1 1.05)">NOV</text>
<text transform="translate(1318 644.2) rotate(-90) scale(1 1.05)">DEC</text>
<text transform="translate(1469.1 640.6) rotate(-90) scale(1 1.05)">JAN</text>
<text transform="translate(1628 644.5) rotate(-90) scale(1 1.05)">FEB</text>
<text transform="translate(1766 645.1) rotate(-90) scale(1 1.05)">MAR</text>
</g>
<g stroke="#ff0000" stroke-width="1.39" stroke-dasharray="5.14 2.22" fill="none">
<path d="M1062.5 842.5 V641.5"/>
<path d="M1064.5 842.5 V641.5"/>
</g>
<g stroke="#ee82ee" stroke-width="4.00">
<path d="M105.7 834H129.5"/>
<path d="M164.6 834H345.3"/>
<path d="M365.7 834H625"/>
<path d="M635.5 834H786.8"/>
<path d="M807.2 834H899.7"/>
<path d="M920 834H973.3"/>
<path d="M983.8 834H1066.5"/>
<path d="M1081.9 834H1203.8"/>
<path d="M1243.8 834H1326.5"/>
<path d="M1337 834H1355.9"/>
<path d="M1381.2 834H1444.2"/>
<path d="M1459.7 834H1512.9"/>
<path d="M1523.4 834H1547.2"/>
<path d="M1724.6 834H1748.3"/>
<path d="M1758.9 834H1782.7"/>
</g>
<g stroke="#e018f0" stroke-width="4.00">
<path d="M164.6 818H188.4"/>
<path d="M223.5 818H286.5"/>
<path d="M311.8 818H340.4"/>
<path d="M365.7 818H492.5"/>
<path d="M508 818H654.4"/>
<path d="M704.2 818H737.8"/>
<path d="M772.9 818H845.7"/>
<path d="M871 818H988"/>
<path d="M1003.4 818H1017.4"/>
<path d="M1062.3 818H1213.6"/>
<path d="M1243.8 818H1267.6"/>
<path d="M1292.9 818H1316.6"/>
<path d="M1341.9 818H1365.7"/>
<path d="M1386.1 818H1429.5"/>
<path d="M1459.7 818H1483.4"/>
<path d="M1548 818H1571.7"/>
</g>
<g stroke="#ff2000" stroke-width="4.00">
<path d="M164.6 802H188.4"/>
<path d="M257.8 802H487.6"/>
<path d="M508 802H615.2"/>
<path d="M625.7 802H718.2"/>
<path d="M728.7 802H826.1"/>
<path d="M949.5 802H1149.9"/>
<path d="M1160.4 802H1248"/>
<path d="M1258.5 802H1444.2"/>
<path d="M1459.7 802H1483.4"/>
<path d="M1552.9 802H1576.6"/>
</g>
<g stroke="#ffa810" stroke-width="4.00">
<path d="M194 785H217.8"/>
<path d="M321.6 785H507.2"/>
<path d="M517.8 785H541.6"/>
<path d="M557 785H683.8"/>
<path d="M807.2 785H831"/>
<path d="M954.4 785H973.3"/>
<path d="M988.7 785H1125.3"/>
<path d="M1155.5 785H1218.5"/>
<path d="M1243.8 785H1267.6"/>
<path d="M1317.4 785H1341.2"/>
<path d="M1395.9 785H1419.7"/>
<path d="M1464.6 785H1650.2"/>
</g>
<g stroke="#fff000" stroke-width="4.00">
<path d="M341.2 769H369.9"/>
<path d="M409.9 769H448.4"/>
<path d="M468.7 769H492.5"/>
<path d="M527.6 769H546.5"/>
<path d="M561.9 769H590.6"/>
<path d="M615.9 769H649.5"/>
<path d="M959.3 769H988"/>
<path d="M1062.3 769H1086.1"/>
<path d="M1101.5 769H1125.3"/>
<path d="M1160.4 769H1194"/>
<path d="M1248.7 769H1272.5"/>
<path d="M1425.3 769H1512.9"/>
</g>
<g stroke="#a8ff28" stroke-width="4.00">
<path d="M419.7 752H443.5"/>
<path d="M532.5 752H556.3"/>
<path d="M566.8 752H590.6"/>
<path d="M620.8 752H742.7"/>
<path d="M969.1 752H1135.1"/>
<path d="M1184.9 752H1346.1"/>
<path d="M1469.5 752H1493.2"/>
</g>
<g stroke="#58d010" stroke-width="4.00">
<path d="M429.5 736H453.3"/>
<path d="M576.7 736H732.9"/>
<path d="M993.6 736H1105.7"/>
<path d="M1116.3 736H1223.4"/>
<path d="M1263.4 736H1292.1"/>
<path d="M1489.1 736H1512.9"/>
</g>
<g stroke="#00f078" stroke-width="4.00">
<path d="M591.4 720H615.2"/>
<path d="M655.1 720H772.1"/>
<path d="M1072.1 720H1243.1"/>
<path d="M1263.4 720H1287.2"/>
</g>
<g stroke="#18d8f0" stroke-width="4.00">
<path d="M596.3 703H732.9"/>
<path d="M1091.7 703H1120.4"/>
<path d="M1199.7 703H1223.4"/>
<path d="M1273.2 703H1326.5"/>
</g>
<g stroke="#0010c8" stroke-width="4.00">
<path d="M1111.4 687H1135.1"/>
</g>
<g stroke="#fff" stroke-width="2" fill="none">
<path d="M113 834h8M117 830v8M240 834h8M244 830v8M511 834h8M515 830v8M707 834h8M711 830v8M833 834h8M837 830v8M962 834h8M966 830v8M986 834h8M990 830v8M1116 834h8M1120 830v8M1295 834h8M1299 830v8M1342 834h8M1346 830v8M1413 834h8M1417 830v8M1482 834h8M1486 830v8M1531 834h8M1535 830v8M1732 834h8M1736 830v8M1766 834h8M1770 830v8M172 818h8M176 814v8M256 818h8M260 814v8M323 818h8M327 814v8M437 818h8M441 814v8M599 818h8M603 814v8M717 818h8M721 814v8M793 818h8M797 814v8M939 818h8M943 814v8M1006 818h8M1010 814v8M1153 818h8M1157 814v8M1251 818h8M1255 814v8M1300 818h8M1304 814v8M1349 818h8M1353 814v8M1403 818h8M1407 814v8M1467 818h8M1471 814v8M1555 818h8M1559 814v8M174 802h8M178 798v8M378 802h8M382 798v8M544 802h8M548 798v8M682 802h8M686 798v8M740 802h8M744 798v8M1075 802h8M1079 798v8M1217 802h8M1221 798v8M1305 802h8M1309 798v8M1467 802h8M1471 798v8M1560 802h8M1564 798v8M202 785h8M206 781v8M400 785h8M404 781v8M525 785h8M529 781v8M639 785h8M643 781v8M815 785h8M819 781v8M959 785h8M963 781v8M1040 785h8M1044 781v8M1188 785h8M1192 781v8M1251 785h8M1255 781v8M1325 785h8M1329 781v8M1403 785h8M1407 781v8M1546 785h8M1550 781v8M356 769h8M360 765v8M426 769h8M430 765v8M476 769h8M480 765v8M534 769h8M538 765v8M571 769h8M575 765v8M631 769h8M635 765v8M974 769h8M978 765v8M1070 769h8M1074 765v8M1109 769h8M1113 765v8M1178 769h8M1182 765v8M1256 769h8M1260 765v8M1467 769h8M1471 765v8M427 752h8M431 748v8M540 752h8M544 748v8M574 752h8M578 748v8M704 752h8M708 748v8M1094 752h8M1098 748v8M1271 752h8M1275 748v8M1477 752h8M1481 748v8M437 736h8M441 732v8M631 736h8M635 732v8M1039 736h8M1043 732v8M1168 736h8M1172 732v8M1275 736h8M1279 732v8M1497 736h8M1501 732v8M599 720h8M603 716v8M727 720h8M731 716v8M1188 720h8M1192 716v8M1271 720h8M1275 716v8M687 703h8M691 699v8M1102 703h8M1106 699v8M1207 703h8M1211 699v8M1300 703h8M1304 699v8M1119 687h8M1123 683v8"/>
</g>
<g fill="#fff" font-size="9.72" letter-spacing="0.5" font-family="DejaVu Sans, Liberation Sans, sans-serif" text-anchor="middle">
<text x="116.9" y="831">KSE</text>
<text x="254.3" y="831">ETA</text>
<text x="494.6" y="831">NZC</text>
<text x="710.5" y="831">NDA</text>
<text x="852.7" y="831">SPE</text>
<text x="946" y="831">ARD</text>
<text x="1024.4" y="831">EGE</text>
<text x="1142.2" y="831">NTA</text>
<text x="1284.4" y="831">MON</text>
<text x="1343.3" y="831">URS</text>
<text x="1412" y="831">AHY</text>
<text x="1485.6" y="831">GUM</text>
<text x="1534.6" y="831">OHY</text>
<text x="1735.7" y="831">XHE</text>
<text x="1770.1" y="831">EVI</text>
<text x="175.8" y="815">AVB</text>
<text x="254.3" y="815">ELY</text>
<text x="322.9" y="815">CAM</text>
<text x="430.9" y="815">SSG</text>
<text x="578" y="815">PCA</text>
<text x="720.3" y="815">AUD</text>
<text x="808.6" y="815">AUR</text>
<text x="931.2" y="815">DSX</text>
<text x="1009.7" y="815">OCU</text>
<text x="1137.3" y="815">OER</text>
<text x="1255" y="815">DKD</text>
<text x="1304.1" y="815">DSV</text>
<text x="1353.1" y="815">ALY</text>
<text x="1407.1" y="815">JLE</text>
<text x="1470.8" y="815">SCC</text>
<text x="1559.1" y="815">FEV</text>
<text x="175.8" y="799">LYR</text>
<text x="372" y="799">JMC</text>
<text x="558.4" y="799">JPE</text>
<text x="671.2" y="799">PAU</text>
<text x="774.3" y="799">NIA</text>
<text x="1049" y="799">STA</text>
<text x="1205.9" y="799">NOO</text>
<text x="1353.1" y="799">COM</text>
<text x="1470.8" y="799">NCC</text>
<text x="1564" y="799">FED</text>
<text x="205.2" y="782">HVI</text>
<text x="411.2" y="782">ARI</text>
<text x="529" y="782">SZC</text>
<text x="617.3" y="782">CAP</text>
<text x="818.4" y="782">NUE</text>
<text x="960.7" y="782">OCT</text>
<text x="1058.8" y="782">ORI</text>
<text x="1186.3" y="782">AMO</text>
<text x="1255" y="782">DPC</text>
<text x="1328.6" y="782">XVI</text>
<text x="1407.1" y="782">QUA</text>
<text x="1559.1" y="782">AAN</text>
<text x="352.4" y="766">TAH</text>
<text x="430.9" y="766">JEA</text>
<text x="479.9" y="766">JIP</text>
<text x="538.8" y="766">PPS</text>
<text x="578" y="766">ZCS</text>
<text x="632" y="766">GDR</text>
<text x="970.5" y="766">DRA</text>
<text x="1073.5" y="766">LUM</text>
<text x="1112.7" y="766">RPU</text>
<text x="1176.5" y="766">THA</text>
<text x="1259.9" y="766">PSU</text>
<text x="1470.8" y="766">XCB</text>
<text x="430.9" y="749">JRC</text>
<text x="543.7" y="749">CAN</text>
<text x="578" y="749">FAN</text>
<text x="681" y="749">PER</text>
<text x="1049" y="749">CTA</text>
<text x="1264.8" y="749">HYD</text>
<text x="1480.7" y="749">XUM</text>
<text x="440.7" y="733">COR</text>
<text x="656.5" y="733">SDA</text>
<text x="1049" y="733">LMI</text>
<text x="1166.7" y="733">LEO</text>
<text x="1274.6" y="733">EHY</text>
<text x="1500.3" y="733">ECV</text>
<text x="602.6" y="717">JXA</text>
<text x="715.4" y="717">KCG</text>
<text x="1156.9" y="717">AND</text>
<text x="1274.6" y="717">DAD</text>
<text x="666.3" y="700">ERI</text>
<text x="1107.8" y="700">SLD</text>
<text x="1210.9" y="700">ORS</text>
<text x="1299.2" y="700">GEM</text>
<text x="1122.5" y="684">KUM</text>
</g>
<rect x="19.5" y="641.5" width="1766" height="201" fill="none" stroke="#fff" stroke-width="1"/>
<path d="M19.5 842.5v4.9M264.5 842.5v4.9M510.5 842.5v4.9M755.5 842.5v4.9M1000.5 842.5v4.9M1245.5 842.5v4.9M1491.5 842.5v4.9M1736.5 842.5v4.9" stroke="#fff" stroke-width="1" fill="none"/>
<g fill="#fff" font-size="13.89" font-family="DejaVu Sans, Liberation Sans, sans-serif" text-anchor="middle">
<text x="19.5" y="862">0</text>
<text x="264.8" y="862">50</text>
<text x="510.1" y="862">100</text>
<text x="755.3" y="862">150</text>
<text x="1000.6" y="862">200</text>
<text x="1245.9" y="862">250</text>
<text x="1491.2" y="862">300</text>
<text x="1736.4" y="862">350</text>
<text x="902" y="882">Solar longitude (deg)</text>
</g>
</svg>
</body></html>
